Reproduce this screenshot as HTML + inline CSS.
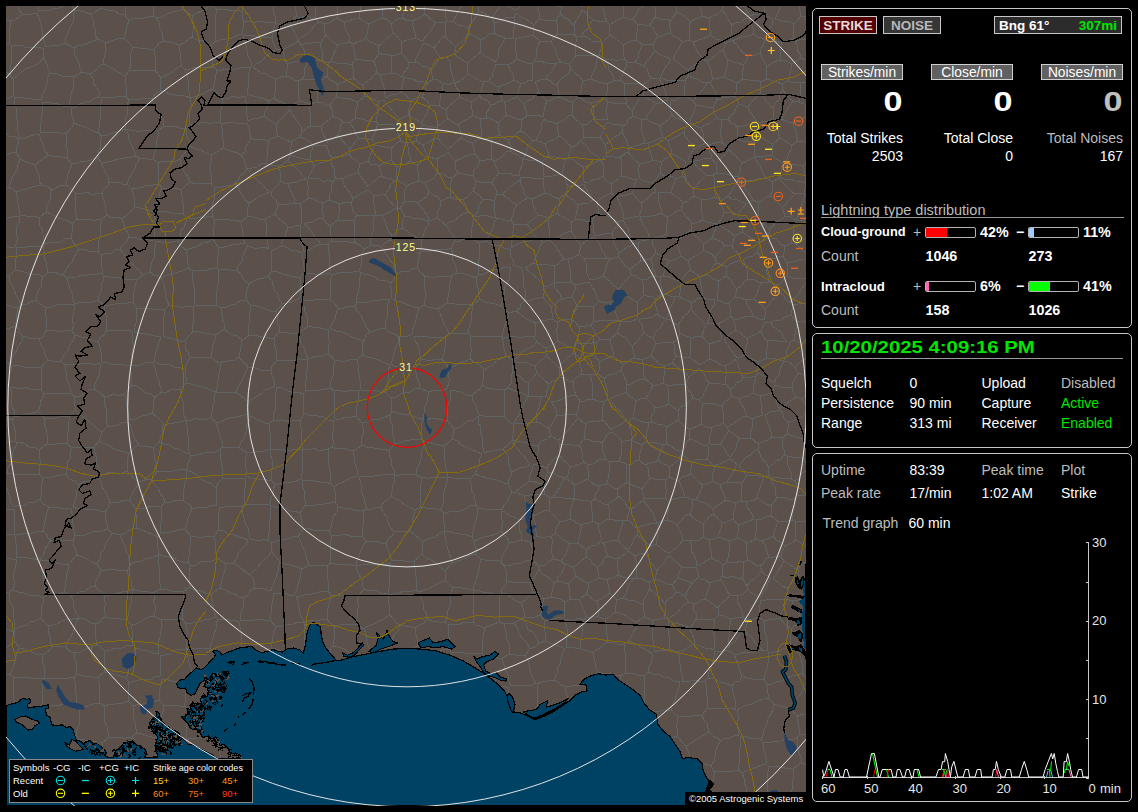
<!DOCTYPE html>
<html><head><meta charset="utf-8"><title>NexStorm</title><style>
*{box-sizing:border-box}
html,body{margin:0;padding:0;background:#000;}
body{width:1138px;height:812px;overflow:hidden;position:relative;font-family:"Liberation Sans",sans-serif;color:#fff;font-size:13.5px}
svg text{font-family:"Liberation Sans",sans-serif}
.box{position:absolute;left:812px;width:320px;border:1px solid #c8c8c8;border-radius:5px}
.t{position:absolute;white-space:nowrap;line-height:1;}
.b{font-weight:bold}
.g{color:#bdbdbd}
.gr{color:#00e600}
.btn{position:absolute;height:18px;border:1px solid #c8c8c8;text-align:center;font-weight:bold;font-size:13.5px;line-height:17px;white-space:nowrap}
.lbl{position:absolute;height:16px;width:82px;border:1px solid #d0d0d0;background:#616161;text-align:center;font-size:13.8px;line-height:15px;white-space:nowrap}
.big{position:absolute;font-weight:bold;font-size:28px;line-height:1;text-align:right;white-space:nowrap;transform-origin:right center;transform:scaleX(1.22)}
.bar{position:absolute;width:51px;height:11px;border:1px solid #b4b4b4;border-radius:2px;background:#000;overflow:hidden}
.bar i{display:block;height:100%}
.hr{position:absolute;height:1px;background:#9a9a9a}
</style></head><body>
<svg width="800" height="800" viewBox="6 6 800 800" style="position:absolute;left:6px;top:6px" shape-rendering="crispEdges">
<rect x="6" y="6" width="800" height="800" fill="#5c504a"/>
<path d="M38 12 L38 7 L37 2 L37 -3 L35 -9 L35 -14 M7 -14 L9 -9 L11 -5 L15 -0 L18 5 L19 10 L22 14 M22 14 L27 14 L32 14 L37 13 M-17 10 L-11 11 L-6 15 L-1 16 L5 20 L10 21 M22 14 L19 17 L15 20 L10 21 M-13 47 L-7 45 L-2 45 L3 43 L9 43 M10 21 L10 27 L9 32 L9 38 L9 43 M10 75 L6 72 L-0 70 L-5 68 L-10 65 L-15 64 M10 75 L10 68 L11 63 L11 57 L11 51 L11 45 M11 45 L9 43 M154 16 L153 11 L153 5 L152 -1 L154 -7 L152 -12 M154 16 L149 17 L144 18 L139 18 L133 19 L129 21 M129 21 L125 15 M125 15 L125 9 L126 5 L127 1 L129 -5 L130 -11 M179 -16 L180 -12 L182 -5 L182 -1 L183 4 L183 9 M156 18 L162 17 L167 14 L172 12 L177 11 L183 9 M156 18 L154 16 M105 -16 L105 -9 L104 -4 L101 2 L101 8 M101 8 L107 10 L111 10 L115 11 L119 14 L125 15 M597 601 L598 605 L598 610 L599 617 M597 601 L601 599 L606 596 L610 593 M599 617 L605 619 M616 612 L612 615 L610 617 L605 619 M616 612 L615 607 L616 605 L617 600 M610 593 L614 597 L617 600 M586 594 L579 600 M586 594 L589 596 L594 600 L597 601 M599 617 L594 616 L591 617 L586 617 M579 600 L581 603 L583 609 L585 613 L586 617 M475 707 L475 711 L473 716 L474 720 L473 727 L472 731 M475 707 L481 707 L485 708 L492 711 L497 711 L502 712 M502 712 L501 718 L502 722 L500 730 L502 734 L500 741 M472 731 L475 734 L479 736 L483 740 L486 743 M500 741 L496 741 L492 743 L486 743 M447 739 L452 738 L457 736 L461 733 L467 732 L472 731 M445 741 L447 745 L449 750 L451 754 L451 759 M451 759 L457 760 L463 761 L466 762 L473 763 L478 765 M478 765 L479 759 L482 754 L484 748 L486 743 M423 419 L422 423 L421 430 L421 433 L421 439 M423 419 L417 418 L411 415 L407 414 L402 414 L397 413 L392 411 M392 411 L390 415 M421 439 L416 439 L410 440 L405 441 L399 443 L395 443 M390 415 L390 420 L393 426 L392 432 L394 438 L395 443 M280 562 L285 564 L290 565 L297 567 L302 569 M280 562 L278 568 L278 572 L276 577 L274 583 L272 587 L271 591 M302 569 L300 575 L300 579 L298 584 L297 589 L294 595 M294 595 L289 595 L285 593 L278 594 L273 593 M70 4 L75 10 M70 4 L70 -2 L71 -7 L71 -13 M75 10 L81 11 L85 12 L90 14 M90 14 L94 13 L98 10 L101 8 M38 12 L44 10 L50 10 L54 8 L59 8 L64 6 L70 4 M183 9 L186 11 L192 16 M211 -7 L211 -3 L212 2 L212 6 M212 6 L208 7 L202 11 L197 13 L192 16 M869 693 L863 693 L858 691 L853 689 L846 688 L840 686 L835 686 L830 685 L825 684 L820 683 L814 682 L808 681 M869 693 L863 694 L859 697 L851 699 L848 699 L841 703 L835 704 L830 706 L825 708 L819 709 L813 711 L808 714 L804 714 L797 716 M808 681 L804 685 L802 691 L800 695 L797 698 L794 705 L791 709 M791 709 L797 716 M808 681 L802 673 M768 698 L774 704 M768 698 L768 694 L767 690 L767 685 M802 673 L797 675 L792 676 L787 678 L781 681 L776 682 L772 684 L767 685 M791 709 L785 707 L780 706 L774 704 M1481 767 L1474 768 L1468 768 L1463 766 L1458 766 L1452 766 L1446 766 L1439 764 L1433 765 L1427 765 L1421 764 L1415 765 L1410 764 L1403 763 L1398 763 L1392 764 L1386 763 L1379 763 L1374 762 L1367 762 L1361 761 L1355 762 L1350 760 L1342 761 L1337 760 L1331 759 L1326 760 L1320 760 L1313 759 L1308 759 L1301 760 L1296 757 L1290 759 L1285 758 L1277 758 L1273 758 L1266 757 L1260 756 L1254 756 L1247 757 L1242 755 L1235 756 L1229 756 L1225 754 L1218 755 L1212 755 L1206 754 L1199 754 L1195 753 L1188 753 L1182 752 L1176 752 L1170 752 L1165 751 L1158 751 L1151 751 L1147 752 L1140 750 L1135 750 L1128 750 L1121 750 L1116 749 L1111 749 L1104 749 L1099 749 L1092 749 L1085 748 L1081 747 L1075 748 L1068 746 L1062 746 L1056 746 L1051 747 L1045 746 L1039 745 L1033 744 L1027 746 L1021 744 L1014 744 L1010 745 L1003 745 L997 743 L991 744 L985 743 L979 742 L974 742 L968 741 L962 741 L956 740 L949 741 L944 741 L937 741 L932 739 L925 740 L920 739 L914 739 L908 739 L901 739 L894 739 L890 739 L884 738 L877 737 L870 738 L865 736 L859 736 L854 736 L848 735 L841 735 L836 734 L830 736 L824 734 L817 734 L811 734 L807 735 L800 734 M801 763 L807 765 L812 767 L817 767 L823 769 L829 772 L833 773 L840 776 L845 776 L850 779 L856 781 L861 782 M801 763 L801 758 L799 753 L798 748 L797 742 L797 738 M800 734 L797 738 M818 536 L814 540 L809 544 L806 547 M822 560 L818 560 L814 558 L809 557 M809 557 L806 552 L806 547 M817 581 L808 581 M798 569 L799 575 M798 569 L801 565 L806 561 L809 557 M808 581 L804 578 L799 575 M781 557 L784 561 M781 557 L782 552 L785 546 M784 561 L789 564 L794 568 L798 569 M785 546 L789 544 L793 542 L796 540 M796 540 L801 543 L806 547 M781 557 L778 556 L774 557 L769 557 M773 536 L776 540 L782 543 L785 546 M773 536 L767 539 L762 541 M769 557 L767 552 L765 545 L762 541 M586 594 L588 589 L589 583 M610 593 L609 589 L608 584 L607 580 M607 580 L599 578 M589 583 L595 580 L599 578 M584 620 L579 618 L575 620 L570 620 L565 619 M584 620 L583 625 L582 630 L582 636 L580 642 L580 648 M580 648 L575 648 L571 647 L567 648 M565 619 L566 624 L567 629 L567 635 L566 641 L567 648 M447 739 L447 733 L447 729 L447 724 L448 717 L447 712 L446 707 M446 707 L452 708 L458 706 L463 707 L470 707 L475 706 M485 658 L483 663 L483 667 L480 673 L481 677 L478 682 M485 658 L482 653 M478 682 L476 685 M451 677 L456 679 L460 681 L466 681 L471 683 L476 685 M451 677 L452 673 L451 667 L451 662 L451 657 L451 652 M482 653 L476 653 L472 653 L465 653 L462 652 L455 653 L451 652 M426 734 L432 740 M426 734 L420 734 L415 736 L408 736 L404 738 L397 738 L392 739 M432 740 L430 744 L427 749 L424 753 L420 758 L418 761 L415 767 M415 767 L410 767 L404 765 L398 766 M398 766 L397 760 L396 754 L394 749 L392 744 L392 739 M420 707 L421 713 L422 719 L424 724 L424 728 L426 734 M420 707 L415 707 L409 710 L403 710 L397 711 M397 711 L395 716 L394 721 L394 726 L394 733 L391 738 M503 711 L508 712 L515 713 L519 715 L525 715 L530 716 M503 711 L505 705 L506 699 L508 693 L509 688 M530 716 L533 712 L535 708 L537 706 M537 706 L537 701 L538 695 L537 689 L537 684 M536 683 L532 685 L526 685 L522 685 L515 685 L511 686 M478 682 L484 683 L489 684 L492 686 L498 686 L503 686 L509 688 M475 706 L476 702 L474 694 L475 691 L476 685 M502 658 L504 665 L505 669 L508 675 L509 681 L511 686 M502 658 L497 658 L490 657 L485 658 M449 789 L448 784 L445 779 L444 775 M449 789 L444 793 L438 794 L433 798 L428 800 L422 802 M444 775 L440 775 L435 773 L429 773 L425 772 L419 771 M419 771 L419 777 L421 782 L420 787 L420 791 L422 797 L421 801 M445 741 L442 741 L437 740 L432 740 M451 759 L448 766 L447 770 L444 775 M415 767 L419 771 M280 562 L277 558 L274 555 L272 551 M302 569 L309 565 M309 565 L307 560 L306 555 L305 550 L302 546 L300 540 L298 536 M298 536 L293 537 L287 539 L282 540 L277 541 L271 543 M272 551 L271 543 M330 388 L330 383 L333 376 L333 372 L334 365 L335 360 M330 388 L334 391 M334 391 L339 390 L345 392 L350 390 L354 390 L360 391 M361 390 L360 384 L360 381 L359 374 L358 370 L358 364 L357 360 M335 360 L341 361 L346 361 L352 359 L357 360 M423 419 L427 420 L432 418 L438 419 L442 420 L447 420 M423 419 L424 414 L425 407 L427 402 L428 397 L429 392 M429 392 L434 390 L438 390 L444 390 L447 388 M450 390 L450 396 L450 401 L447 407 L448 413 L447 420 M425 442 L421 439 M425 442 L429 442 L434 444 L439 445 L444 446 M444 446 L448 443 L452 439 M452 439 L453 435 L454 429 M447 420 L450 424 L454 429 M334 391 L334 397 L335 402 L334 407 L334 412 L335 419 M360 391 L358 395 L358 402 L357 406 L356 412 L356 416 M335 419 L341 419 L346 417 L351 417 L356 416 M390 415 L385 417 L380 419 L373 419 L368 422 L362 423 M389 451 L395 443 M389 451 L384 449 L379 449 L374 448 L366 447 L362 445 M362 445 L361 439 L363 434 L363 428 L362 423 M392 411 L391 406 L392 402 L391 398 M429 392 L420 388 M420 388 L415 389 L410 392 L405 392 L401 394 L396 397 L391 398 M361 390 L366 390 L370 391 L376 390 L380 392 L385 392 M356 416 L362 423 M391 398 L385 392 M362 355 L357 360 M362 355 L368 357 L373 358 L379 360 L385 363 L390 365 M385 392 L387 387 L388 381 L388 375 L388 370 L390 365 M276 627 L270 620 M276 627 L282 626 L286 625 L293 624 L298 622 L304 622 M270 620 L271 614 L271 610 L272 604 L273 599 L273 593 M296 596 L298 601 L299 607 L299 611 L301 616 L304 622 M12 590 L9 592 M12 590 L14 586 L14 581 L13 575 L15 569 L16 564 L16 559 M16 559 L11 559 L7 558 L1 559 L-4 559 L-9 560 L-15 559 M-4 594 L1 593 L5 593 L9 592 M820 381 L817 384 L813 388 L808 392 L806 395 L802 399 M834 397 L829 398 L823 400 L817 401 L811 404 L805 405 M805 405 L802 399 M814 420 L809 417 L806 414 M806 414 L805 405 M822 164 L817 162 L811 160 M811 160 L810 155 L809 149 L809 143 M809 143 L812 140 L815 138 L819 135 M824 178 L819 178 L815 179 L810 182 L805 182 M811 160 L803 166 M803 166 L804 171 L805 176 L805 182 M809 143 L805 142 L798 141 M805 117 L809 119 L813 123 L815 126 L818 129 M805 117 L801 120 L798 120 L793 122 M798 141 L796 136 L796 131 L794 127 L793 122 M10 75 L13 79 M-5 102 L-1 102 L4 98 L9 98 L13 96 M13 79 L13 84 L13 91 L13 96 M37 13 L39 18 L41 24 L42 30 L42 35 L44 41 L46 47 M75 10 L73 17 L73 22 L70 28 L69 31 L66 37 L65 43 M65 43 L60 45 L56 45 L50 46 L46 47 M90 14 L93 19 L93 24 L95 29 L95 35 L98 39 M98 39 L93 41 L88 43 L83 45 L79 45 L74 48 M65 43 L74 48 M11 45 L16 45 L23 46 L27 48 L34 47 L39 47 L44 49 M13 79 L18 75 L21 72 L26 69 L31 67 L35 65 L40 62 L43 58 M43 58 L44 49 M20 159 L26 162 L30 163 L35 165 M20 159 L18 164 L17 170 L13 176 L11 181 L9 187 M9 187 L16 192 M16 192 L22 190 L26 189 L32 187 L37 186 L42 185 M42 185 L39 181 L39 175 L37 171 L35 165 M390 283 L386 280 L380 281 L375 277 L369 275 L364 274 L360 272 M390 283 L391 289 L391 293 L391 298 M390 299 L384 299 L379 300 L373 301 L368 302 L362 302 L357 303 M357 303 L356 298 L358 293 L359 288 L359 282 L360 277 L360 272 M398 274 L395 269 L393 264 L390 260 L387 255 L384 251 L381 247 M398 274 L402 271 L407 272 L412 269 L417 268 M417 268 L418 263 L419 258 L419 254 M419 254 L414 251 L409 249 L405 247 L399 244 L395 243 L390 240 M381 247 L384 244 L390 240 M405 216 L400 208 M405 216 L410 217 L414 219 L418 218 L425 220 L429 220 M418 203 L420 206 L424 211 L427 215 L429 220 M418 203 L414 201 L410 202 L405 201 M405 201 L400 208 M446 225 L442 222 L437 218 M446 225 L449 230 L450 232 L454 236 L455 241 M421 241 L421 247 L421 251 M421 241 L423 236 L425 230 L428 226 L429 221 M421 251 L426 252 L434 250 L440 249 L444 250 L451 248 M455 241 L451 248 M429 221 L437 218 M474 216 L473 222 L472 227 L471 233 L471 238 M474 216 L468 212 M468 212 L463 214 L460 216 L454 221 L450 221 L446 225 M471 238 L466 238 L460 241 L455 241 M402 228 L397 231 L395 233 L392 236 M402 228 L407 231 L410 234 L416 237 L421 241 M419 254 L421 251 M390 240 L392 236 M405 216 L403 220 L402 224 L402 228 M429 191 L427 196 L422 200 L418 203 M429 191 L433 195 L438 197 L441 201 M441 201 L440 207 L437 213 L437 218 M538 215 L535 210 L533 205 L532 199 M538 215 L534 219 L529 222 L527 224 M517 205 L519 203 L524 200 L527 198 M517 205 L514 210 L513 215 L511 220 M527 198 L532 199 M527 224 L522 225 L519 224 L514 224 M511 220 L514 224 M502 194 L506 191 L511 186 L516 183 L520 180 M502 194 L506 197 L509 199 L512 202 L517 205 M520 180 L521 185 L523 188 L524 193 L527 198 M520 177 L527 177 L532 178 L537 178 L543 178 M520 177 L520 180 M532 199 L537 197 L541 195 L544 193 M544 193 L544 189 L543 184 L543 178 M499 173 L497 169 L495 164 L494 161 M499 173 L503 174 L510 173 L513 175 L519 176 M494 161 L499 159 L503 156 L506 152 L510 151 M510 151 L515 154 L518 155 L522 159 M519 176 L520 170 L522 165 L522 159 M502 194 L497 194 M497 194 L496 190 L494 186 L492 183 M492 183 L493 180 L496 177 L499 173 M544 177 L543 172 L543 167 L542 162 M542 162 L537 161 L532 160 L528 160 L523 159 M508 140 L512 138 L516 134 L520 131 M508 140 L510 145 L510 151 M520 131 L525 133 L529 137 L533 141 M523 159 L526 154 L527 149 L529 145 L533 141 M516 13 L519 16 L526 19 L529 21 L534 25 M516 13 L514 17 M534 25 L533 31 L533 35 M515 39 L519 38 L525 37 L529 36 L533 35 M514 17 L514 22 L514 29 L513 32 L513 38 M348 -4 L353 -2 L357 0 L360 3 M360 3 L365 1 L370 -1 M805 117 L805 110 L806 105 M812 102 L806 105 M806 60 L810 58 L814 56 L818 55 M806 60 L807 64 L809 71 L810 75 L811 80 M816 84 L811 80 M821 15 L814 14 L809 16 L804 17 M804 17 L806 21 L809 25 L812 30 L813 34 L816 38 M348 -4 L344 -1 L339 2 M330 -4 L334 -1 L339 2 M239 622 L240 627 L241 631 L241 637 L241 642 L242 648 M239 622 L234 620 L229 620 L224 619 L218 619 M218 619 L216 624 L216 629 L214 634 L213 638 L211 644 L210 649 M210 649 L214 651 L217 653 L220 656 M220 656 L225 655 L228 652 L234 651 L237 650 L242 648 M303 797 L297 796 L292 798 L285 798 L280 799 L274 798 M303 797 L303 792 L304 787 L303 782 L305 777 L304 772 M274 798 L271 794 L269 788 M304 772 L297 771 L292 772 L286 771 L280 771 L275 769 M269 788 L270 783 L272 778 L273 774 L275 769 M796 397 L802 399 M796 397 L793 399 L787 403 L785 405 L780 409 M788 422 L793 421 L797 419 L801 417 L806 414 M788 422 L784 418 L783 414 L780 410 M795 367 L793 365 L789 362 L784 361 M795 367 L798 373 M784 361 L782 365 L780 370 L779 375 L776 378 L774 383 M798 373 L796 377 L793 382 L792 387 M792 387 L786 387 L781 387 L775 385 M812 353 L808 358 L803 360 L799 363 L795 367 M820 381 L815 379 L809 376 L804 375 L798 373 M796 397 L793 391 L792 387 M772 393 L775 397 L777 404 L780 409 M772 393 L775 385 M753 316 L751 310 L747 305 L746 300 M753 316 L759 319 L764 320 M754 299 L758 303 L762 305 L765 309 M754 299 L746 300 M765 309 L765 315 L764 320 M682 176 L683 170 L685 166 L685 161 M682 176 L686 179 L689 184 L693 188 M693 188 L697 186 L700 181 L703 178 L706 175 M690 161 L695 164 L698 168 L702 171 L706 175 M617 600 L623 598 M607 580 L610 578 L613 578 L618 575 M618 575 L623 577 L629 578 L634 579 M634 579 L630 583 L628 587 L626 594 L623 598 M616 612 L622 614 L627 616 L630 619 L636 622 M636 622 L645 617 M645 617 L644 612 L643 608 L643 605 M623 598 L628 600 L633 600 L637 602 L643 605 M801 763 L794 768 M804 805 L800 801 L794 798 L790 795 M804 805 L808 803 L814 801 L820 799 L824 796 L830 794 L836 793 L840 791 L846 789 L851 786 L855 783 L861 782 M790 795 L792 790 L792 785 L793 779 L793 774 L794 768 M797 738 L791 740 L786 739 L781 741 L775 741 L769 743 L763 742 M794 768 L790 768 L785 768 L779 767 L774 766 L768 766 M766 764 L766 758 L765 753 L763 748 L763 742 M774 704 L773 709 L771 714 L768 719 L767 724 L764 730 L763 735 L761 740 M797 716 L798 722 L799 729 L800 734 M763 742 L761 740 M747 793 L752 793 L757 793 L763 796 L767 796 M747 793 L743 797 L738 801 M738 801 L737 806 L737 811 L738 818 L739 825 L738 831 L740 836 L739 843 L739 847 L738 854 L740 859 L739 866 L740 872 L740 878 L740 883 L740 889 L740 895 L739 901 L740 907 L742 913 L741 919 L741 925 L740 931 L741 936 L742 943 L741 948 L742 954 L742 959 L742 966 L742 971 L741 978 L743 984 L743 989 M743 989 L743 984 L745 978 L746 972 L746 967 L748 960 L747 954 L748 948 L750 943 L751 937 L750 931 L751 925 L753 920 L754 914 L753 908 L754 904 L757 897 L758 891 L758 885 L759 879 L759 874 L760 868 L762 863 L761 855 L763 852 L764 846 L765 839 L765 834 L767 828 L766 821 L767 815 L768 811 L770 805 L770 799 M770 799 L767 796 M768 766 L768 772 L767 778 L767 784 L768 790 L767 796 M766 764 L762 765 L757 767 L752 769 L748 770 L742 773 M742 773 L744 778 L744 782 L746 787 L747 793 M790 795 L785 796 L781 797 L775 797 L770 799 M605 619 L606 625 L606 631 L607 635 L608 642 M586 617 L584 620 M580 648 L584 650 L589 651 L593 653 M593 653 L596 650 L600 648 L604 644 L608 642 M591 684 L587 683 L581 685 L576 685 L571 686 L565 686 M591 684 L592 690 L594 693 L596 699 L597 704 L599 708 M565 686 L566 692 L567 695 L567 700 L567 706 L568 712 L569 716 M569 716 L574 716 L580 715 L586 717 L591 715 M591 715 L595 712 L599 708 M554 680 L558 682 L561 685 L565 686 M554 680 L557 673 L557 669 L560 664 L561 658 L562 655 L565 649 M593 653 L594 658 L595 662 L596 668 L598 672 M598 672 L595 676 L593 681 L591 684 M554 680 L548 681 L542 682 L537 684 M567 718 L561 716 L557 713 L551 711 L547 711 L542 707 L537 706 M592 741 L592 735 L590 731 L590 725 L592 721 L591 715 M592 741 L586 740 L581 740 L576 739 L570 740 L564 739 L560 739 M560 739 L561 734 L564 729 L564 723 L567 718 M686 746 L683 743 L680 739 L677 736 M686 746 L691 743 L694 741 L699 738 L704 735 L709 732 M677 736 L678 731 L676 725 L678 721 L677 716 M677 716 L681 716 L686 716 L691 716 L698 715 L702 715 M709 732 L708 728 L707 723 L704 720 L702 715 M705 681 L706 686 L706 692 L707 697 L707 703 L708 708 M705 681 L698 681 L694 680 L688 682 L682 681 M671 710 L677 716 M671 710 L672 705 L675 700 L677 693 L679 687 L680 682 M708 708 L702 715 M657 571 L654 566 L650 562 L648 557 L645 553 M657 571 L660 567 L664 563 L666 559 L670 556 M645 553 L648 549 L652 546 M652 546 L656 544 M656 544 L661 548 L664 551 L670 553 M705 681 L708 678 M708 708 L714 708 L720 708 L725 709 L731 708 L736 710 M736 710 L735 705 L735 700 L734 696 L732 689 L732 686 M708 678 L714 678 L719 682 L722 682 L727 684 L732 686 M768 698 L763 699 L758 701 L752 704 L748 705 L742 707 L737 710 M767 685 L764 680 M764 680 L760 679 L753 679 L747 678 L742 676 M742 676 L740 681 L735 682 L732 686 M715 651 L722 651 L727 650 M715 651 L714 657 L713 661 L711 668 L709 672 L708 678 M742 676 L740 671 L738 664 L736 659 L734 654 M734 654 L727 650 M718 608 L714 605 L709 601 L705 599 M718 608 L721 604 L727 599 L730 595 M709 583 L709 588 L707 593 L705 599 M709 583 L715 581 L720 580 M730 595 L727 591 L726 588 L723 583 L720 580 M784 561 L782 565 L778 571 L776 575 L773 579 M799 575 L795 579 L791 584 L787 588 M787 588 L782 586 L778 582 L773 579 M802 673 L802 669 L802 663 L801 659 L799 653 M799 653 L805 652 L810 649 L814 647 M764 680 L765 674 L767 668 L768 663 L768 659 L769 652 M799 653 L794 650 L790 648 M790 648 L785 648 L780 651 L774 652 L769 652 M763 650 L756 651 L752 653 L746 652 L739 654 L734 654 M763 650 L768 651 M645 741 L640 743 L635 745 L630 746 M645 741 L645 736 L648 731 L648 725 L649 721 L648 716 L650 710 M650 710 L645 707 M645 707 L641 708 L636 709 L631 710 L625 709 L621 710 M618 712 L618 718 L617 722 L618 729 L619 734 L619 738 M618 712 L621 710 M619 738 L623 741 L627 744 L630 746 M671 710 L665 710 L660 711 L654 711 L650 710 M656 747 L652 746 L648 744 L645 741 M656 747 L662 746 L666 741 L672 738 L677 736 M592 741 L597 747 M597 747 L603 744 L609 744 L614 741 L619 738 M599 708 L603 708 L609 709 L612 710 L618 712 M598 672 L603 674 L608 673 L614 675 L620 676 M620 676 L620 681 L619 688 L621 693 L622 698 L621 705 L621 710 M635 556 L636 561 L637 566 L636 572 L637 578 M635 556 L639 554 L645 553 M637 578 L642 578 L646 581 L649 582 M657 571 L655 579 M655 579 L649 582 M634 579 L637 578 M643 605 L644 599 L647 595 L649 589 M649 582 L649 589 M398 674 L402 675 L407 676 L412 679 L416 678 L422 680 M398 674 L396 670 L394 665 L393 661 M422 680 L424 674 L423 669 L425 664 L425 660 L426 655 M426 655 L423 651 L421 649 L417 646 M417 646 L411 649 L408 651 L403 654 L397 659 L393 661 M422 705 L428 705 L433 705 L439 705 L446 707 M422 705 L423 700 L421 694 L423 691 L421 686 L422 680 M446 707 L447 701 L446 694 L448 689 L449 684 L450 678 M422 680 L427 679 L434 679 L440 679 L444 679 L450 678 M420 707 L422 705 M398 674 L394 679 L392 683 L389 687 L386 690 M397 711 L392 708 L389 704 M386 690 L387 695 L388 698 L389 704 M426 655 L433 652 L436 653 L444 649 L449 649 M449 649 L451 652 M392 773 L386 772 L381 771 L378 770 L372 768 L367 769 L362 767 M392 773 L392 779 L392 784 L391 789 M390 790 L384 791 L380 794 L375 795 L370 797 L365 798 L359 801 M358 800 L357 795 L355 789 L355 784 L354 778 L353 773 M353 773 L358 770 L362 767 M398 766 L392 773 M365 736 L370 737 L375 736 L380 738 L387 738 L391 738 M365 736 L364 741 L365 746 L363 751 L363 756 L362 761 L362 767 M421 801 L416 798 L410 796 L406 795 L401 792 L395 791 L391 789 M408 1036 L408 1032 L406 1025 L406 1019 L407 1014 L405 1008 L405 1001 L406 996 L405 989 L404 984 L405 977 L404 973 L403 967 L404 960 L402 954 L402 949 L401 943 L400 938 L400 930 L399 925 L400 919 L400 913 L400 907 L398 902 L397 896 L397 891 L397 885 L397 879 L396 872 L396 867 L395 860 L396 854 L394 850 L393 843 L393 836 L393 831 L392 827 L392 820 L392 814 L391 808 L392 802 L390 796 L390 790 M409 1045 L409 1039 L411 1033 L411 1027 L410 1022 L410 1015 L411 1009 L411 1003 L413 998 L411 992 L413 986 L412 980 L412 973 L413 967 L414 962 L414 955 L413 950 L416 944 L415 939 L416 933 L415 926 L415 921 L417 915 L417 909 L418 903 L417 896 L418 890 L418 885 L418 879 L418 874 L418 866 L418 861 L420 855 L420 850 L420 844 L420 837 L420 831 L421 826 L422 820 L422 814 L423 807 L422 802 M408 1036 L407 1031 L406 1024 L405 1020 L404 1014 L403 1008 L402 1002 L400 996 L399 990 L398 984 L395 979 L395 974 L395 967 L393 961 L392 956 L391 950 L388 945 L388 939 L388 933 L385 927 L384 922 L382 916 L383 910 L381 904 L379 898 L379 893 L376 887 L376 881 L375 875 L373 870 L372 864 L372 857 L369 852 L369 846 L367 841 L366 836 L366 829 L364 825 L363 819 L363 811 L360 806 L359 801 M328 804 L329 811 L330 815 L331 823 L332 828 L333 835 L334 839 L334 845 L335 853 L336 858 L339 863 L338 869 L339 876 L341 881 L343 888 L343 894 L345 899 L345 905 L345 912 L347 916 L346 922 L348 928 L348 936 L350 941 L352 945 L351 953 L353 958 L354 964 L354 969 L356 975 L356 982 L358 987 L358 993 L358 999 L361 1005 L361 1012 L363 1016 L364 1024 L363 1028 L366 1036 L365 1042 L366 1048 L369 1052 L370 1059 L370 1065 L371 1071 L371 1077 L371 1083 L374 1089 L375 1094 L376 1099 L377 1107 L378 1111 L379 1119 L378 1123 L379 1130 L381 1135 L382 1142 L384 1147 L383 1153 L385 1160 L385 1166 L387 1171 L387 1177 L389 1182 L390 1188 L389 1194 L391 1201 L391 1208 L392 1212 L394 1219 L396 1226 L395 1231 L396 1237 L397 1243 L400 1248 L401 1255 L401 1259 L402 1266 L402 1273 L404 1278 L404 1283 L406 1291 L406 1295 L408 1303 L408 1306 L410 1314 L410 1320 L410 1326 L412 1331 M329 804 L335 803 L340 802 L346 802 L353 801 L358 800 M331 768 L338 768 L343 770 L348 771 L353 773 M331 768 L331 774 L331 779 L330 783 L331 788 L331 794 L329 800 L329 804 M520 864 L519 859 L518 853 L516 848 L516 841 L514 836 L513 831 L511 825 L511 818 L510 812 L507 806 L507 800 L506 795 M520 864 L521 859 L522 853 L525 847 L526 841 L527 837 L528 832 L530 826 L532 820 L532 816 L535 809 L535 805 L537 799 M534 795 L537 799 M534 795 L529 794 L523 795 L518 794 L512 794 L507 795 M473 791 L469 791 L463 792 L457 792 L452 791 M473 791 L476 794 L480 798 L482 800 M482 800 L481 806 L480 811 L479 818 L477 822 L476 829 L474 835 L474 841 L471 846 L470 850 L469 857 L468 862 L466 868 L465 873 L465 880 L462 886 L462 890 L461 897 L459 902 L457 909 L455 913 L455 918 L453 925 L451 930 L450 937 L449 942 L449 948 L448 954 L446 959 L444 964 L443 971 L441 977 L440 983 L439 988 M452 791 L452 798 L450 804 L451 809 L451 815 L451 822 L449 827 L450 834 L450 838 L449 845 L449 851 L448 856 L446 863 L446 869 L447 874 L447 880 L445 887 L444 893 L445 899 L444 904 L443 910 L444 917 L443 922 L443 929 L442 934 L443 939 L442 946 L441 952 L440 958 L441 965 L439 970 L441 976 L438 982 L439 988 M478 765 L477 770 L476 776 L475 780 L474 786 L473 791 M449 789 L452 791 M506 775 L502 772 L497 772 L493 769 L488 768 L482 767 L478 765 M506 775 L507 780 L507 785 L506 790 L507 795 M506 795 L501 796 L496 798 L491 798 L486 800 L482 800 M594 766 L595 762 L596 755 L595 751 L597 747 M594 766 L589 766 L583 765 L578 763 L573 761 L569 761 L563 760 M560 739 L557 742 M557 742 L558 746 L561 752 L562 754 L563 760 M568 792 L564 796 L559 799 L555 803 M568 792 L566 787 L565 783 L562 779 L559 775 L558 770 M555 803 L552 802 L547 802 L543 799 L537 799 M534 795 L535 791 L536 787 L538 780 L539 776 M558 770 L554 772 L549 774 L543 775 L539 776 M328 804 L323 804 L318 802 L311 802 L306 802 M306 802 L303 797 M304 772 L310 767 M330 767 L325 767 L321 767 L315 768 L310 767 M68 565 L62 564 L57 563 L51 562 L46 560 L40 560 M68 565 L68 571 L66 576 L66 581 L65 587 L64 592 M39 560 L41 566 L42 571 L43 577 L44 583 L45 590 L47 595 M64 592 L59 594 L52 594 L47 595 M12 590 L18 592 L22 592 L28 595 L32 595 L39 596 L43 598 M17 558 L22 557 L28 558 L34 559 L39 560 M43 598 L47 595 M39 801 L45 802 L51 800 L55 800 L61 799 L67 800 M39 801 L40 808 L41 812 L43 819 L42 825 L43 831 L45 836 L44 843 L45 848 L46 855 L47 861 L50 867 L48 872 L51 878 L51 884 L52 889 L52 896 L54 901 L55 907 L54 912 L56 918 L57 925 L58 930 L59 937 L59 942 L60 949 L60 955 L62 960 L64 965 L65 971 L66 977 L66 984 L67 990 L67 995 L68 1001 L69 1006 L69 1012 L71 1018 L71 1025 L73 1030 M67 800 L66 806 L69 813 L69 818 L69 824 L70 830 L70 834 L70 841 L70 847 L71 852 L72 858 L71 865 L71 871 L73 878 L72 882 L74 888 L73 895 L75 901 L76 907 L76 913 L75 917 L76 925 L77 930 L77 936 M72 794 L78 796 L83 797 L88 799 L93 802 L98 804 M72 794 L67 800 M98 804 L97 809 L97 816 L97 821 L94 827 L94 832 L94 839 L93 845 L92 849 L91 855 L90 861 L87 867 L87 873 L87 878 L86 884 L85 889 L83 895 L83 902 L82 908 L82 912 L79 920 L78 925 L79 930 L77 936 M126 805 L126 810 L126 816 L126 822 L125 829 L126 834 L126 840 L127 848 L126 854 L125 858 L126 865 L128 870 L126 877 L127 882 L126 889 L127 894 L127 900 L127 907 L127 914 L127 919 L128 926 L127 931 L128 937 L127 942 L127 948 L127 955 L128 961 L128 967 L129 973 L127 978 L128 985 L127 991 L129 996 L129 1003 L128 1009 L128 1015 L128 1021 L128 1026 L128 1032 L128 1039 L128 1045 L128 1051 L129 1057 L129 1062 L128 1068 L128 1074 L129 1080 L128 1086 L129 1093 L130 1099 L128 1103 L128 1111 L129 1116 L128 1122 L128 1128 L130 1134 L130 1141 L130 1146 L130 1152 L130 1159 L130 1165 L129 1171 L131 1176 L129 1183 L131 1189 L129 1194 L130 1201 L130 1207 L130 1211 L130 1219 L131 1224 L130 1229 L129 1236 L130 1242 L130 1248 L131 1255 L131 1260 L130 1267 L130 1271 L131 1278 L130 1285 L131 1290 L131 1296 L130 1303 L131 1307 L132 1314 L132 1320 L131 1327 L132 1333 L130 1338 L132 1344 L130 1350 L131 1356 L131 1363 L133 1367 L132 1374 L131 1380 L132 1387 L131 1393 L132 1399 L133 1404 L132 1411 L132 1417 L133 1422 L132 1427 L133 1434 L132 1441 L133 1446 L132 1452 L133 1458 L132 1465 L132 1470 L132 1476 L134 1482 L133 1488 L132 1495 L132 1499 L133 1506 L133 1512 L133 1519 L134 1525 L133 1530 L133 1536 L133 1543 L134 1548 L134 1553 L133 1561 L135 1566 L133 1573 L134 1579 L133 1584 L135 1589 L135 1595 L134 1603 L135 1609 L135 1615 L133 1621 L135 1626 L134 1632 L135 1638 L133 1645 L134 1650 L135 1656 L134 1662 L136 1668 L134 1675 L135 1681 L134 1687 L136 1692 L134 1698 L136 1704 L136 1709 L136 1717 L136 1722 L134 1729 L135 1735 L136 1740 L135 1745 L136 1752 L137 1759 L135 1765 L136 1771 L136 1776 L136 1783 L135 1787 L136 1795 L135 1801 L135 1805 L136 1811 L136 1818 L136 1823 L136 1830 L136 1836 L136 1841 L137 1848 L136 1853 L136 1860 L138 1865 L136 1872 L136 1878 L136 1885 L137 1889 L138 1895 L137 1902 L137 1908 L138 1914 L137 1919 L137 1925 L136 1932 L138 1937 L137 1944 L137 1950 L137 1957 L137 1962 L139 1968 L137 1974 L138 1979 L137 1987 L137 1991 L137 1998 L139 2003 L138 2010 L138 2015 L138 2022 L138 2027 L138 2033 L139 2040 L139 2046 L139 2052 L138 2059 L139 2065 L140 2070 L138 2075 L140 2081 L138 2088 L140 2093 L138 2099 L140 2107 L140 2112 L140 2118 L139 2124 L139 2129 L140 2136 L139 2141 L141 2148 L140 2153 L139 2161 L139 2167 L141 2171 L140 2178 L141 2183 L140 2191 L140 2195 L140 2201 L141 2208 L141 2214 L141 2219 L140 2226 L140 2233 L141 2238 L141 2244 L141 2250 L141 2256 L141 2263 L140 2268 L142 2274 L141 2280 L141 2285 L140 2291 L142 2298 L142 2304 L140 2310 L140 2316 L141 2321 L140 2328 L141 2333 L142 2340 L141 2345 L141 2352 L141 2358 L141 2365 L141 2370 L141 2376 L142 2382 L142 2386 L143 2394 L142 2400 L143 2405 L142 2411 L143 2418 L142 2423 L142 2429 L142 2436 L142 2441 L142 2448 L142 2453 L142 2460 L142 2465 L142 2471 L143 2478 L143 2484 L143 2490 L143 2494 L143 2502 L143 2508 L143 2514 L142 2520 L143 2526 L143 2532 L143 2537 L144 2544 L143 2549 L144 2556 L143 2562 L144 2568 L144 2574 L143 2578 L144 2585 L143 2591 L145 2598 L145 2603 L145 2609 L145 2615 L144 2622 L143 2628 L145 2634 L145 2639 L144 2646 L146 2652 L145 2657 L144 2663 L144 2669 L145 2675 L144 2682 L145 2688 L145 2692 L146 2700 L145 2704 L146 2712 L146 2718 L146 2723 L146 2729 L145 2736 L145 2742 L146 2747 L145 2752 L147 2759 L146 2765 L146 2771 L145 2777 L147 2783 L147 2789 L147 2794 L147 2801 L146 2807 L147 2814 L145 2820 L146 2824 L146 2832 L147 2836 L148 2844 L146 2849 L146 2855 L148 2861 L146 2868 L148 2874 L146 2880 L146 2886 L148 2891 L148 2897 L148 2902 L148 2908 L148 2915 L147 2922 L147 2926 L149 2933 L148 2938 L149 2946 L147 2952 L148 2957 L148 2962 L148 2968 L149 2975 L149 2981 L149 2987 L148 2992 L147 3000 L147 3005 L148 3012 L149 3018 L149 3024 L149 3028 L148 3036 L148 3040 L148 3047 L150 3054 L148 3060 L148 3065 L148 3071 L149 3077 L150 3083 L148 3090 L150 3095 L149 3101 L149 3107 L148 3114 L150 3118 L149 3126 L151 3132 L149 3136 L149 3142 L149 3149 L149 3154 L150 3160 L150 3167 L151 3173 L149 3178 L149 3185 L151 3191 L150 3197 L150 3203 L149 3208 L151 3216 L150 3220 L151 3227 L150 3232 L150 3239 L150 3244 L151 3251 L150 3256 L150 3264 L152 3268 L150 3274 L151 3281 L152 3288 L150 3293 L152 3298 L152 3305 L152 3311 L151 3316 L151 3322 L151 3328 L151 3335 L152 3341 L153 3348 L153 3352 L151 3358 L152 3366 L152 3371 L152 3376 L151 3382 L152 3388 L153 3394 L153 3402 L152 3406 L153 3412 L152 3418 L152 3424 L153 3432 L152 3436 L153 3442 L152 3449 L153 3454 L154 3461 L154 3468 L152 3473 L153 3478 L153 3484 L153 3490 L153 3498 L153 3504 L154 3508 L154 3514 L155 3521 L154 3526 L153 3532 L154 3538 L153 3544 L155 3552 L155 3557 L155 3562 L154 3569 L155 3574 L155 3581 L153 3586 L154 3592 L154 3598 L154 3604 L153 3611 L155 3617 L155 3623 L155 3629 L154 3634 L155 3640 L155 3646 L155 3652 L156 3659 L156 3665 L155 3672 L155 3677 L156 3682 L155 3689 L155 3694 L156 3700 L155 3706 L155 3712 L155 3719 L155 3725 L155 3730 L156 3737 L155 3743 L156 3747 L157 3755 L156 3760 L155 3767 L156 3772 L157 3778 L157 3785 L156 3791 L157 3797 L157 3802 L156 3809 L157 3813 L156 3820 L156 3826 L157 3833 L158 3839 L158 3845 L156 3850 L156 3856 L158 3863 L157 3869 L157 3874 L158 3881 L158 3887 L157 3893 L157 3899 L158 3904 L158 3911 L157 3916 L158 3922 L158 3928 L157 3934 L159 3940 L157 3947 L158 3952 L159 3959 L158 3964 L157 3970 L159 3975 L158 3982 L158 3988 L159 3995 L158 3999 L159 4007 L159 4011 L159 4019 L160 4025 L160 4031 L158 4036 L160 4042 L158 4048 L159 4055 L158 4059 L159 4067 L159 4072 L159 4078 L160 4084 L160 4091 L160 4095 L159 4102 L159 4109 L161 4115 L159 4120 L160 4125 L159 4133 L159 4138 L160 4143 L160 4150 L160 4156 L160 4163 L160 4167 L159 4174 L161 4180 L161 4186 L160 4193 L161 4199 L161 4203 L161 4209 L161 4216 L160 4222 L160 4228 L161 4235 L162 4241 L161 4245 L161 4253 L160 4259 L161 4265 L161 4270 L160 4276 L161 4283 L160 4288 L161 4294 L161 4300 L162 4305 L161 4311 L161 4318 L161 4324 L161 4330 L161 4336 L163 4342 L162 4347 L162 4353 L163 4359 L163 4367 L161 4373 L162 4377 L162 4385 L163 4391 L162 4396 L162 4402 L162 4407 L164 4415 L164 4420 L162 4427 L163 4433 L163 4437 L163 4443 L163 4450 L163 4457 L162 4463 L164 4468 L163 4474 L163 4480 L163 4486 L163 4492 L164 4499 L163 4503 L163 4510 L163 4516 L163 4521 L164 4528 L165 4534 L164 4540 L163 4547 L164 4553 L163 4558 L164 4564 L165 4570 L164 4576 L164 4583 L164 4587 L163 4593 L164 4600 L165 4606 L164 4612 L165 4619 L164 4625 L164 4629 L164 4635 L165 4642 L165 4648 L164 4654 L166 4661 L165 4665 L166 4673 L165 4678 L165 4683 L165 4689 L165 4696 L166 4701 L165 4708 L166 4713 L165 4720 L165 4727 L165 4733 L167 4739 L166 4743 L165 4749 L167 4756 L166 4762 L165 4767 L167 4775 L166 4780 L166 4785 L166 4791 L166 4798 L167 4804 L167 4811 L168 4816 L168 4821 L166 4827 L167 4833 L168 4840 L166 4846 L166 4851 L166 4859 L167 4864 L167 4869 L166 4876 L167 4882 L167 4888 L167 4895 L167 4900 L167 4905 L167 4911 L168 4917 L169 4923 L168 4929 L168 4936 L168 4942 L167 4947 L167 4954 L168 4960 L169 4966 L168 4972 L168 4978 L168 4985 L169 4990 L169 4996 L168 5001 L170 5008 L168 5013 L169 5019 L170 5024 L169 5031 L169 5038 L169 5044 L169 5050 L170 5057 L169 5061 L169 5068 L169 5073 L170 5080 L169 5086 L170 5091 L170 5097 L169 5104 L171 5109 L170 5115 L169 5122 L169 5127 L170 5133 L170 5140 L169 5145 L170 5152 L170 5158 L169 5163 L170 5170 L170 5174 L170 5181 L170 5188 L170 5194 L171 5199 L171 5205 L171 5211 L171 5217 L172 5224 L170 5228 L171 5234 L171 5241 L172 5248 L172 5254 L171 5259 L171 5266 L172 5272 L172 5278 L171 5283 L171 5289 L171 5295 L171 5301 L172 5307 L171 5314 L173 5318 L171 5325 L171 5332 L172 5338 L172 5344 L171 5350 L171 5356 L171 5361 L172 5366 L172 5373 L171 5380 L173 5385 L173 5391 L172 5398 L173 5403 L173 5410 L173 5415 L172 5421 L172 5426 L174 5433 L172 5439 L174 5445 L173 5451 L174 5458 L174 5463 L173 5470 L174 5475 L173 5481 L174 5487 L173 5494 L175 5500 L173 5505 L174 5511 L173 5518 L174 5524 L174 5530 L175 5534 L173 5540 L175 5547 L174 5553 L173 5560 L175 5565 L175 5570 L174 5577 L175 5582 L176 5590 L174 5595 L174 5601 L175 5607 L175 5613 L175 5620 L176 5626 L175 5631 L175 5637 L174 5643 L174 5650 L174 5654 L174 5662 L175 5668 L175 5674 L176 5679 L175 5685 L176 5691 L175 5696 L175 5703 L176 5709 L176 5715 L175 5721 L176 5726 L176 5732 L176 5740 L176 5744 L177 5751 L176 5756 L177 5762 L175 5769 L177 5775 L176 5782 L176 5787 L176 5792 L176 5799 L177 5805 L176 5811 L176 5817 L176 5824 L177 5829 L177 5836 L178 5841 L177 5847 L178 5853 L177 5859 L177 5866 L178 5870 L177 5878 L177 5884 L177 5888 L178 5894 L177 5900 L178 5907 L178 5913 L179 5920 L178 5925 L178 5932 L177 5937 L178 5943 L178 5949 L178 5955 L177 5960 L178 5966 L179 5972 L178 5980 L180 5984 L178 5990 L180 5997 L179 6002 L178 6008 L180 6016 L179 6020 L180 6026 L179 6033 L179 6038 L179 6044 L180 6050 L179 6056 L180 6062 L178 6069 L179 6075 L180 6080 L179 6086 L181 6092 L179 6098 L180 6104 L180 6111 L180 6117 L180 6123 M126 805 L119 803 L115 802 L108 801 L103 801 M103 801 L98 804 M309 565 L316 565 L320 565 L327 566 M296 596 L301 596 L307 594 L312 594 L316 593 L322 591 L328 591 M327 566 L327 570 L327 576 L328 581 L328 586 L328 591 M335 626 L340 625 L345 624 L350 624 L356 624 M335 626 L330 623 L327 619 M356 624 L357 618 L357 612 L359 605 L357 601 L359 595 M327 619 L327 614 L328 608 L330 601 L331 595 M359 595 L353 595 L346 596 L343 595 L336 596 L331 595 M304 622 L309 621 L316 620 L320 620 L327 619 M331 595 L328 591 M191 456 L190 454 M191 456 L190 460 L187 465 L187 469 M190 454 L184 452 L179 449 L174 448 L169 445 L165 444 L159 442 M159 442 L153 448 M153 448 L154 452 L154 457 L156 462 L156 467 L157 472 M157 472 L164 471 L169 471 L174 471 L182 469 L187 469 M15 270 L15 264 L16 258 L16 254 L16 248 M15 270 L21 271 L27 273 L33 275 L39 274 L43 277 M16 248 L23 247 L26 247 L33 246 L36 246 L43 247 M43 247 L44 251 L44 257 L46 262 L47 268 L48 272 M43 277 L48 272 M308 359 L312 358 L317 356 L322 356 L328 354 M308 359 L306 354 L304 348 L301 343 L300 338 L298 333 M328 354 L328 348 L329 344 L329 339 L328 334 L329 329 M329 329 L324 329 L317 327 L312 327 L308 326 M298 333 L303 330 L308 326 M330 388 L326 389 L320 390 L316 390 L310 390 L306 391 M308 359 L307 364 L307 370 L306 376 L306 381 L305 385 L306 391 M335 360 L328 354 M279 332 L284 332 L289 333 L293 333 L298 333 M279 332 L274 338 M274 338 L274 343 L276 350 L276 356 L276 361 M308 359 L303 359 L298 360 L291 361 L286 360 L282 360 L276 361 M306 391 L303 394 M334 420 L328 420 L323 417 L318 416 L314 415 L308 415 L304 413 M304 413 L303 409 L304 404 L303 399 L303 394 M250 539 L249 534 L248 528 L245 523 L244 518 L242 512 L242 506 M218 530 L223 530 L228 534 L234 535 L239 537 L243 538 L248 540 M218 530 L219 524 L218 517 L219 512 L219 507 M242 506 L237 507 L229 506 L225 507 L219 507 M192 508 L197 508 L202 507 L208 507 L211 505 L217 505 M192 508 L190 505 L185 502 L183 500 M183 500 L183 496 L184 489 L184 484 L186 480 L186 474 L187 470 M187 470 L192 472 L198 476 L201 479 L207 482 L212 484 L216 488 M217 505 L216 500 L217 493 L216 488 M185 529 L191 536 M185 529 L187 523 L188 519 L190 513 L192 508 M191 536 L198 537 L203 537 L207 536 L214 537 M214 537 L218 530 M220 449 L215 452 L208 452 L204 453 L197 455 L191 456 M220 449 L220 454 L221 461 L222 466 L222 472 L222 479 M216 488 L218 483 L222 479 M753 316 L749 316 L744 317 L738 319 L733 319 M765 322 L761 331 M736 330 L735 325 L733 319 M736 330 L741 333 L743 336 L747 338 M761 331 L757 334 L751 336 L747 338 M482 454 L477 452 L472 450 L466 447 L461 445 L458 441 L452 439 M454 429 L460 427 L463 424 L468 421 L474 420 L478 416 M484 453 L483 448 L482 442 L482 436 L480 432 L481 427 L478 423 L478 416 M303 449 L301 442 L302 438 L301 432 L301 427 L300 421 M303 449 L308 450 L314 448 L317 450 L323 450 L328 449 M334 420 L333 425 L333 431 L332 437 L334 441 L332 447 M304 413 L300 421 M328 449 L332 447 M362 445 L357 449 L353 451 M332 447 L337 449 L342 448 L349 450 L353 451 M511 472 L516 470 L521 467 L526 467 L530 465 M511 472 L510 467 L508 462 L508 457 L506 453 L503 449 M530 465 L527 460 L524 456 L521 453 L518 449 L514 445 L512 440 M503 449 L508 445 L512 440 M475 474 L477 469 L479 465 L479 460 L482 454 M475 474 L480 476 L487 478 L491 479 L497 480 L504 483 L508 484 M508 484 L509 479 L511 476 L511 472 M484 453 L489 451 L493 451 L498 450 L503 449 M388 593 L381 593 L376 590 L370 591 L364 589 M388 593 L389 588 L389 580 L389 576 L390 569 L391 563 M364 589 L362 585 L362 579 L359 575 L357 570 L356 566 M391 563 L386 564 L380 564 L374 564 L368 564 L361 565 L356 566 M400 625 L405 626 L409 626 L415 628 M400 625 L396 623 L393 618 L389 615 M389 615 L390 611 L389 604 L388 599 L389 594 M389 594 L394 594 L399 593 L404 591 L410 592 L416 590 M419 592 L420 596 L423 602 L423 608 L426 613 L427 619 M419 592 L416 590 M427 619 L424 623 L420 625 L415 628 M417 646 L417 641 L417 638 L415 632 L415 628 M386 655 L387 649 L391 646 L392 640 L394 635 L398 631 L400 625 M386 655 L393 661 M369 652 L369 647 L366 640 L366 634 L364 629 M369 652 L374 654 L379 654 L386 655 M364 629 L368 626 L374 624 L379 621 L384 619 L389 615 M356 624 L364 629 M359 595 L364 589 M414 561 L408 562 L404 561 L398 560 L392 561 M414 561 L415 568 L415 573 L416 577 L416 585 L416 590 M445 622 L447 616 L448 610 L450 606 L450 599 L451 593 L453 588 M445 622 L439 622 L432 621 L427 619 M446 581 L453 588 M446 581 L441 582 L435 585 L430 588 L424 590 L419 592 M422 554 L418 558 L414 561 M422 554 L426 558 L431 560 L437 564 L440 567 L445 571 M445 571 L445 575 L446 581 M445 622 L448 625 M448 625 L448 632 L449 637 L449 643 L449 649 M369 652 L363 657 M335 626 L334 631 L335 635 L334 640 L333 646 M363 657 L358 655 L353 653 L348 652 L344 649 L338 647 L333 646 M304 652 L310 651 L314 650 L320 650 L325 649 L330 649 M304 652 L305 646 L304 639 L304 633 L304 627 L304 622 M330 649 L333 646 M-8 708 L-3 710 L3 709 L8 711 L14 711 M-14 747 L-10 744 L-4 741 L0 739 L6 737 L11 734 L15 731 M15 731 L15 726 L16 722 L14 717 L15 712 M39 801 L40 796 L41 789 L43 783 L44 778 L46 773 L47 766 M39 801 L34 800 L27 799 L22 799 L17 798 M17 798 L13 793 M13 793 L12 788 L12 782 L13 776 L12 770 M46 765 L40 765 L36 767 L31 766 L27 767 L21 767 L16 768 M16 768 L12 770 M-4 878 L-2 871 L-0 866 L2 860 L3 854 L3 849 L4 844 L6 839 L7 832 L10 828 L10 821 L12 815 L15 810 L16 804 L17 798 M-20 799 L-15 798 L-9 798 L-3 797 L1 795 L7 795 L13 793 M-13 760 L-9 763 L-3 763 L2 765 L8 769 L12 770 M44 741 L38 740 L32 740 L25 740 L20 738 M44 741 L44 748 L46 753 L46 759 L46 765 M20 738 L19 744 L19 749 L18 756 L15 761 L16 768 M20 738 L15 731 M17 558 L16 553 L17 546 L15 540 L16 535 M16 535 L22 534 L26 533 L33 533 L39 531 L43 531 M40 560 L43 556 L45 549 L48 545 L51 540 M43 531 L47 535 L48 538 L51 540 M77 555 L76 551 L74 546 L73 541 M77 555 L83 557 L87 559 L92 562 L97 564 M97 564 L100 559 L101 553 L104 549 L106 543 L109 539 L112 533 M73 541 L75 536 M75 536 L80 535 L85 535 L92 532 L96 531 L102 531 L107 529 M112 533 L107 529 M68 565 L70 563 L74 558 L77 555 M51 540 L55 541 L62 540 L67 540 L73 541 M822 443 L816 443 L812 443 L805 443 M814 420 L811 424 L809 429 L805 434 L802 439 M805 443 L802 439 M788 422 L788 428 L787 434 M802 439 L797 437 L793 436 L787 434 M742 163 L740 167 L740 172 L738 176 M742 163 L739 160 L736 156 L732 153 L729 149 M738 176 L733 176 L726 174 L721 173 L716 173 M716 173 L716 164 M729 149 L726 154 L723 156 L720 160 L716 164 M690 161 L695 161 L700 160 L706 158 L711 158 M706 175 L713 175 M713 175 L716 173 M711 158 L716 164 M688 160 L690 154 L694 149 M708 144 L708 148 L711 154 L711 158 M708 144 L705 143 M694 149 L696 148 L702 145 L705 143 M708 144 L712 144 L717 142 L721 142 M729 147 L721 142 M415 368 L409 367 L406 367 L401 366 L394 366 L391 364 M415 368 L419 363 L421 359 M421 359 L420 355 L419 349 L418 345 L415 341 L414 336 M391 364 L393 358 L394 353 L396 347 L398 343 L399 337 M399 337 L404 336 L408 336 L412 334 M420 388 L419 383 L417 378 L416 373 L415 368 M419 308 L417 314 L416 319 L415 324 L412 330 L412 334 M419 308 L414 307 L411 306 L406 304 L401 302 L396 301 L391 298 M385 328 L385 322 L388 316 L387 311 L388 305 L390 299 M385 328 L389 332 L395 334 L399 337 M449 368 L445 363 L442 359 M449 368 L453 367 L459 363 L466 361 L470 359 M442 359 L444 353 L445 347 L445 343 L446 337 M470 359 L471 352 L471 348 L470 341 L471 336 M468 333 L471 336 M468 333 L462 333 L459 333 L453 333 L449 333 M449 333 L446 337 M447 388 L449 383 L449 378 L448 373 L449 368 M421 359 L426 360 L433 360 L437 359 L442 359 M414 336 L419 336 L424 336 L429 337 L436 337 L440 337 L446 337 M20 215 L26 216 L29 216 L35 216 L39 218 M43 247 L44 244 M39 218 L39 224 L42 229 L43 234 L44 239 L44 244 M15 247 L17 241 L17 236 L16 231 L17 226 L20 221 L19 216 M-11 128 L-6 129 L-0 132 L4 132 L9 136 L15 136 L19 139 M20 138 L18 132 L17 126 L17 119 L16 114 L16 108 L14 102 L14 97 M20 215 L19 209 L18 204 L17 197 L16 192 M42 185 L48 187 L52 190 M39 218 L46 212 M52 190 L50 195 L50 200 L47 206 L46 212 M44 244 L49 243 L55 242 L61 242 L64 239 L71 238 M46 212 L51 214 L57 217 L62 219 L68 221 L72 224 M71 238 L72 233 L73 229 L72 224 M63 275 L59 274 L54 272 L48 272 M63 275 L66 270 L69 265 L72 262 L74 257 L76 254 L79 249 M71 238 L73 242 L76 246 L79 249 M274 338 L269 338 L263 337 L258 336 L253 335 L249 336 M239 357 L242 361 L245 363 L248 367 M239 357 L240 352 L241 346 L242 340 M248 367 L253 367 L260 370 L266 370 L271 371 M276 361 L272 366 L271 371 M242 340 L249 336 M15 534 L11 534 L6 534 L1 534 L-6 535 L-12 535 L-16 535 M15 534 L14 529 L14 524 L14 518 L15 515 L14 509 M14 509 L9 510 L3 509 L-1 510 L-7 511 L-11 511 L-16 512 M823 202 L818 201 L813 197 L810 196 L805 194 M805 182 L805 188 L804 193 M543 117 L538 115 L533 115 L527 116 M543 117 L544 111 L545 106 L547 101 M547 101 L544 98 L541 95 L539 92 M539 92 L536 94 L532 99 L527 101 L524 104 M527 116 L526 111 L524 104 M677 240 L674 237 L669 237 L666 234 M677 240 L678 246 L679 250 L681 256 M666 234 L662 236 L658 237 L653 239 M681 256 L676 259 L670 261 M670 261 L665 259 L660 255 L655 253 M653 239 L652 244 L655 249 L655 253 M374 62 L379 53 M374 62 L376 67 L377 73 M391 73 L386 74 L380 75 M391 73 L392 67 L391 62 L391 56 M391 56 L388 54 L384 55 L379 53 M377 73 L380 75 M363 85 L366 82 L371 79 L373 76 L377 73 M363 85 L359 83 L356 80 L353 78 M353 78 L353 73 L353 69 L352 64 M352 64 L355 60 M355 60 L360 59 L365 61 L370 60 L374 62 M409 63 L406 58 L403 55 L401 53 M409 63 L408 67 L404 73 L402 77 M402 77 L397 74 L391 73 M401 53 L396 55 L391 56 M350 42 L353 44 M350 42 L349 36 L347 33 L345 27 L344 22 M353 44 L358 42 L361 41 L366 38 M366 38 L367 34 L368 29 L368 24 M344 22 L349 21 L354 19 L359 18 M368 24 L363 21 L359 18 M338 45 L335 51 L333 56 L331 61 M338 45 L341 44 L346 43 L350 42 M352 64 L348 64 L342 63 L337 63 L331 61 M355 60 L355 55 L354 49 L353 44 M338 45 L333 42 L330 39 L326 35 M337 18 L332 21 L329 23 L325 24 M337 18 L344 22 M326 35 L324 31 L325 24 M378 46 L379 53 M378 46 L373 42 L370 42 L366 38 M360 3 L361 9 L359 13 L359 18 M337 18 L338 12 L337 7 L339 2 M370 -1 L375 3 L381 4 M381 4 L382 8 L382 13 L383 18 M383 18 L377 20 L373 22 L368 24 M496 217 L491 217 L485 215 L480 216 L475 216 M496 217 L494 211 L494 205 L494 201 M475 216 L478 211 L479 205 L483 200 M494 201 L488 199 L483 200 M486 241 L488 237 L491 232 L493 228 L494 223 L497 218 M486 241 L479 243 M479 243 L471 238 M497 218 L502 219 L505 220 L511 220 M497 194 L494 201 M521 120 L522 125 L520 131 M521 120 L527 116 M533 141 L536 140 M544 119 L542 123 L541 130 L539 134 L536 140 M572 115 L568 116 L564 120 L560 122 L557 124 M572 115 L573 111 L572 105 L573 102 M547 101 L551 100 L555 98 L559 97 M559 97 L565 99 L568 101 L573 102 M544 119 L547 121 L552 122 L557 124 M492 183 L486 182 L481 182 L476 181 M480 160 L486 160 L491 159 M480 160 L478 166 L474 170 L473 176 M491 159 L494 161 M473 176 L476 181 M483 200 L480 196 L476 193 L473 191 M476 181 L475 186 L473 191 M468 212 L466 207 L465 204 L463 200 M473 191 L469 195 L467 197 L463 200 M441 201 L445 199 L450 197 M450 197 L455 199 L459 199 L463 200 M479 243 L479 248 L480 253 L479 259 L478 264 L478 269 L478 275 M478 275 L476 278 M451 248 L453 253 L452 259 L455 264 L456 267 L457 273 M476 278 L471 276 L465 274 L460 273 L457 273 M478 275 L484 274 L490 271 L495 270 L500 269 L505 267 L511 267 M501 306 L503 300 L504 295 L504 289 L506 284 L509 279 L510 272 L511 267 M501 306 L495 304 L490 303 L485 302 L480 299 M476 278 L476 283 L478 288 L478 293 L480 299 M546 -0 L538 1 M546 -0 L551 3 L556 6 L562 7 M538 1 L538 7 L539 13 L539 19 M539 19 L544 20 L549 20 L556 20 M556 20 L560 13 M562 7 L560 13 M531 -4 L538 1 M570 -13 L571 -8 L572 -4 L572 1 M572 1 L567 3 L562 7 M515 10 L519 8 L522 3 L526 -1 L531 -4 M534 25 L539 19 M551 42 L544 41 L540 41 M551 42 L554 37 L558 34 M558 34 L557 30 L557 24 L556 20 M540 41 L533 35 M496 64 L500 65 L504 64 L508 65 M496 64 L495 68 L493 72 L492 77 L489 81 M498 87 L494 85 L489 81 M498 87 L503 85 L509 83 L514 80 M508 65 L510 70 L513 75 L514 80 M517 97 L518 93 L519 89 L521 84 M517 97 L512 99 L508 101 L504 102 M498 87 L499 92 L501 97 L503 101 M514 80 L521 84 M521 120 L517 119 L512 117 L507 115 M517 97 L521 101 L524 104 M504 102 L506 107 L505 112 L507 115 M479 96 L481 92 L482 87 L484 82 M479 96 L483 99 L488 101 L491 105 M489 81 L484 82 M503 101 L499 101 L495 104 L491 105 M429 191 L425 183 M405 201 L404 196 L405 190 L407 186 M425 183 L419 181 M419 181 L416 182 L410 184 L407 186 M425 183 L429 181 L434 178 L437 173 M450 197 L451 192 L450 188 L451 182 L452 178 M437 173 L442 174 L448 177 L452 178 M473 176 L469 175 L463 174 L458 173 M452 178 L458 173 M480 160 L475 154 M475 154 L469 155 L464 157 L460 159 L455 161 M458 173 L456 170 L455 165 L455 161 M505 38 L502 37 L497 35 L494 33 M505 38 L503 43 L500 47 L498 52 L498 58 L495 62 M494 33 L489 34 L485 38 L480 40 M480 40 L480 44 L480 48 L481 52 M495 62 L491 59 L485 56 L481 52 M494 23 L494 27 L494 33 M494 23 L499 22 L503 19 L509 17 L514 17 M513 38 L505 38 M515 39 L516 44 L515 50 L516 53 L517 59 M508 65 L512 63 L517 59 M468 74 L473 77 L475 78 L481 81 L484 82 M468 74 L467 68 L468 63 M468 63 L472 59 L477 55 L481 52 M450 -8 L455 -6 L460 -2 L464 1 M464 1 L462 7 L458 10 L456 16 L453 21 M444 -3 L444 1 L446 6 L445 11 L446 18 L447 22 M453 21 L447 22 M492 18 L487 15 L484 13 L479 11 M492 18 L494 23 M479 11 L477 15 L473 21 L470 24 L468 29 M480 40 L476 37 L470 34 M468 29 L470 34 M381 4 L388 -3 M811 -5 L807 -3 L802 -1 L797 1 M797 1 L795 -1 M825 1 L821 -2 L815 -3 L811 -5 M804 17 L801 16 M801 16 L800 11 L799 6 L797 1 M775 19 L778 13 L780 8 L781 6 L783 -0 M775 19 L779 20 L783 21 L790 22 L794 24 M794 24 L798 20 L801 16 M754 -10 L752 -6 L750 -1 L748 2 L745 7 M736 -13 L733 -8 L732 -3 L729 2 M745 7 L740 6 L734 3 L729 2 M572 1 L578 5 L582 7 M590 -15 L589 -10 L590 -5 L589 -1 L587 3 M587 3 L582 7 M601 0 L595 2 L591 3 L587 3 M601 0 L604 -3 M604 -3 L608 -2 L612 -2 L618 -0 L622 1 M622 1 L624 -3 L627 -9 M129 21 L127 26 L126 32 L124 38 M98 39 L106 43 M106 43 L111 41 L114 40 L120 38 L124 38 M212 6 L217 9 M192 16 L193 20 L193 28 L193 31 L192 37 M217 9 L216 14 L215 19 L215 26 L216 31 L215 37 L215 42 M192 37 L197 40 L201 40 L206 42 L211 45 M215 42 L211 45 M330 -4 L324 -1 L319 0 L315 2 M325 24 L319 22 M319 22 L315 18 M315 18 L316 14 L315 7 L315 2 M315 2 L311 -1 M155 799 L156 805 L157 810 L158 816 L160 822 L160 828 L161 834 L163 839 L164 845 L164 851 L166 857 L167 863 L168 868 L169 874 L170 879 L171 886 L173 891 L173 898 L174 902 L176 908 L176 914 L179 919 L178 925 L179 932 L182 938 L182 942 L183 948 L183 954 L184 960 L186 967 L187 972 L189 978 L189 983 L190 990 L192 995 L193 1000 L195 1006 L195 1012 L196 1017 L197 1024 M155 799 L150 798 L147 797 L142 795 L137 795 M137 795 L132 799 L129 802 L126 805 M306 802 L304 808 L301 814 L301 819 L297 825 L296 829 L294 835 L292 840 L289 845 L289 852 L287 856 L284 862 L282 867 L280 871 L278 877 L275 883 L275 888 L272 895 L270 899 M274 798 L274 804 L273 809 L273 816 L271 821 L271 828 L270 834 L270 839 L268 845 L267 851 L268 856 L266 862 M823 462 L818 463 L812 465 L808 466 M805 443 L804 449 L803 452 L803 458 M808 466 L803 458 M773 536 L775 530 L776 527 L778 521 M762 541 L756 539 M756 539 L755 535 L756 531 L757 524 L756 520 M756 520 L762 519 L766 517 L771 516 M778 521 L771 516 M681 256 L688 261 M680 281 L684 277 L687 273 L691 270 M680 281 L676 280 L671 278 L668 276 L663 276 M663 276 L665 270 L667 265 L670 261 M688 261 L691 270 M679 296 L683 299 L689 301 L692 303 M679 296 L680 292 L680 286 L680 281 M692 303 L697 299 L702 297 M691 270 L696 274 L700 277 M702 297 L702 291 L701 286 L700 282 L700 277 M692 303 L691 309 M707 324 L709 319 L710 314 L711 310 L714 305 L715 300 M702 297 L707 299 L710 299 L715 300 M706 325 L703 322 L698 317 L695 314 L691 309 M763 415 L761 410 L762 405 L761 402 L760 396 M763 415 L757 417 L752 419 M747 416 L752 419 M747 416 L744 410 L744 408 L741 404 L739 399 M739 399 L743 397 L748 396 L753 393 M753 393 L760 396 M765 415 L770 412 L776 411 L780 410 M772 393 L768 394 L764 395 L760 396 M756 376 L758 373 M756 376 L755 382 L753 387 L753 393 M758 373 L762 375 L767 378 L769 379 L774 383 M754 299 L757 294 L759 287 L762 283 M765 309 L769 305 L771 301 L776 297 L779 292 M762 283 L769 282 M769 282 L777 285 M777 285 L779 292 M693 188 L694 196 M694 196 L701 199 M713 175 L715 181 L714 187 L715 191 L715 197 M701 199 L706 199 L710 199 L715 197 M652 546 L648 544 L644 541 L641 538 L637 535 M656 544 L657 540 L657 533 L658 528 L658 523 M637 535 L637 528 M657 523 L653 523 L646 525 L641 526 L637 528 M658 523 L667 520 M670 553 L672 551 L677 547 L680 544 L683 540 M683 540 L682 535 L679 529 L677 525 M677 525 L672 522 L667 520 M741 736 L740 742 L740 747 L739 753 L740 759 L739 765 L738 770 M739 735 L734 736 L730 738 L724 738 L721 741 M721 741 L718 745 L716 750 L715 756 L714 761 L711 766 M738 770 L734 771 L729 771 L723 771 L720 771 L714 772 M711 766 L714 772 M761 740 L757 738 L752 739 L747 737 L741 736 M742 773 L738 770 M737 710 L738 714 L738 720 L737 725 L738 729 L739 735 M709 732 L713 736 L717 738 L721 741 M686 746 L688 751 L689 754 L689 759 M689 759 L694 760 L700 763 L705 764 L711 766 M738 801 L733 798 L727 797 L722 794 L715 793 L710 791 M710 791 L710 786 L713 781 L714 776 L714 772 M626 673 L625 667 L625 661 L626 655 L624 649 L624 644 M626 673 L632 673 L638 675 L644 676 M648 672 L648 668 L651 663 L652 659 L652 654 M648 672 L644 676 M652 654 L648 651 L644 649 L638 645 L634 643 L629 641 M629 641 L624 644 M608 642 L612 642 L618 644 L624 644 M620 676 L626 673 M645 707 L644 703 L644 697 L644 692 L644 687 L645 680 L644 676 M680 682 L674 681 L669 678 L663 677 L660 675 L653 674 L648 672 M636 622 L636 628 L634 631 L631 637 L629 641 M763 650 L759 647 L755 643 L753 638 L748 635 L745 631 M745 631 L741 634 L737 638 L735 642 L731 644 L728 648 M742 578 L747 586 M742 578 L744 573 L743 567 L744 562 M747 586 L750 582 L754 579 L759 574 L762 571 M744 562 L747 560 M747 560 L752 562 L756 565 L760 566 M760 566 L762 571 M769 557 L765 560 L763 564 L760 566 M756 539 L747 543 M747 543 L746 548 L747 555 L747 560 M771 579 L768 576 L764 574 L762 571 M730 595 L737 596 M720 580 L722 576 M722 576 L727 578 L732 576 L737 578 L742 578 M747 586 L747 590 M737 596 L743 594 L747 590 M718 608 L719 615 M719 615 L724 616 L730 619 M730 619 L735 618 L737 617 L742 617 M737 596 L737 602 L740 606 L742 612 L742 617 M771 579 L768 583 L766 589 L763 592 L760 597 M747 590 L752 593 L756 595 L760 597 M745 631 L747 624 L747 620 M728 648 L728 642 L729 637 L729 630 L730 625 L730 619 M747 620 L742 617 M682 681 L682 674 L680 669 L680 664 L679 657 L678 652 M678 652 L669 649 M655 652 L660 650 L665 651 L669 649 M645 617 L652 620 M655 652 L654 646 L653 640 L652 635 L652 630 L653 625 L652 620 M714 620 L710 619 L706 619 L700 619 L696 619 M714 620 L714 626 L713 632 L715 637 L714 645 L714 650 M714 650 L709 648 L705 648 L700 646 L694 644 M694 644 L694 639 L692 634 L690 629 M696 619 L693 624 L690 629 M719 615 L714 620 M705 599 L701 600 L698 603 L693 604 M693 604 L693 610 L696 613 L696 619 M678 652 L684 650 L689 647 L694 644 M669 649 L669 644 L670 637 L668 632 L668 627 L668 621 M668 621 L674 623 L679 624 L686 626 L690 629 M682 567 L686 567 L690 568 L696 567 M682 567 L679 573 L678 578 M696 567 L698 573 L699 577 M699 577 L693 582 M693 582 L689 582 L684 580 L678 578 M682 567 L678 564 L674 560 L670 556 M655 579 L659 580 L663 582 L667 584 L672 585 M678 578 L672 585 M365 736 L361 732 M330 767 L331 761 L332 757 L334 751 L335 744 L336 739 M361 732 L355 734 L351 734 L345 737 L341 739 L336 739 M532 739 L527 741 L521 741 L517 741 L511 742 L506 743 M533 740 L533 744 L532 750 L533 756 L531 762 L531 767 M506 743 L507 749 L508 754 L507 761 L508 766 L509 771 M509 771 L515 769 L520 769 L527 767 L531 767 M530 716 L530 722 L531 727 L532 734 L532 739 M557 742 L551 742 L544 741 L538 740 L533 740 M500 741 L506 743 M558 770 L560 764 L563 760 M539 776 L535 771 L531 767 M506 775 L509 771 M160 769 L164 767 L171 766 L176 766 L179 765 L185 763 M160 769 L160 774 L161 780 L161 785 L161 790 L161 795 M185 763 L185 768 L183 774 L182 781 L180 787 L180 792 M161 795 L165 793 L171 794 L175 792 L180 792 M155 799 L161 795 M137 795 L135 789 L132 785 L131 779 L129 773 M154 764 L160 769 M154 764 L150 764 L143 766 L137 768 L133 768 M129 773 L133 768 M192 799 L193 804 L192 810 L192 818 L194 823 L193 828 L193 834 L194 840 L195 846 L194 852 L195 858 L194 863 L195 869 L194 875 L194 881 L194 886 L194 894 L195 899 L196 904 L195 912 L195 918 L195 923 L196 929 L196 936 L196 940 L198 946 L198 952 L198 958 L197 964 L197 970 L197 976 L198 981 L198 988 M192 799 L187 796 L184 794 L180 792 M120 535 L112 533 M120 535 L122 540 L125 546 L125 550 L128 554 L129 559 L131 565 M131 565 L127 570 M97 564 L101 570 M101 570 L106 570 L111 569 L117 570 L123 571 L127 570 M331 535 L331 540 L330 547 L331 552 L330 557 L331 563 M331 535 L336 535 L342 535 L345 534 L350 536 L357 536 L362 536 M331 563 L335 564 L341 564 L346 564 L351 565 L356 566 M356 566 L357 561 L359 555 L361 551 L363 546 L366 541 M362 536 L366 541 M327 566 L331 563 M386 543 L381 543 L376 541 L370 541 L366 541 M386 543 L387 547 L389 551 L390 556 L392 561 M120 535 L126 533 L130 530 L136 528 M158 554 L158 549 L157 542 L158 537 M131 565 L135 562 L141 561 L147 558 L151 558 L158 555 M136 528 L142 530 L147 532 L152 534 L158 537 M185 529 L180 529 L175 531 L170 532 L167 532 L161 533 M158 554 L163 556 L169 557 L174 558 L177 560 L183 562 L188 563 M191 536 L190 540 L190 546 L189 552 L189 557 L188 563 M161 533 L158 537 M152 479 L154 484 L158 488 L160 493 L163 497 L165 502 M152 479 L147 479 L142 481 L138 481 M138 481 L137 486 L134 491 L131 496 L130 500 M165 502 L162 506 M162 506 L157 507 L151 506 L146 508 L142 509 L135 508 M130 500 L132 504 L135 508 M157 472 L152 479 M183 500 L177 500 L172 502 L165 502 M161 533 L160 528 L161 522 L161 517 L161 511 L162 506 M136 528 L136 522 L136 519 L136 514 L135 508 M107 529 L107 524 L105 517 L105 512 M130 500 L125 500 L120 502 L115 503 L110 502 M105 512 L108 508 L110 502 M153 448 L148 446 L143 447 L139 445 M139 445 L135 447 L131 451 L129 454 M138 481 L133 478 L131 475 L127 471 M129 454 L127 460 L128 466 L127 471 M98 477 L101 482 L102 487 L105 491 L108 497 L110 502 M127 471 L122 473 L115 473 L110 472 L105 474 L99 474 M250 539 L255 540 L260 541 L264 539 L269 541 M272 551 L269 555 L265 559 L262 562 L257 568 L255 570 L250 575 M269 541 L271 543 M248 540 L246 545 L242 549 L238 553 L237 558 L233 563 M233 563 L238 566 L242 569 L246 572 L250 575 M271 591 L267 590 L261 588 L255 588 M250 575 L253 578 L254 583 L255 588 M240 620 L247 620 L251 621 L258 619 L264 620 L270 620 M240 620 L240 615 L243 608 L243 603 L244 598 M255 588 L250 591 L248 595 L244 598 M338 308 L336 314 L335 319 L333 322 L330 328 M338 308 L344 308 L349 306 L355 306 M330 328 L336 331 L342 332 L347 334 L352 337 L358 339 L364 341 M355 306 L357 311 L361 315 L362 318 L365 324 L367 328 L370 332 M370 332 L366 335 L364 341 M362 355 L363 350 L362 344 L364 341 M385 328 L380 329 L374 331 L370 332 M357 303 L355 306 M220 449 L222 447 M190 454 L188 447 L188 443 L188 437 L187 431 L187 426 L186 421 M186 421 L192 420 L196 418 L201 420 L207 419 L211 417 M211 417 L216 423 M222 447 L222 441 L220 437 L219 433 L218 428 L216 423 M269 423 L265 423 L259 420 L256 419 L251 416 M269 423 L273 421 M273 421 L273 415 L275 410 L276 403 L275 399 L276 392 L277 387 M248 402 L253 399 L256 397 L262 393 L265 390 L271 388 L275 386 M248 402 L248 408 L249 414 M249 414 L251 416 M270 449 L270 445 L270 440 L270 433 L269 429 L269 423 M270 449 L264 451 L260 451 L256 452 L251 452 L246 452 M246 452 L239 448 M239 448 L241 442 L244 438 L246 432 L246 426 L248 423 L251 416 M303 449 L297 449 L292 450 L286 450 L282 450 L276 449 L271 450 M300 421 L294 420 L288 422 L285 420 L278 420 L273 421 M303 394 L298 392 L293 392 L288 391 L282 388 L277 387 M236 393 L238 387 L241 382 L244 376 L246 371 L248 367 M236 393 L240 395 L245 399 L248 402 M271 371 L272 375 L274 381 L275 386 M222 447 L227 447 L233 447 L239 448 M216 423 L220 422 L227 419 L232 417 L237 417 L244 415 L249 414 M303 449 L302 455 L303 460 L302 466 L302 473 L301 479 M328 449 L328 454 L328 460 L329 466 L330 472 L330 478 L331 484 M302 480 L308 480 L314 481 L320 482 L326 482 L331 484 M353 451 L354 456 L354 461 L356 465 L357 470 L357 476 M357 476 L351 478 L348 479 L342 483 L338 484 L334 487 M334 487 L331 484 M244 505 L245 499 L244 493 L245 488 L245 482 L245 478 M244 505 L249 504 L255 505 L261 504 L265 505 L270 504 M270 504 L271 498 L273 494 L273 490 L275 485 M246 476 L251 478 L258 479 L262 479 L267 480 L272 481 M272 481 L275 485 M242 506 L244 505 M222 479 L228 478 L232 478 L239 479 L245 478 M269 541 L268 536 L270 531 L269 525 L270 520 L270 514 L270 510 L271 505 M246 452 L246 457 L245 465 L247 471 L246 476 M271 450 L270 454 L272 459 L272 466 L272 470 L271 475 L272 481 M301 479 L296 481 L292 482 L284 483 L281 483 L275 485 M516 311 L509 313 M516 311 L520 314 L525 318 L531 321 L536 323 M509 313 L508 317 L506 323 L504 328 L503 332 L502 337 M534 337 L536 333 L535 327 L536 323 M534 337 L528 336 L524 337 L518 337 L514 336 L508 337 L502 337 M501 306 L504 309 L509 313 M468 333 L469 328 L471 322 L471 317 L472 311 L473 305 M471 336 L476 337 L481 336 L486 336 L491 337 L497 336 L502 337 M473 305 L480 299 M484 370 L489 367 L493 365 L497 360 L501 359 L506 356 M484 370 L480 365 L474 362 L470 359 M506 356 L505 352 L503 346 L503 342 L502 337 M736 330 L731 333 L728 336 L724 340 M745 355 L745 350 L747 344 L747 338 M745 355 L737 358 M737 358 L734 354 L730 349 L728 345 L724 340 M719 323 L724 321 L726 319 L731 316 M719 323 L720 329 L721 335 L721 340 M733 319 L731 316 M767 341 L768 346 L766 352 L767 358 M767 341 L771 340 L777 341 L783 342 L787 341 M767 358 L772 358 L779 360 L784 360 M784 360 L786 357 L786 351 L789 347 L790 342 M745 355 L750 358 L754 360 L759 362 M759 362 L763 360 L767 358 M761 331 L763 336 L767 341 M765 322 L771 322 M771 322 L773 327 L777 329 L782 333 L783 337 L787 341 M758 373 L757 368 L759 362 M812 347 L808 344 L804 343 L798 342 L794 340 M794 340 L790 342 M747 416 L743 417 L738 420 L733 424 L727 427 M739 399 L732 396 M722 405 L726 401 L729 399 L732 396 M722 405 L723 411 L723 418 L723 423 M727 427 L723 423 M668 404 L669 399 L668 396 L668 389 L667 385 M668 404 L672 406 L678 411 M686 384 L680 385 L675 384 L672 386 L667 385 M686 384 L688 389 L691 393 L693 398 M693 398 L690 401 L685 405 L681 407 L678 411 M722 405 L717 405 L712 403 L708 404 L702 403 M711 428 L715 426 L720 425 L723 423 M711 428 L706 427 L701 424 M702 403 L702 409 L701 415 L701 419 L701 424 M580 401 L576 395 M580 401 L579 405 L578 410 L576 414 M576 395 L570 396 L566 397 L562 399 L557 401 L551 401 M576 414 L573 415 L566 414 L562 416 L557 415 M551 401 L554 406 L556 409 L557 415 M576 414 L578 418 M578 418 L574 423 L572 426 L568 430 L565 434 L561 438 L558 440 M558 440 L551 436 M551 436 L549 429 M557 415 L554 420 L552 424 L549 429 M538 445 L542 441 L547 439 L551 436 M538 445 L533 445 L528 442 L522 442 L517 441 L512 440 M512 440 L513 435 L513 428 L513 424 M549 429 L545 426 L540 423 L536 422 M514 423 L519 423 L525 423 L529 423 L536 422 M538 445 L539 451 L537 455 L538 459 L537 464 M533 465 L537 464 M472 395 L473 401 L476 406 L477 410 L479 415 M472 395 L476 392 L480 389 L482 385 M482 385 L487 388 L494 389 L498 389 L505 390 M505 390 L504 396 L504 402 L504 406 L504 413 L504 417 M504 417 L499 416 L494 417 L490 416 L484 416 L479 415 M450 390 L456 391 L461 392 L466 395 L472 395 M484 370 L483 375 L483 381 L482 385 M513 424 L508 421 L504 417 M537 238 L530 241 L526 241 L520 243 L516 245 L511 248 M537 238 L543 242 M543 242 L540 246 L538 252 L535 259 L533 263 M533 263 L525 268 M522 268 L513 265 M513 265 L513 260 L510 255 L510 250 M510 250 L511 248 M527 224 L530 228 L533 234 L537 238 M514 224 L513 231 L512 235 L512 241 L511 248 M554 283 L546 287 M546 287 L542 283 L537 278 L533 275 L530 272 L525 268 M554 283 L554 276 L555 272 L554 266 M554 266 L550 265 L544 264 L539 265 L533 263 M543 297 L544 293 L546 287 M543 297 L539 298 L534 299 L529 301 L525 300 M525 300 L525 295 L525 289 L523 285 L523 278 L523 274 L522 268 M525 300 L521 304 L520 308 L516 311 M486 241 L491 244 L496 245 L500 246 L504 248 L510 250 M501 531 L504 535 L507 537 L509 542 M501 531 L496 534 L489 536 L484 537 L479 539 L474 541 M509 542 L508 546 L505 551 L502 557 L501 562 M476 554 L476 549 L475 546 L474 541 M476 554 L481 559 M481 559 L485 560 L492 560 L497 560 L501 562 M445 571 L452 563 M453 588 L458 587 L462 588 L469 589 L473 590 M452 563 L456 562 L461 560 L467 558 L471 555 L476 554 M481 559 L480 563 L479 569 L478 573 L476 580 L474 585 L473 590 M422 554 L422 551 L422 547 L423 542 M394 532 L399 531 L404 531 L410 531 M394 532 L392 536 L388 539 L386 543 M423 542 L420 539 L415 535 L410 531 M452 563 L451 558 L449 553 L447 546 L446 542 L445 536 L444 531 M423 542 L427 539 L435 537 L439 534 L444 531 M472 537 L467 535 L461 534 L454 533 L449 531 L444 531 M472 537 L474 541 M478 508 L476 505 M478 508 L477 515 L476 520 L474 526 L473 531 L472 537 M476 505 L470 506 L465 509 L460 511 L454 511 L449 512 L444 514 M444 531 L445 525 L443 520 L444 514 M367 509 L373 509 L377 507 L381 507 M367 509 L365 503 L364 498 L362 493 L361 488 L361 483 L359 477 M381 507 L384 502 L387 500 L391 496 M391 496 L392 491 L393 485 L395 480 L394 475 M359 477 L365 476 L371 477 L377 475 L382 475 L389 474 L394 475 M364 511 L367 509 M364 511 L363 516 L364 520 L363 526 L362 530 L362 536 M394 532 L390 527 L388 522 L387 517 L383 512 L381 507 M410 531 L412 525 L412 521 L414 515 L415 510 M415 510 L409 507 L405 505 L400 501 L396 499 L391 496 M389 451 L390 457 L392 460 L391 464 L394 470 L394 475 M425 442 L423 448 L421 452 L421 458 L419 465 L417 468 L416 475 M416 475 L412 474 L405 474 L399 475 L394 475 M553 497 L550 498 M553 497 L558 497 L563 498 L570 498 L574 499 M574 499 L572 505 L571 508 L570 514 L570 519 M549 510 L549 504 L550 498 M549 510 L553 514 L556 518 L560 522 M570 519 L564 521 L560 522 M784 455 L784 450 L782 444 L782 438 M784 455 L781 459 L776 461 L773 464 L768 467 M768 467 L766 462 L762 459 L760 454 L758 449 M772 437 L768 440 L762 442 L758 444 M772 437 L782 438 M758 449 L758 444 M787 434 L782 438 M803 458 L797 457 L792 457 L787 456 M787 456 L784 455 M751 438 L750 433 L752 428 L752 425 L752 419 M751 438 L758 444 M765 415 L767 421 L769 426 L771 432 L772 437 M742 163 L747 161 L750 159 L754 157 M754 143 L754 146 L754 152 L755 156 M754 143 L749 141 L742 141 L737 139 M737 139 L732 142 L729 147 M805 182 L801 182 L795 181 L790 179 L784 179 L779 177 M795 194 L804 193 M795 194 L791 191 L786 186 L782 182 L778 178 M770 196 L772 191 L772 186 L773 182 M770 196 L775 199 L778 203 L782 207 M782 207 L786 204 L788 201 L792 197 L795 194 M778 178 L773 182 M773 144 L772 150 L772 155 M773 144 L780 138 M792 145 L788 143 L784 140 L780 138 M792 145 L791 150 L789 153 L787 159 L785 163 M772 155 L776 159 L780 161 L783 164 M754 143 L758 136 M758 136 L764 139 L767 141 L773 144 M755 156 L760 156 L765 156 L772 155 M775 119 L776 123 L778 128 L778 133 L780 138 M758 136 L758 131 L760 127 L760 123 M773 119 L769 121 L764 121 L760 123 M798 141 L792 145 M793 122 L788 122 L786 121 L781 119 M781 119 L775 119 M803 166 L798 165 L794 164 L789 165 L785 163 M754 157 L758 163 L761 168 L763 174 L766 178 M779 177 L781 172 L781 168 L783 164 M766 178 L773 182 M713 79 L719 78 L724 77 M713 79 L711 74 L711 70 L709 65 L707 61 M707 61 L711 59 L715 56 L719 52 L723 50 M723 50 L727 59 M727 59 L727 66 L726 71 L724 77 M728 119 L731 123 L734 124 L738 127 M728 119 L730 116 L734 113 L736 108 L739 104 M738 127 L743 126 L747 125 L753 124 L757 122 M757 122 L753 116 L750 112 L748 107 M739 104 L748 107 M721 120 L722 126 L720 132 L721 137 L721 142 M721 120 L728 119 M737 139 L737 133 L738 127 M760 123 L757 122 M16 152 L11 153 L6 155 L-2 156 L-6 156 L-13 157 M16 152 L20 159 M9 187 L3 188 L-1 187 L-8 187 M16 152 L16 148 L18 144 L19 139 M43 58 L47 64 L48 69 L50 73 M14 97 L20 97 L25 98 L32 99 L36 99 L41 100 M41 100 L42 95 L45 90 L47 83 L48 77 L50 73 M74 48 L74 53 L76 57 L79 63 L80 68 L82 72 M82 72 L74 77 M50 73 L57 74 L62 76 L68 76 L74 77 M66 277 L68 282 L70 289 L72 293 L73 299 L75 304 M66 277 L71 278 L77 277 L82 275 L87 275 L91 274 L97 274 L102 273 M75 304 L81 302 L86 303 L92 302 L98 300 M98 300 L99 295 L101 291 L101 285 L103 281 L103 276 M102 273 L103 276 M137 280 L131 279 L125 279 L120 278 L115 277 L110 277 L103 276 M137 280 L135 286 L134 291 L133 297 L133 302 M104 305 L110 305 L115 304 L121 303 L127 303 L133 302 M104 305 L98 300 M129 71 L131 64 L130 59 L131 53 L133 47 M129 71 L125 76 M106 43 L105 49 L105 54 L104 58 L103 64 M124 38 L127 41 L131 45 L133 47 M125 76 L120 73 L116 71 L113 69 L108 66 L103 64 M82 72 L90 74 M90 74 L95 71 L98 67 L103 64 M15 507 L11 503 L10 498 L8 492 L6 487 L2 483 L1 478 M1 478 L-5 476 L-10 476 M762 283 L758 282 L754 279 L748 279 M769 282 L768 276 L766 271 L767 264 L765 260 M757 253 L761 256 L765 260 M757 253 L753 256 L748 257 L743 260 M743 260 L745 264 L747 270 L747 273 L748 279 M770 196 L766 197 L762 201 L758 202 M758 202 L759 207 L758 214 L758 219 M782 207 L785 216 M785 216 L782 219 L776 222 L773 226 L769 229 M758 219 L761 222 L766 226 L769 229 M820 210 L817 212 L813 216 L807 218 L804 221 M820 239 L816 237 L812 234 M812 234 L808 229 L807 226 L804 221 M805 194 L804 198 L802 204 L800 209 L799 215 L796 220 M804 221 L796 220 M785 216 L790 217 L795 220 M746 204 L753 200 M746 204 L742 202 L736 199 L732 199 L728 196 M753 200 L751 196 L747 191 L744 186 L741 181 M728 196 L732 191 L734 187 L738 183 L740 180 M758 202 L753 200 M766 178 L761 178 L755 180 L750 180 L745 181 L741 181 M738 176 L740 180 M715 197 L721 201 M721 201 L728 196 M515 10 L511 8 L507 6 L503 3 M503 3 L504 -2 L507 -8 L508 -15 L509 -20 M492 18 L495 14 L499 7 L503 3 M409 63 L415 62 M433 79 L428 83 M433 79 L431 70 M431 70 L427 67 L422 66 L419 63 L415 62 M403 77 L407 78 L412 79 L417 81 L424 82 L428 83 M326 35 L321 42 M319 22 L315 25 L311 30 L307 34 L302 37 L298 41 M298 41 L301 45 M301 45 L307 43 L311 43 L315 42 L321 42 M328 63 L331 61 M328 63 L322 60 M322 60 L322 55 L322 50 L320 46 L321 42 M423 41 L415 38 M401 53 L401 47 L402 42 M415 62 L416 58 L420 51 L421 48 L424 43 M415 38 L411 39 L407 40 L402 42 M378 46 L381 44 L385 40 L390 36 L393 33 M402 42 L398 38 L396 35 L393 33 M383 18 L388 20 L391 24 M391 24 L393 33 M572 115 L575 119 L579 122 L582 125 M582 125 L588 124 L592 120 L595 119 M595 119 L593 113 L593 107 L591 103 M573 102 L578 97 M591 103 L586 102 L582 99 L578 97 M548 156 L548 152 L546 148 L545 144 M548 156 L555 157 L560 158 L566 160 M545 144 L550 141 L555 139 L559 136 M559 136 L564 139 L568 144 L572 147 M572 147 L570 151 L569 154 L568 158 M566 160 L568 158 M542 162 L548 156 M536 140 L545 144 M562 174 L557 175 L553 176 L548 176 L544 177 M562 174 L563 170 L564 164 L566 160 M557 124 L558 131 L559 136 M373 195 L379 195 L385 194 M373 195 L373 199 L374 204 L375 210 L375 215 M385 194 L387 197 L390 202 L394 205 L397 208 M397 208 L393 210 L388 213 L382 215 M375 215 L382 215 M395 181 L391 184 L389 189 L385 194 M395 181 L391 179 L386 178 L381 176 M368 190 L373 195 M381 176 L377 179 L372 183 L368 187 M400 208 L397 208 M396 180 L402 183 L407 186 M392 236 L389 232 L386 225 L385 221 L382 215 M375 215 L373 220 L374 225 L373 231 L372 235 L370 242 L370 246 M381 247 L376 245 L370 246 M425 276 L430 277 L435 277 L441 276 L446 277 L451 276 M425 276 L424 282 L424 287 L426 293 L425 299 L424 305 M451 276 L451 280 L449 287 L449 292 L448 297 L447 303 M424 305 L428 307 L433 308 L438 309 M438 309 L447 303 M417 268 L421 273 L425 276 M457 273 L451 276 M398 274 L395 276 L393 281 L390 283 M419 308 L424 305 M473 305 L467 304 L463 304 L457 305 L453 303 L447 303 M449 333 L447 329 L444 324 L442 318 L440 313 L438 309 M491 139 L481 138 M491 139 L499 135 M481 138 L481 133 L481 127 L480 124 L480 119 M499 135 L499 131 L498 127 L498 123 M498 123 L495 121 L491 119 L486 118 M480 119 L486 118 M491 159 L491 155 L491 150 L491 144 L491 139 M475 154 L474 149 L472 143 M472 143 L481 138 M508 140 L499 135 M472 143 L469 142 L465 140 L461 138 M458 125 L460 129 L461 134 L461 138 M458 125 L463 121 L468 119 L473 115 M473 115 L480 119 M507 115 L503 118 L498 123 M491 105 L489 109 L487 112 L486 118 M471 102 L476 99 L479 96 M471 102 L471 107 L472 110 L473 115 M446 110 L439 106 M446 110 L449 106 L453 103 L455 101 L459 97 M439 106 L440 101 L440 94 L443 89 L442 83 M459 97 L459 91 L456 87 L455 83 M442 83 L446 84 L450 84 L455 83 M437 127 L441 124 L443 122 L448 119 M437 127 L433 127 L427 126 L423 124 M422 123 L423 119 L427 114 L428 109 L430 105 M448 119 L446 110 M430 105 L439 106 M471 102 L467 100 L464 99 L459 97 M458 125 L454 123 L448 119 M433 79 L438 80 L442 83 M430 105 L426 100 L422 97 M428 83 L426 86 L424 92 L422 97 M468 74 L464 78 L460 81 L455 83 M534 62 L532 64 M534 62 L541 61 L546 63 L550 64 L557 63 M532 64 L533 69 L532 76 L533 80 M557 63 L554 67 L552 71 L548 75 L546 79 M546 79 L540 80 L535 82 M540 41 L538 46 L536 51 L536 58 L534 62 M517 59 L522 61 L527 63 L532 64 M551 42 L554 47 L556 51 L558 58 L561 62 M561 62 L557 63 M521 84 L525 83 L529 80 L533 80 M539 92 L537 86 L535 82 M557 84 L558 89 L559 94 L559 97 M557 84 L553 84 L551 81 L546 79 M419 181 L418 176 L418 171 L417 165 M396 180 L397 175 L396 171 L397 167 M417 165 L410 161 M397 167 L403 165 L406 164 L410 161 M448 149 L445 146 L440 141 L438 138 M448 152 L445 155 L440 157 L437 159 M438 138 L432 140 L429 142 L423 145 M437 159 L428 157 M423 145 L424 148 L426 153 L428 157 M461 138 L457 141 L452 146 L448 149 M437 127 L438 133 L438 138 M455 161 L451 157 L448 152 M437 173 L437 169 L437 164 L437 159 M416 141 L417 137 L419 132 L420 129 L423 124 M416 141 L423 145 M417 165 L420 163 L424 159 L428 157 M416 141 L407 143 M410 161 L410 156 L408 153 L408 147 L407 143 M375 145 L380 146 L385 147 L391 148 M375 145 L372 151 L370 156 L368 161 M379 166 L375 164 L370 164 L368 161 M379 166 L382 164 L387 162 L391 160 M391 160 L391 155 L391 148 M372 139 L375 133 L376 129 L378 124 M372 139 L375 145 M396 125 L397 130 L399 136 L401 141 M396 125 L393 125 L387 124 L382 124 L378 124 M401 141 L397 143 L394 146 L391 148 M381 176 L381 172 L379 166 M397 167 L391 160 M407 143 L401 141 M454 54 L456 47 M454 54 L447 57 M456 47 L453 44 L448 40 L445 36 M447 57 L440 58 M445 36 L441 39 L437 44 L434 48 M440 58 L437 53 L434 48 M468 63 L464 61 L458 57 L454 54 M470 34 L466 37 L462 41 L459 44 L456 47 M455 83 L453 78 L452 73 L450 68 L450 62 L447 57 M453 21 L458 25 L463 26 L468 29 M445 22 L445 26 L445 30 L445 36 M431 70 L434 67 L437 62 L440 58 M423 41 L426 36 L430 32 L433 27 L435 22 M435 22 L439 23 L445 22 M424 43 L429 45 L434 48 M413 -3 L408 1 L404 3 M423 -2 L425 2 L424 8 L425 14 M425 14 L421 17 L417 19 L412 21 M404 3 L403 7 L403 14 L402 18 M412 21 L407 20 L402 18 M388 -3 L394 -1 L399 0 L404 3 M435 22 L431 20 L428 16 L425 14 M415 38 L415 33 L413 26 L412 21 M391 24 L394 22 L398 19 L402 18 M765 40 L766 36 L768 30 L772 25 L773 19 M765 40 L762 38 L757 37 L754 34 M754 34 L753 28 L751 24 L749 18 M764 12 L767 16 L773 19 M764 12 L759 14 L755 14 L750 16 M730 41 L731 35 L731 31 L732 25 M732 41 L737 39 L742 37 L748 36 L754 34 M732 25 L737 22 L741 22 L745 19 L749 18 M765 -4 L764 2 L765 7 L764 12 M745 7 L750 16 M732 25 L728 19 L726 15 L722 10 M729 2 L724 5 M724 5 L722 10 M806 105 L799 102 M811 80 L806 82 L800 82 M800 82 L801 87 L800 93 L800 96 L799 102 M781 119 L784 115 L786 111 L790 106 L793 101 M793 101 L799 102 M781 60 L786 61 L792 64 M781 60 L780 55 L781 49 L781 43 M781 43 L786 41 L790 40 L793 39 M801 58 L800 54 L797 50 L797 44 L794 40 M801 58 L796 61 L792 64 M794 24 L793 29 L793 35 L793 39 M765 40 L770 41 L776 41 L781 43 M806 60 L801 58 M816 38 L810 40 L805 39 L799 40 L794 40 M800 82 L796 82 L791 82 L788 81 M788 81 L790 74 L791 70 L792 64 M693 42 L689 40 M693 42 L698 40 L702 39 L707 37 L711 35 M689 40 L689 35 L690 31 L689 25 L691 22 M711 35 L710 30 L709 24 L709 18 M691 22 L695 19 L698 18 L702 16 M702 16 L709 18 M702 59 L700 55 L697 51 L695 47 L693 42 M702 59 L707 61 M726 43 L720 40 L716 39 L711 35 M726 43 L723 50 M730 41 L726 43 M722 10 L718 14 L713 16 L709 18 M688 70 L682 66 L678 62 L673 59 M688 70 L693 66 L698 63 L702 59 M689 40 L682 42 M682 42 L680 46 L678 50 L675 54 L673 59 M560 13 L563 17 L568 19 L571 23 L574 25 M582 10 L580 15 L576 20 L574 25 M558 34 L563 34 L570 34 L574 35 M574 35 L574 25 M644 6 L639 1 L636 -2 L632 -6 L627 -9 M644 6 L639 9 L636 15 L633 19 M622 1 L623 6 L623 11 L623 17 M623 17 L629 19 L633 19 M156 18 L159 22 L159 27 L162 32 L162 36 L164 41 M192 37 L188 40 L184 43 L179 45 M179 45 L174 43 L169 42 L164 41 M133 47 L139 48 L144 48 L149 49 L154 49 M164 41 L159 43 L157 46 L154 49 M129 71 L133 70 L140 70 L144 71 L150 70 L155 70 M154 49 L155 55 L155 59 L155 64 L155 70 M315 18 L310 17 L305 16 L300 18 L296 16 M311 -1 L308 1 L303 3 L300 5 L295 6 M295 6 L296 11 L296 16 M298 41 L297 37 L295 33 L293 30 L290 24 M290 24 L293 21 L296 16 M306 179 L301 180 L297 182 L292 182 L288 184 M306 179 L302 175 L300 172 L295 167 L292 165 L288 160 M288 160 L283 164 L279 167 M279 167 L280 171 L280 177 L280 181 M280 181 L288 184 M276 627 L273 633 L273 637 L272 643 L271 648 M242 648 L247 651 L251 654 M251 654 L256 653 L262 651 L268 651 M271 648 L268 651 M304 652 L301 655 M271 648 L276 649 L281 651 L287 651 L291 654 L297 655 L301 655 M247 738 L245 740 M247 738 L252 736 L257 738 L265 737 L269 738 L275 737 M272 765 L267 765 L263 763 L256 762 L251 762 L247 761 M272 765 L273 760 L275 755 L275 749 L276 743 L277 739 M247 761 L247 757 L246 751 L246 746 L245 740 M275 769 L272 765 M310 767 L308 763 L307 756 L304 753 L304 746 L302 740 L300 736 M277 739 L283 738 L288 737 L295 736 L300 736 M336 739 L332 736 M332 736 L327 735 L323 733 L317 732 L311 729 L305 729 M305 729 L300 736 M220 656 L219 662 L220 666 L218 671 L218 676 M218 676 L224 677 L230 680 L235 680 L240 681 M251 654 L252 659 L250 664 L250 668 L250 672 M240 681 L243 678 L246 675 L250 672 M218 676 L212 682 M220 711 L226 710 L232 710 L237 708 L243 709 M220 711 L215 707 M212 682 L212 688 L213 691 L215 698 L215 701 L215 707 M240 681 L241 687 L242 693 L241 698 L243 703 L243 709 M247 738 L247 732 L245 727 L245 721 L244 715 L243 709 M275 737 L273 732 L273 728 L273 722 L272 716 L269 711 L269 705 M243 709 L249 708 L254 708 L259 706 L264 705 L269 705 M796 540 L795 535 L795 531 L796 526 L795 522 M778 521 L782 521 L788 521 L793 520 M795 522 L793 520 M820 525 L812 520 M795 522 L800 521 L805 521 L812 520 M757 498 L758 493 L760 488 L762 483 L764 477 M757 498 L762 501 L766 504 L771 506 M771 506 L773 503 L777 498 M777 498 L775 493 L775 487 L772 482 L771 477 M764 477 L768 475 M768 475 L771 477 M771 516 L771 511 L771 506 M754 519 L752 514 L750 511 L747 507 L746 502 M746 502 L750 501 L754 500 L757 498 M793 520 L792 516 L793 510 L795 504 L794 499 M794 499 L788 499 L783 497 L777 498 M787 456 L787 462 L789 468 L791 473 L791 479 M791 479 L787 478 L780 478 L775 477 L771 477 M768 467 L768 475 M729 303 L735 297 M729 303 L724 303 L720 300 L717 300 M717 300 L717 295 L718 290 L718 286 L719 281 M735 297 L737 289 M737 289 L734 286 L731 280 L726 276 M719 281 L726 276 M746 300 L741 298 L735 297 M731 316 L730 312 L730 308 L729 303 M707 324 L712 323 L719 323 M700 277 L705 275 M705 275 L710 276 L713 279 L719 281 M748 279 L744 282 L742 285 L737 289 M727 267 L730 264 L735 262 L741 260 M727 267 L726 276 M705 275 L710 272 L713 266 L717 263 M717 263 L722 265 L727 267 M686 384 L689 377 M710 383 L707 387 L704 393 L703 396 L699 400 M710 383 L706 380 L705 376 L702 371 L699 368 M693 398 L699 400 M689 377 L692 374 L696 372 L699 368 M668 404 L665 406 L660 407 L655 408 M667 385 L663 383 M646 398 L649 401 L653 405 L655 408 M646 398 L649 394 L651 390 L653 385 M653 385 L657 385 L663 383 M679 296 L675 297 M675 297 L673 303 L670 308 L669 313 L666 319 M691 309 L688 313 L684 316 L681 321 L678 325 M678 325 L673 323 L670 320 L667 319 M771 322 L777 320 L781 320 L785 317 L791 315 M794 340 L795 334 L796 328 L797 322 M797 322 L791 315 M797 322 L802 321 L809 323 L813 322 M724 212 L722 218 L718 223 M724 212 L729 212 L734 213 L738 215 M718 223 L722 227 L727 230 L730 232 L735 236 M738 215 L741 220 L744 223 M744 223 L742 232 M735 236 L742 232 M721 201 L722 206 L724 212 M746 204 L743 208 L740 211 L738 215 M758 219 L753 220 L749 222 L744 223 M759 243 L762 241 L766 236 L769 234 M759 243 L754 240 L751 238 L747 235 L742 232 M769 229 L769 234 M757 253 L759 247 L759 243 M732 245 L734 250 L739 254 L741 260 M732 245 L735 236 M701 199 L702 205 L701 209 L702 214 L703 220 M716 223 L712 223 L707 222 L703 220 M694 196 L690 199 L688 201 L683 203 M683 203 L681 210 M681 210 L684 213 L686 217 L690 220 L692 224 M703 220 L698 222 L692 224 M677 240 L682 237 L687 233 L691 230 M666 234 L666 228 L667 223 L667 217 M667 217 L673 214 L677 211 L681 210 M691 230 L692 224 M643 500 L646 504 L649 508 L653 513 L655 519 L657 523 M643 500 L638 504 L635 507 L630 509 M637 528 L634 526 L631 522 L627 520 M627 520 L628 515 L630 509 M689 759 L685 762 L683 765 L679 768 M710 791 L704 797 M704 797 L699 796 L692 796 L688 795 M688 795 L686 790 L683 784 L683 778 L681 774 L679 768 M656 747 L656 754 L657 759 L659 764 L660 769 M660 769 L665 769 L670 768 L673 769 L679 768 M683 540 L690 541 M690 541 L691 545 L691 551 L694 555 L696 560 L697 566 M747 543 L744 541 L738 538 M754 519 L749 521 L744 523 L738 525 M738 538 L737 535 L739 529 L738 525 M787 600 L785 605 L784 608 L781 613 L780 618 M787 600 L782 599 L777 600 L771 599 L766 600 L761 600 M780 618 L775 619 L768 620 L764 621 M761 600 L760 605 L759 612 L759 617 M764 621 L759 617 M787 588 L787 593 L787 599 M790 648 L790 643 L790 639 L791 633 L791 629 M768 651 L767 646 L767 641 L766 635 L764 631 L764 625 L764 621 M791 629 L786 625 L783 622 L780 618 M747 620 L754 619 L759 617 M807 599 L803 599 L798 600 L792 601 M807 599 L811 600 L815 604 L818 605 M792 601 L794 607 L796 610 L799 614 L802 620 M813 620 L808 620 L802 620 M808 581 L809 585 L808 591 L807 595 L807 599 M787 599 L792 601 M791 629 L794 626 L799 624 L802 620 M533 517 L528 517 L523 519 L518 519 M534 516 L531 511 L529 506 L526 502 L524 496 M518 519 L514 517 L510 516 L505 512 L502 511 M502 510 L504 505 L508 501 L509 497 L512 492 M524 496 L515 492 M512 492 L515 492 M521 540 L530 542 M521 540 L521 533 L519 530 L520 525 L518 519 M537 536 L530 542 M537 536 L536 531 L535 528 L535 523 L533 517 M549 510 L544 511 L538 514 L534 516 M537 536 L541 537 L546 537 L551 536 M551 536 L555 534 M555 534 L556 529 L557 527 L560 522 M545 494 L550 498 M545 494 L539 494 L534 494 L530 495 L524 496 M521 540 L515 542 L509 542 M501 531 L502 526 L502 520 L501 515 L502 511 M478 508 L484 509 L491 509 L495 509 L502 510 M475 474 L470 479 M470 479 L471 485 L471 490 L474 494 L475 501 L476 505 M508 484 L512 492 M545 494 L544 488 L544 483 M544 483 L538 483 L533 481 L529 481 M529 481 L526 484 L523 486 L519 489 L515 492 M529 481 L530 475 L532 470 L533 465 M676 592 L680 593 L685 597 M676 592 L672 597 L668 599 L665 604 M665 604 L665 609 L665 613 L664 618 M689 602 L685 597 M689 602 L684 605 L681 608 L677 613 L672 616 L668 620 M668 620 L664 618 M693 582 L689 588 L687 592 L685 597 M672 585 L676 592 M649 589 L653 592 L658 597 L661 599 L665 604 M652 620 L655 620 L660 619 L664 618 M709 583 L705 580 L701 579 L699 577 M693 604 L689 602 M579 600 L571 599 M564 617 L564 612 L564 608 L565 602 M571 599 L565 602 M360 717 L360 711 L358 705 L359 700 L359 695 L358 689 L357 683 M360 718 L355 716 L349 715 L343 711 L338 710 L333 708 M327 702 L333 708 M327 702 L328 696 L331 693 L333 688 L334 682 M335 682 L340 681 L344 681 L349 681 L354 680 M357 683 L354 680 M386 690 L382 689 L374 686 L369 685 L363 686 L357 683 M389 704 L384 706 L380 709 L374 711 L371 712 L365 716 L360 717 M361 732 L361 727 L360 723 L360 718 M332 736 L332 731 L333 725 L334 719 L332 713 L333 708 M330 649 L330 654 L332 659 L333 665 L333 671 L335 676 L335 682 M301 655 L301 661 L302 667 L302 671 M302 671 L308 672 L314 675 L318 677 L323 677 L328 680 L334 682 M363 657 L362 663 L359 667 L357 672 L356 675 L354 680 M44 741 L47 738 L49 733 L52 731 M15 712 L20 712 L25 708 L31 708 L37 707 L43 705 M52 731 L49 725 L48 721 L46 715 L44 710 L43 705 M-17 661 L-11 658 L-7 654 L-4 653 L3 650 L7 647 L10 645 L15 642 M-15 626 L-9 626 L-3 628 L1 629 L9 630 L14 632 M15 642 L14 632 M9 592 L9 597 L10 602 L13 607 L13 613 L14 619 L14 624 L15 629 M43 598 L43 603 L41 608 L41 613 L41 618 M41 618 L35 621 L30 622 L27 625 L19 627 L15 629 M15 629 L14 632 M64 592 L71 596 M101 570 L99 575 L96 581 L95 586 M71 596 L76 594 L81 591 L85 591 L90 587 L95 586 M158 555 L158 561 L159 566 L159 572 L159 577 L160 584 L160 589 M127 570 L128 575 L131 580 L131 585 L133 589 M160 589 L154 592 M154 592 L149 592 L143 591 L139 591 L133 589 M95 586 L98 590 L102 592 L104 596 M104 596 L110 595 L115 594 L122 592 L127 591 L133 589 M184 706 L186 700 L185 694 L186 688 L188 683 M184 706 L179 706 L174 705 L170 705 L164 705 M164 705 L159 700 M159 700 L159 694 L160 689 L161 685 L161 679 M161 679 L166 679 L171 681 L177 681 L183 682 L188 683 M212 682 L207 681 L202 681 L199 680 L194 678 M215 707 L210 708 L205 708 L199 708 L195 708 L188 709 M188 709 L184 706 M194 678 L188 683 M104 596 L105 602 L105 605 L104 611 L106 617 M133 589 L132 594 L131 600 L131 604 L129 610 L128 616 L127 620 M106 617 L110 618 L116 618 L121 619 L127 620 M159 442 L161 436 L162 434 L162 428 L164 424 M164 424 L168 424 L174 423 L180 422 L186 420 M71 509 L66 508 L59 508 L53 507 L49 507 M73 507 L75 501 L76 497 L77 491 L79 485 M42 477 L42 483 L41 489 L41 495 L40 499 M42 477 L47 477 L51 477 L56 476 L62 475 L66 474 M66 474 L69 479 L75 481 L79 485 M49 507 L43 504 L40 499 M43 531 L44 526 L45 521 L46 517 L47 512 L49 507 M75 536 L74 531 L73 525 L72 519 L72 514 L71 509 M105 512 L100 511 L95 509 L88 510 L82 508 L78 509 L73 507 M98 477 L94 478 L89 481 L83 482 L79 485 M15 507 L19 505 L26 505 L29 502 L35 502 L40 499 M40 475 L42 477 M40 475 L35 474 L29 475 L24 474 L19 474 L13 474 L7 473 M7 473 L1 478 M40 475 L39 471 L40 464 L40 459 L39 454 L39 450 M7 473 L8 468 L11 463 L12 457 L13 451 L16 446 L16 442 M39 450 L34 447 L29 447 L25 444 L20 442 L16 442 M-14 449 L-10 447 L-5 447 L1 444 L5 443 L10 442 L15 441 M66 474 L67 468 L67 463 L70 459 L70 452 L72 448 M39 450 L47 444 M47 444 L51 445 L56 444 L62 443 L67 444 M72 448 L67 444 M99 474 L99 469 L96 463 L97 459 L95 452 L94 447 M72 448 L76 447 L82 448 L88 447 L94 447 M129 454 L123 451 L120 451 L114 449 L108 445 L105 444 L99 441 M94 447 L99 441 M217 558 L220 560 L226 564 M217 558 L212 561 L206 561 L200 562 L196 565 L191 566 M226 564 L225 569 L224 573 L222 579 L221 584 L220 588 M189 587 L195 590 L201 591 L206 593 L211 595 M189 587 L190 582 L189 576 L189 571 L191 566 M211 595 L215 591 L220 588 M214 537 L215 541 L215 548 L216 554 L217 558 M233 563 L226 564 M188 563 L191 566 M244 598 L239 597 L234 593 L230 593 L226 590 L220 588 M183 592 L178 591 L172 591 L166 589 L160 589 M183 592 L189 587 M216 617 L218 619 M216 617 L214 612 L213 605 L212 600 L211 595 M338 507 L335 502 M338 507 L337 512 L334 516 L332 522 L331 527 L329 531 M335 502 L330 503 L324 504 L319 504 L316 505 L309 505 L305 505 M329 531 L323 530 L319 530 L313 530 L308 528 L304 528 M304 528 L302 524 L301 518 L300 513 M300 513 L305 505 M364 511 L360 510 L354 510 L348 508 L343 508 L338 507 M334 487 L335 492 L335 497 L335 502 M331 535 L329 531 M302 480 L302 486 L304 490 L304 495 L305 500 L305 505 M298 536 L304 528 M271 505 L275 507 L280 508 L285 508 L290 511 L295 511 L300 513 M735 359 L731 363 L725 366 M735 359 L738 364 L739 368 L740 372 L743 377 M725 366 L726 370 L726 376 L725 380 L726 384 M743 377 L741 381 L736 383 L734 387 L730 389 M730 389 L726 384 M756 376 L751 377 L748 377 L743 377 M732 396 L730 389 M710 383 L716 383 L721 384 L726 384 M699 400 L702 403 M709 359 L709 353 L709 348 L709 344 M709 359 L705 362 L700 365 M690 357 L693 360 L696 362 L700 365 M690 357 L690 351 L690 348 L691 343 L690 337 M709 344 L705 340 L702 336 M702 336 L698 336 L695 337 L690 337 M721 340 L716 342 L709 344 M725 366 L721 365 L715 361 L709 359 M706 325 L704 329 L702 336 M678 325 L680 333 M680 333 L686 336 L690 337 M666 444 L671 446 L675 449 L681 452 M666 444 L667 437 L666 433 L667 427 M681 452 L685 448 L686 444 L689 439 M689 439 L690 429 M690 429 L685 427 L681 423 L678 420 M667 427 L670 425 L675 422 L678 420 M678 411 L678 420 M701 424 L698 426 L693 428 L690 429 M651 422 L651 417 L654 413 L655 408 M651 422 L657 424 L663 425 L667 427 M691 462 L695 460 L702 459 L707 459 M691 462 L687 458 L684 456 L681 454 M689 439 L693 440 L699 443 L703 445 L708 446 M707 459 L708 456 L709 451 L708 446 M711 428 L711 432 L709 438 L710 444 M742 483 L747 475 M742 483 L737 482 L731 482 L727 482 M727 482 L730 477 L733 473 L735 468 L737 464 M747 475 L744 471 L741 468 L739 465 M741 501 L746 502 M741 501 L741 496 L741 491 L741 487 L742 483 M764 477 L759 476 L753 475 L747 475 M720 485 L713 481 M720 485 L727 482 M713 481 L712 475 L714 471 L714 466 M714 466 L719 464 L724 462 L730 459 M730 459 L737 464 M758 449 L754 451 L751 455 L746 457 L743 461 L739 465 M593 521 L589 523 L584 524 L581 525 M593 521 L592 516 L592 511 L591 506 L591 502 M570 519 L574 521 L577 523 L581 525 M574 499 L580 500 L585 500 L591 502 M644 499 L649 498 L655 498 L659 498 L665 498 M644 499 L642 489 M642 489 L644 486 L648 481 L650 478 M650 478 L655 479 L661 479 L666 480 M666 480 L665 483 L666 489 L666 494 L665 498 M667 520 L667 515 L668 511 L668 505 L669 502 M669 502 L665 498 M670 467 L665 464 L663 464 L658 460 M670 467 L669 472 L669 477 M650 478 L648 473 L648 468 L645 465 M669 477 L666 480 M645 465 L650 463 L655 462 L658 460 M681 454 L679 459 L675 463 L670 467 M666 444 L663 445 M663 445 L661 451 L659 456 L658 460 M585 424 L578 418 M585 424 L585 430 L584 434 L584 439 M558 440 L560 444 M560 444 L564 444 L569 444 L573 445 L579 445 M584 439 L579 445 M585 424 L588 422 L594 421 L597 422 L602 420 M602 420 L605 422 L608 426 L611 430 M584 439 L588 439 L594 442 L598 441 L602 443 M611 432 L607 435 L604 440 L602 443 M551 536 L553 542 L551 548 L552 554 L554 559 M555 534 L559 536 L563 540 L567 542 L570 544 M554 559 L561 561 M561 561 L564 557 L566 554 L568 548 L570 544 M581 525 L581 529 L580 534 L579 538 L578 543 M570 544 L578 543 M537 342 L534 337 M537 342 L533 346 L527 349 L522 352 L519 356 L514 360 M506 356 L513 360 M619 253 L617 249 L614 243 L613 238 L612 234 M619 253 L622 251 L627 247 L631 246 L634 243 M612 234 L613 230 L617 227 L619 222 M619 222 L623 220 M623 220 L625 224 L628 229 L629 233 L631 238 L634 243 M554 283 L558 282 L563 283 L567 282 L572 283 M572 283 L570 278 L570 273 L570 269 L569 264 L568 259 M554 266 L558 264 L561 261 L564 259 M568 259 L564 259 M655 253 L651 259 M650 238 L647 240 L643 240 L638 243 M638 243 L639 247 L638 251 L640 255 L641 261 M641 261 L646 260 L651 259 M619 253 L618 257 M638 243 L634 243 M618 257 L621 260 L625 266 L630 269 M641 261 L637 264 L634 266 L630 269 M504 566 L506 570 L506 577 L507 581 M504 566 L511 565 L516 563 L521 563 L528 560 L532 560 M507 581 L512 582 L518 583 L524 582 L530 583 M530 583 L534 578 L537 573 L539 569 M532 560 L539 566 M539 566 L539 569 M530 542 L532 547 L532 551 L531 554 L532 560 M501 562 L504 566 M554 559 L549 561 L545 565 L539 566 M448 625 L454 624 L459 625 L464 622 L467 623 L473 622 M474 590 L473 595 L473 601 L474 605 L473 611 L474 616 L473 622 M482 653 L483 647 L482 643 L483 638 L484 632 L484 628 M484 628 L480 626 L476 625 L473 622 M441 510 L435 509 L430 508 L426 508 L421 507 M441 510 L443 504 L443 498 L444 493 L445 488 L447 482 L448 477 M421 507 L420 500 L421 494 L420 489 L421 483 L421 477 M421 477 L427 478 L430 478 L436 477 L441 477 L447 477 M444 514 L441 510 M415 510 L421 507 M470 479 L463 478 L459 478 L453 478 L448 477 M416 475 L421 477 M444 446 L444 451 L444 455 L445 462 L446 468 L447 473 L447 477 M705 143 L703 138 L703 133 L701 128 M721 120 L717 118 M701 128 L705 125 L710 123 L713 120 L717 118 M773 119 L773 109 M748 107 L750 104 L754 99 L757 97 L760 93 M760 93 L764 97 L766 101 L770 105 L773 109 M793 101 L789 98 L786 94 L783 90 M773 109 L775 103 L779 100 L780 94 L783 90 M788 81 L782 84 M783 90 L782 84 M743 79 L749 80 L756 80 L761 82 M743 79 L742 75 L743 69 L743 65 M743 65 L746 62 L748 56 M767 67 L766 72 L767 79 M767 67 L764 61 L762 57 L760 53 M748 56 L752 55 L756 55 L760 53 M767 79 L761 82 M735 96 L736 92 L736 86 L737 83 M735 96 L739 104 M737 83 L743 79 M760 93 L760 87 L761 82 M727 59 L733 62 L738 63 L743 65 M724 77 L728 79 L733 81 L737 83 M732 41 L736 44 L740 49 L743 53 L748 56 M781 60 L777 61 L772 63 L767 67 M782 84 L777 82 L773 81 L767 79 M765 40 L764 43 L761 49 L760 53 M15 270 L9 276 M9 276 L4 277 L-0 278 L-6 276 L-10 277 L-15 277 M15 247 L9 247 L4 244 L-1 245 L-8 245 L-13 243 M19 216 L13 217 L8 218 L3 218 L-5 218 L-10 220 M79 249 L84 249 L88 251 L93 251 L98 252 M77 219 L72 224 M77 219 L81 219 L88 219 L91 220 L96 220 L102 219 M98 252 L99 246 L98 242 L101 235 L100 231 L100 225 L102 219 M63 275 L66 277 M102 273 L102 268 L101 261 L101 255 M98 252 L101 255 M378 102 L373 99 L369 97 L365 96 M378 102 L378 107 L377 112 L377 116 L376 121 M376 121 L371 121 L365 120 L360 118 L355 118 M365 96 L358 102 M358 102 L357 107 L355 112 L355 118 M375 215 L371 215 L366 215 L362 215 L357 215 M368 190 L362 193 L358 195 L353 199 M357 215 L353 211 L352 207 L351 203 M353 199 L351 203 M77 219 L76 214 L75 209 L76 204 L75 198 L75 193 M102 219 L107 215 M107 215 L105 209 L105 204 L103 198 L102 193 M102 193 L96 194 L91 194 L86 192 L80 194 L75 193 M52 190 L56 188 L61 185 L66 185 M75 193 L72 190 L69 187 L66 185 M35 165 L39 162 L43 159 L48 155 M20 138 L25 138 L30 136 L34 135 L39 134 M39 134 L41 140 L43 144 L45 151 L48 155 M72 164 L70 169 L68 174 L67 179 L66 185 M72 164 L67 158 M48 155 L53 156 L58 156 L62 157 L67 158 M74 77 L73 84 L73 89 L71 94 L70 101 L69 107 M69 107 L63 106 L58 104 L52 103 L47 102 L43 102 M67 158 L68 153 L67 149 L66 143 L67 138 L66 133 M66 133 L60 133 L55 132 L51 132 L45 133 L40 132 M43 102 L42 107 L43 112 L41 116 L41 122 L40 127 L40 132 M682 176 L676 179 M685 161 L680 158 L676 156 L672 154 M672 154 L668 157 L665 159 L661 162 M661 162 L661 166 L660 170 L660 174 M660 174 L665 176 L671 176 L676 179 M683 203 L680 199 L675 196 L671 193 M676 179 L674 183 L672 189 L671 193 M641 203 L644 201 L649 197 L651 194 L656 192 M641 203 L641 207 L641 211 L639 216 M640 216 L645 217 L651 216 L656 215 L661 213 M661 213 L661 208 L659 202 L658 197 L658 193 M632 193 L635 196 L637 199 L641 203 M632 193 L627 195 L622 195 L617 197 M617 197 L619 202 L621 207 L623 213 L624 219 M624 219 L629 218 L634 217 L639 216 M650 238 L648 233 L645 227 L642 223 L640 216 M667 217 L661 213 M671 193 L666 192 L663 192 L658 193 M660 174 L656 179 L653 183 M653 183 L656 192 M562 174 L565 178 L566 182 L568 187 M585 183 L583 179 L584 171 L583 167 M583 167 L577 163 L574 160 L568 158 M584 184 L578 186 L574 185 L568 187 M559 199 L554 197 L549 194 L544 193 M559 199 L565 194 M565 194 L568 187 M628 152 L631 156 L635 160 L640 164 M628 152 L623 155 L620 157 M620 157 L621 161 L621 166 L622 171 L621 176 M640 164 L638 169 L639 174 L639 178 M621 176 L626 177 L632 179 L637 179 M661 162 L653 160 M653 160 L649 162 L645 163 L640 164 M653 183 L648 182 L644 181 L639 178 M632 193 L634 189 L635 183 L637 179 M617 197 L611 193 M611 193 L611 184 M611 184 L614 182 L619 178 L621 176 M606 156 L601 160 M606 156 L606 149 L605 145 M605 145 L600 137 M601 160 L597 156 L592 153 L588 149 L585 144 L580 141 M600 137 L594 137 L589 137 L583 138 M583 138 L580 141 M611 184 L606 181 L603 176 M603 176 L603 171 L603 165 L601 160 M620 157 L614 157 L610 156 L606 156 M583 167 L587 166 L592 164 L597 161 L601 160 M572 147 L577 145 L580 141 M585 183 L590 182 L594 179 L598 179 L603 176 M582 125 L583 129 L583 132 L583 138 M607 120 L600 119 L595 119 M608 122 L604 126 L603 131 L600 137 M694 149 L692 144 L689 141 L685 136 L684 132 M672 154 L671 149 L669 145 L668 141 M668 141 L674 138 L678 136 L684 132 M701 128 L699 127 L693 125 L690 123 M684 132 L687 124 M653 160 L651 154 L649 149 L648 143 M668 141 L663 137 M648 143 L654 141 L658 139 L663 137 M672 114 L675 118 L679 119 L684 122 L687 124 M672 114 L669 119 L664 123 L660 126 M660 126 L661 132 L663 137 M489 -3 L484 -1 L480 -0 L476 1 M475 0 L476 -4 L475 -10 L475 -15 L475 -20 M503 3 L497 2 L493 -0 L489 -3 M479 11 L478 6 L476 1 M464 1 L470 2 L475 0 M401 92 L406 95 L410 100 M401 92 L397 94 L391 95 L386 98 M384 100 L387 105 L390 108 L393 112 L397 116 L399 120 M410 100 L410 106 L409 109 L408 115 M399 120 L408 115 M403 77 L403 82 L402 87 L401 92 M422 97 L418 97 L413 100 L410 100 M380 75 L382 81 L384 87 L384 91 L386 98 M363 85 L364 91 L365 96 M378 102 L384 100 M396 125 L399 120 M378 124 L376 121 M422 123 L417 120 L413 118 L408 115 M607 120 L607 116 L606 112 L607 106 L608 102 M591 103 L595 102 L601 100 L606 99 M608 102 L606 99 M557 84 L560 80 L564 77 L568 74 L571 69 M578 97 L581 91 L581 87 L583 81 M583 81 L580 77 L575 73 L571 69 M561 62 L569 64 M569 64 L571 69 M688 70 L688 76 M688 76 L685 81 M685 81 L679 80 L675 80 L671 80 L666 80 L660 78 M671 60 L668 64 L665 68 L662 74 L660 78 M671 101 L676 100 L679 98 L684 96 M668 100 L666 95 L665 90 L662 83 L659 79 M684 96 L684 92 L685 85 L685 81 M671 21 L666 19 L660 19 L655 17 M671 21 L669 24 L671 30 L670 33 M670 33 L666 34 L662 36 L658 36 M658 36 L655 32 L653 28 L650 25 M655 17 L650 25 M677 12 L674 16 L671 21 M677 12 L683 15 L686 18 L691 22 M682 42 L679 38 L673 36 L670 33 M653 3 L655 8 L655 11 L655 17 M653 3 L648 5 L644 6 M633 19 L637 24 M637 24 L642 24 L646 26 L650 25 M653 3 L657 -2 M724 5 L720 3 L718 -1 L714 -6 L711 -8 M677 12 L676 6 M676 6 L673 3 L670 -2 M702 16 L701 10 L699 6 L696 0 M676 6 L682 4 L686 3 L692 1 L696 0 M696 0 L699 -5 M671 101 L670 104 L670 110 L672 114 M668 100 L664 101 L661 103 L656 104 M660 126 L656 124 L651 122 L646 119 M656 104 L653 107 L651 111 L647 115 L646 119 M160 91 L165 91 L169 94 L175 95 L179 95 L185 96 L190 98 M160 91 L160 86 L160 83 L161 78 M161 78 L165 76 L171 73 L175 69 L181 66 M190 97 L189 92 L188 86 L188 81 L187 74 L185 70 M185 70 L181 66 M125 76 L125 81 L126 86 L127 91 L126 97 M155 70 L161 78 M152 99 L147 98 L140 99 L135 99 L129 99 M152 99 L155 94 L160 91 M126 97 L129 99 M179 45 L180 51 L180 57 L181 62 L181 66 M214 67 L212 62 L212 56 L211 51 L211 45 M214 67 L209 67 L202 68 L196 67 L191 69 L185 70 M242 34 L236 36 L232 38 L226 39 L220 40 L215 42 M214 67 L217 70 M243 35 L244 41 L246 46 L247 50 L248 56 L251 62 L252 67 M251 67 L245 67 L240 68 L234 70 L229 69 L222 70 L217 70 M190 97 L194 97 L200 95 L205 93 L208 91 L213 89 M217 70 L216 74 L215 80 L214 85 L213 89 M295 6 L291 2 L287 -3 M252 -10 L250 -5 L247 2 L244 5 L242 12 M276 22 L275 16 L273 13 L274 6 L272 0 L273 -4 M276 22 L270 23 L265 22 L259 21 L255 23 L249 21 L244 22 M242 12 L242 16 L244 22 M217 9 L222 10 L226 9 L231 11 L238 10 L242 12 M276 23 L280 25 L285 24 L290 24 M242 34 L243 29 L243 26 L244 22 M276 23 L274 27 L273 33 L272 38 M243 35 L248 35 L255 36 L259 38 L266 37 L272 38 M194 306 L189 306 L184 307 L179 307 L174 306 L169 305 M195 305 L194 299 L194 293 L194 288 L193 282 L192 276 L192 271 M169 305 L167 300 L165 294 L165 290 L164 284 L161 278 M161 278 L167 275 L172 274 L178 272 L182 271 L188 268 M188 268 L192 271 M269 788 L264 789 L258 790 L251 791 M247 761 L244 764 L240 768 L237 769 M237 769 L241 773 L244 777 L245 783 L248 787 L251 791 M192 799 L196 797 L202 794 L205 792 L210 790 L215 788 M198 988 L199 983 L199 975 L200 971 L201 965 L203 957 L203 951 L203 947 L205 940 L205 935 L205 929 L206 923 L207 918 L208 911 L210 906 L210 900 L212 894 L212 889 L213 881 L214 876 L215 869 L214 864 L215 858 L217 853 L216 846 L219 841 L220 835 L219 829 L221 823 L220 816 L223 810 L222 805 L224 799 M215 788 L219 791 L220 795 L224 799 M266 862 L264 856 L263 851 L261 846 L259 839 L256 834 L255 828 L252 823 L251 818 L249 812 L246 805 L244 801 M224 799 L230 798 L234 799 L239 800 L244 801 M251 791 L248 795 L244 801 M187 761 L186 756 L185 752 L184 746 L184 742 M187 761 L192 764 L197 765 L202 768 L208 769 L213 770 L218 773 M220 771 L219 766 L220 762 L220 755 L219 751 L219 746 L219 740 M215 735 L219 740 M215 735 L209 737 L203 737 L197 738 L191 738 L186 740 M160 737 L165 739 L169 738 L174 740 L180 740 L184 742 M159 737 L158 742 L157 749 L157 753 L155 758 L154 764 M215 788 L217 783 L218 779 L218 773 M237 769 L232 769 L226 770 L220 771 M245 740 L240 741 L235 741 L228 740 L225 741 L219 740 M220 711 L219 717 L218 721 L217 727 L217 731 L215 735 M188 709 L187 715 L188 720 L186 724 L187 730 L186 735 L186 740 M160 737 L161 731 L162 726 L161 721 L162 715 L163 711 L164 705 M301 673 L296 675 L291 678 L285 680 L280 682 M301 673 L303 678 L303 683 L304 688 L303 694 L304 700 L305 705 L306 711 M280 682 L278 686 L274 691 M306 711 L300 709 L294 708 L289 707 L283 703 L278 702 L273 701 M274 691 L275 695 L273 701 M268 651 L269 657 L272 661 L275 667 L276 672 L279 677 L280 682 M327 702 L322 705 L317 707 L312 709 L306 711 M250 672 L254 675 L257 678 L262 682 L265 684 L269 688 L274 691 M305 729 L305 725 L306 721 L305 716 L306 711 M269 705 L273 701 M798 495 L803 495 L810 496 L814 498 M798 495 L797 490 L797 485 L795 481 M806 471 L802 473 L799 478 L795 481 M806 471 L809 474 L814 478 L817 483 L822 487 M812 520 L813 515 L813 509 L814 505 L814 498 M794 499 L798 495 M791 479 L795 481 M808 466 L806 471 M725 246 L722 249 L718 253 L715 258 M725 246 L722 242 L717 240 L712 238 M715 258 L712 254 L707 252 L703 250 M712 238 L704 244 M703 250 L704 244 M717 263 L715 258 M732 245 L725 246 M716 223 L716 228 L714 233 L712 238 M688 261 L692 258 L697 255 L699 254 L703 250 M691 230 L694 235 L697 237 L701 241 L704 244 M689 377 L686 373 L681 370 L676 366 L672 363 M690 357 L686 358 L680 356 L676 356 M672 363 L676 356 M663 383 L664 376 L664 371 L665 366 M672 363 L665 366 M680 333 L678 339 L673 342 M676 356 L674 351 L675 346 L673 342 M765 260 L771 258 L775 259 L779 256 L783 256 M769 234 L772 238 L777 239 L780 244 L785 246 M783 256 L784 252 L785 246 M777 285 L781 283 L784 279 L787 276 M787 276 L787 272 L787 267 L787 263 M783 256 L787 263 M795 220 L794 226 L793 231 L793 237 L791 243 M785 246 L791 243 M812 234 L808 237 L803 240 L798 242 L795 244 M791 243 L795 244 M795 244 L800 247 L803 251 L808 254 L810 257 M818 250 L810 257 M787 263 L793 262 L799 260 L805 259 L810 258 M792 303 L795 298 L799 294 L801 289 L805 284 L808 279 M792 305 L798 304 L802 303 L808 304 L814 302 M808 279 L813 278 M779 292 L784 296 L787 301 L792 303 M787 276 L793 278 L799 278 L804 278 L808 279 M791 315 L792 310 L792 305 M810 258 L811 264 L811 268 L814 273 L813 278 M744 562 L740 561 L735 563 L731 562 L726 563 M738 538 L730 541 M730 541 L729 546 L729 552 L728 558 L726 563 M722 576 L722 570 L723 565 M697 566 L703 563 L708 560 L712 558 M712 558 L715 560 L720 562 L723 565 M723 565 L726 563 M741 501 L735 503 M738 525 L733 519 M733 519 L733 515 L735 508 L735 503 M720 485 L722 490 L724 495 L726 500 M726 500 L735 503 M551 597 L552 592 L553 587 L554 583 M551 597 L544 599 M554 583 L550 579 L546 576 L542 574 L539 569 M530 583 L533 592 M544 599 L541 597 L538 593 L533 592 M79 739 L85 740 L92 741 L98 742 L102 743 M79 739 L77 745 L75 750 L74 755 L70 759 L70 765 L68 770 M102 743 L103 748 L105 753 L105 758 L105 763 L106 770 M68 770 L72 775 M72 775 L78 774 L83 775 L88 773 L95 772 L99 772 L105 771 M47 766 L53 768 L58 768 L62 769 L68 770 M52 731 L57 732 L61 733 L66 733 L70 734 L76 736 M76 736 L79 739 M72 794 L72 788 L73 785 L73 779 L72 775 M103 801 L102 796 L102 791 L103 785 L104 781 L104 776 L105 771 M129 773 L123 772 L118 772 L111 772 L106 770 M133 768 L133 764 L133 758 L133 751 L133 747 L133 741 L132 737 M102 743 L108 738 M108 738 L112 737 L117 737 L123 738 L126 738 L132 737 M159 737 L152 737 L148 736 L142 734 L136 733 M136 733 L132 737 M159 700 L154 702 L149 702 L143 704 L139 704 L133 706 M136 733 L136 729 L135 722 L133 716 L133 711 L133 706 M20 648 L27 650 L30 651 L36 654 L42 655 M20 648 L17 652 L16 657 L14 664 L13 668 L10 674 M13 677 L10 674 M13 677 L18 677 L22 678 L29 677 L32 679 L37 678 L44 679 M44 679 L44 674 L44 666 L42 661 L42 655 M-13 673 L-8 673 L-0 675 L5 675 L10 674 M15 642 L20 648 M14 711 L14 705 L14 700 L13 694 L14 689 L13 683 L13 677 M44 679 L43 683 L42 690 L43 694 L42 700 L43 705 M66 647 L68 641 L71 637 L73 632 L75 627 L76 623 L79 618 M66 647 L60 646 L57 647 L52 646 M52 646 L50 641 L50 636 L48 631 L48 626 M48 626 L53 625 L57 624 L62 621 L68 619 L73 619 L79 618 M75 653 L69 651 L66 647 M75 653 L81 652 L86 649 L91 647 L97 645 M95 624 L96 629 L95 634 L96 639 L97 645 M95 624 L91 623 L85 619 L79 618 M41 618 L45 623 L48 626 M42 655 L46 653 L50 650 L52 646 M71 596 L73 600 L74 607 L76 613 L79 618 M106 617 L102 618 L100 622 L95 624 M127 620 L131 625 M97 645 L101 647 L104 651 M104 651 L110 650 L115 648 L122 648 L126 646 L133 645 M133 645 L132 640 L132 634 L132 630 L131 625 M154 592 L155 597 L153 602 L155 606 L155 611 L154 616 M131 625 L136 624 L140 622 L145 619 L149 617 L154 616 M-12 334 L-6 332 L-2 330 L3 329 L10 328 L15 326 M-13 353 L-7 355 L-3 357 L1 360 L6 362 L11 364 M11 364 L12 359 L14 355 L17 350 L18 346 L22 341 L23 336 M23 336 L20 333 L19 329 L15 326 M-19 299 L-13 301 L-9 302 L-2 304 L2 304 L7 305 L13 307 L18 308 M15 326 L16 322 L16 316 L17 313 L18 308 M43 277 L41 282 L41 287 L38 291 L36 297 L36 300 M75 304 L69 305 L62 304 L57 305 L51 307 L45 307 M36 300 L40 304 L45 307 M9 276 L10 282 L13 287 L14 290 L16 295 L19 300 L21 305 M36 300 L30 302 L27 304 L21 305 M21 305 L18 308 M139 445 L137 442 L134 437 L132 431 L131 426 L129 423 M99 441 L102 432 M102 432 L108 426 M108 426 L113 426 L118 425 L123 422 L129 423 M164 424 L161 421 L156 416 L152 413 M152 413 L147 415 L142 416 L136 419 L131 420 M308 326 L307 320 L307 316 L304 310 L304 306 L302 300 M338 308 L335 304 L330 299 M302 300 L308 300 L314 300 L320 299 L326 299 L330 299 M370 246 L364 249 M359 271 L361 265 L361 261 L362 255 L364 249 M330 299 L331 293 L330 288 L330 283 L331 279 L331 274 M359 271 L353 272 L348 272 L341 272 L336 274 L331 274 M300 298 L300 293 L300 288 L301 282 L300 277 M300 277 L304 273 M304 273 L309 273 L315 274 L320 274 L325 274 L330 273 M357 215 L354 220 M354 220 L355 225 L354 232 L355 237 L354 242 M364 249 L361 246 L357 244 L354 242 M730 457 L727 454 L724 448 L720 444 M730 457 L734 452 L736 448 L737 443 L740 439 M720 444 L724 439 L725 436 L729 431 M740 439 L736 436 L733 433 L729 431 M707 459 L710 462 L714 466 M710 444 L716 445 L720 444 M751 438 L745 438 L740 439 M727 427 L729 431 M537 464 L541 466 L547 468 M560 444 L559 448 L559 455 M559 455 L554 459 L550 463 L547 468 M544 483 L546 477 L548 472 M548 472 L547 468 M553 497 L556 493 L560 487 L562 483 L565 478 M548 472 L553 473 L558 476 L565 478 M588 479 L583 481 L580 483 L575 485 M588 479 L588 473 L588 470 L587 464 M587 464 L584 462 M584 462 L580 464 L575 466 L570 466 M570 466 L569 470 L568 475 L566 478 M575 485 L571 482 L566 478 M574 499 L574 494 L574 491 L575 485 M591 502 L595 499 M595 499 L595 495 L598 491 L598 486 M598 486 L594 484 L591 482 L588 479 M579 445 L581 448 L582 452 L582 458 L584 462 M605 459 L604 454 L602 449 L602 443 M605 459 L600 459 L595 463 L593 464 L587 464 M559 455 L562 459 L567 463 L570 466 M691 474 L696 479 L699 482 L703 485 M691 474 L686 476 L682 477 L679 481 M679 481 L681 486 L683 490 L685 497 M703 485 L701 490 L699 495 L696 499 M685 497 L693 500 M696 499 L693 500 M691 462 L692 466 L690 471 L691 474 M713 481 L707 484 L703 485 M669 477 L679 481 M669 502 L674 499 L679 498 L685 497 M713 509 L717 506 L723 502 L726 500 M713 509 L710 506 L705 503 L701 502 L696 499 M690 514 L685 516 L680 522 L677 525 M690 514 L692 508 L692 505 L693 500 M651 422 L648 423 M663 445 L657 443 L652 442 L646 442 M646 442 L646 437 L646 434 L648 428 L648 423 M646 398 L640 399 L636 401 M636 401 L635 406 L634 413 L633 418 M648 423 L643 422 L637 420 L633 418 M605 459 L610 462 M598 486 L606 484 M610 462 L609 468 L609 473 L608 479 L606 484 M642 489 L637 487 L632 485 L626 483 M630 509 L627 507 L625 502 L622 499 L618 496 M618 496 L617 489 M626 483 L622 486 L617 489 M608 505 L611 502 L616 499 L618 496 M608 505 L604 504 L599 501 L595 499 M617 489 L614 488 L609 485 L606 484 M573 567 L565 564 M573 567 L576 576 M565 564 L563 570 L562 573 L558 577 L557 581 M576 576 L572 580 L568 584 M568 584 L562 582 L557 581 M561 561 L565 564 M578 543 L586 550 M586 557 L586 550 M586 557 L581 561 L578 564 L573 567 M589 583 L585 582 L579 578 L576 576 M599 578 L598 571 L597 567 M597 567 L592 563 L591 560 L586 557 M554 583 L557 581 M571 599 L569 594 L570 589 L568 584 M551 597 L556 598 L560 599 L565 602 M593 521 L598 524 M586 550 L591 546 L596 545 L601 541 M601 541 L601 537 L599 529 L598 524 M608 505 L610 509 L609 515 L610 519 M598 524 L601 523 L606 520 L610 519 M627 520 L622 521 M610 519 L614 520 L618 520 L622 521 M505 390 L508 388 M513 360 L512 366 L513 371 M508 388 L511 383 L511 377 L513 371 M514 423 L517 418 L519 415 L521 409 L523 406 L526 400 L528 396 M508 388 L513 390 L518 392 L522 393 L528 396 M543 242 L549 240 M564 259 L560 253 L557 249 L555 245 L550 240 M538 215 L543 216 L549 218 M549 240 L549 234 L550 229 L548 224 L549 218 M559 199 L559 203 L558 207 L557 213 M557 213 L549 218 M584 184 L586 189 L588 192 L591 196 L593 200 M565 194 L569 197 L574 201 L578 205 M578 205 L585 203 L589 203 L593 200 M611 193 L607 195 L601 198 L597 202 M619 222 L613 219 L608 216 L602 215 L598 213 M598 213 L598 208 L597 202 M597 202 L593 200 M581 245 L577 241 L574 235 L571 231 M581 245 L585 242 L589 239 L594 237 M595 235 L593 230 L593 225 L592 221 M592 221 L585 221 L580 219 L575 220 M571 231 L572 222 M572 222 L575 220 M579 254 L581 245 M579 254 L576 256 L572 258 L568 259 M550 240 L556 238 L560 236 L565 233 L571 231 M584 259 L579 254 M584 259 L590 258 L596 258 L601 259 L607 258 M607 258 L604 253 L602 251 L600 245 L597 240 L594 237 M612 234 L606 233 L600 235 L595 235 M607 258 L610 259 M618 257 L610 259 M598 213 L594 217 L592 221 M578 205 L577 210 L576 215 L575 220 M557 213 L561 216 L567 219 L572 222 M642 280 L647 279 L650 277 L655 276 M642 280 L643 284 L643 289 L644 295 M644 295 L647 296 L652 297 L656 299 M660 277 L655 276 M660 277 L660 282 L662 288 L663 293 M663 293 L656 299 M651 259 L652 263 L652 268 L655 272 L655 276 M630 269 L631 275 M631 275 L635 275 L638 278 L642 280 M663 276 L660 277 M675 297 L670 296 L668 295 L663 293 M666 319 L661 317 L657 314 M657 314 L657 310 L655 304 L656 299 M507 581 L506 585 L502 589 L501 593 M474 590 L480 591 L485 593 L488 592 L494 594 L500 594 M533 592 L529 596 L525 600 L521 603 M501 593 L507 594 L512 598 L516 601 L521 603 M484 628 L489 626 L494 624 L499 622 M500 594 L499 599 L499 605 L500 610 L499 616 L499 622 M696 105 L702 106 L706 107 L713 108 M696 105 L693 101 M693 101 L697 96 L701 92 L704 88 L707 83 M717 100 L716 95 L715 91 L712 86 L710 82 M717 100 L713 108 M710 82 L707 83 M690 123 L690 119 L693 114 L695 108 L696 105 M717 118 L714 113 L713 108 M684 96 L688 98 L693 101 M688 76 L693 78 L697 79 L702 82 L707 83 M713 79 L710 82 M735 96 L730 97 L725 97 L721 99 L717 100 M137 280 L143 275 M101 255 L107 253 L112 253 L115 250 L120 249 M120 249 L123 253 L127 258 L131 262 L135 267 L140 271 L143 275 M133 302 L137 308 M137 308 L144 308 L148 308 L153 309 L160 309 L165 309 M165 309 L169 305 M161 278 L156 275 L154 275 L150 272 M150 272 L143 275 M178 241 L172 242 L167 242 L161 242 L156 241 M178 241 L180 245 L182 247 L186 250 M186 250 L187 255 L187 258 L188 263 L188 268 M150 272 L151 266 L152 262 L154 258 L154 252 L155 247 L156 241 M317 102 L321 102 L326 105 L330 105 M317 102 L317 96 L318 91 L319 85 L318 81 M330 105 L333 101 L336 97 M336 97 L337 91 L337 85 M337 85 L335 82 L330 80 L327 76 M327 76 L323 79 L318 81 M353 78 L348 80 L343 82 L337 85 M358 102 L352 100 L348 98 L342 98 L336 97 M328 63 L328 68 L327 71 L327 76 M372 139 L369 140 L364 138 L359 138 M355 118 L350 122 M359 138 L356 135 L354 129 L352 126 L350 122 M333 116 L339 119 L343 122 M333 116 L332 110 L330 105 M350 122 L343 122 M310 104 L309 109 L311 115 L310 120 L310 126 M310 104 L317 102 M333 116 L329 120 L326 122 L321 126 M310 126 L315 127 L321 126 M354 220 L348 220 L343 221 L338 220 M351 203 L345 202 L340 204 M340 204 L339 209 L339 214 L338 220 M333 182 L331 187 L332 192 L329 195 L329 200 M333 182 L328 180 L324 182 L319 179 L312 178 L308 178 M309 198 L307 194 L309 188 L307 184 L308 179 M309 198 L314 199 L317 201 L323 203 M323 203 L329 200 M107 330 L106 325 L106 320 L106 315 L104 310 L104 305 M107 330 L114 330 L118 330 L123 331 L128 330 L133 332 M137 308 L136 312 L136 317 L136 323 L134 328 L134 332 M165 309 L164 315 L163 321 L164 324 L163 329 L163 336 M134 332 L138 333 L145 334 L151 335 L155 336 L161 337 M164 126 L158 131 M164 126 L170 126 L175 126 L180 128 L186 129 M158 131 L158 136 L156 142 L156 148 L154 154 L153 159 M186 129 L186 135 L189 140 L189 146 M189 146 L187 151 L184 154 L180 159 M180 159 L176 161 L169 161 L164 161 L158 163 M158 163 L153 159 M152 99 L154 103 L157 109 L159 114 L163 119 L164 126 M125 129 L130 130 L136 131 L142 131 L148 130 L152 130 L158 131 M125 129 L125 124 L126 117 L128 112 L127 106 L129 99 M190 124 L189 118 L189 113 L191 108 L191 103 L190 98 M190 124 L186 129 M211 155 L211 162 L210 167 L211 174 L211 179 L211 184 M211 155 L204 152 L201 150 L196 149 L189 146 M190 182 L195 184 L201 183 L206 183 L211 184 M190 182 L188 177 L185 173 L183 169 L181 164 L180 159 M127 184 L129 178 L131 175 L135 168 L136 164 L140 159 M127 184 L124 185 L119 182 L115 183 L109 182 M101 162 L103 167 L105 171 L108 177 L109 182 M101 162 L107 162 L112 161 L119 159 L125 158 L131 157 L136 156 M136 156 L140 159 M102 193 L104 189 L108 186 L109 182 M98 158 L92 159 L88 161 L82 161 L78 163 L72 164 M98 158 L101 162 M98 158 L98 152 L101 147 L100 141 L102 136 M125 129 L128 134 L129 140 L132 146 L134 151 L136 156 M102 136 L107 135 L113 133 L120 131 L125 129 M153 159 L148 159 L144 158 L140 159 M158 163 L158 167 L159 173 L158 178 L159 184 M127 184 L132 189 M132 189 L138 188 L143 187 L147 185 L153 185 L159 184 M181 190 L182 196 L182 201 L184 206 L183 214 M181 190 L177 188 L171 188 L167 188 L162 188 M183 214 L177 213 L173 213 L167 212 L161 211 L155 212 M155 212 L156 207 L157 202 L159 197 L160 192 L162 188 M190 182 L185 186 L181 190 M162 188 L159 184 M98 133 L99 127 L100 120 L101 115 L100 109 L101 103 L101 97 M98 133 L93 131 L89 129 L85 127 L79 125 L74 123 M71 108 L71 113 L73 119 L74 123 M71 108 L75 107 L80 104 L86 102 L91 101 L95 98 L100 97 M102 136 L98 133 M126 97 L121 96 L116 97 L111 97 L106 97 L101 97 M66 133 L69 131 L72 127 L74 123 M90 74 L93 79 L93 83 L96 87 L99 91 L100 97 M629 148 L634 146 L639 145 L644 143 M629 148 L627 143 L626 139 L624 136 L622 131 M644 143 L644 138 L642 132 L641 128 L642 124 L641 119 M622 126 L622 131 M622 126 L627 124 L628 120 L633 116 M633 116 L641 119 M628 152 L629 148 M648 143 L644 143 M605 145 L610 141 L614 137 L619 135 L622 131 M646 119 L641 119 M608 122 L612 124 L617 124 L622 126 M574 35 L577 37 M569 64 L573 60 L576 55 M577 37 L576 42 L575 47 L575 50 L576 55 M606 99 L606 95 L608 89 L607 84 M583 81 L591 79 M607 84 L602 83 L596 81 L591 79 M655 51 L652 55 L649 59 L647 61 L644 66 M655 51 L653 45 M653 45 L649 44 L642 44 M642 44 L641 48 L639 52 L638 58 L635 62 M635 62 L644 66 M671 60 L667 57 L663 56 L659 54 L655 51 M651 78 L659 79 M651 78 L649 75 L647 69 L644 66 M658 36 L655 41 L653 45 M637 24 L638 29 L636 35 L636 40 M636 40 L642 44 M626 104 L626 99 L624 94 L624 89 L624 83 M626 104 L632 111 M632 111 L635 106 L637 102 L640 98 L643 95 M624 83 L629 84 L634 83 L639 84 L643 85 M643 85 L643 95 M608 102 L611 102 L616 104 L622 103 L626 104 M633 116 L632 111 M656 104 L651 100 L646 98 L643 95 M651 78 L647 82 L643 85 M272 38 L273 42 L276 49 M253 67 L256 64 L262 61 L267 55 L271 53 L276 49 M298 41 L292 45 L288 47 L283 50 M283 50 L276 49 M310 104 L304 102 L300 101 M300 101 L294 104 L290 107 M302 132 L310 126 M302 132 L301 127 L298 122 L295 118 L292 114 L290 109 M190 124 L194 124 L201 123 L206 122 L210 124 L216 122 L221 122 M213 89 L216 92 L218 95 L222 99 M222 99 L222 104 L221 110 L220 117 L221 122 M211 184 L215 188 M183 214 L187 218 M187 218 L193 218 L197 218 L202 217 L206 217 L212 216 M215 188 L214 193 L214 200 L212 205 L212 210 L212 216 M178 241 L180 237 L181 231 L184 227 L186 222 L187 218 M213 239 L208 242 L202 243 L196 247 L192 248 L186 250 M213 239 L213 233 L213 228 L215 224 L214 219 M214 219 L212 216 M224 329 L224 323 L222 320 L222 314 L221 308 M224 329 L229 333 L233 335 L237 336 L242 340 M249 336 L248 331 L249 325 L250 319 L249 315 L251 309 L250 305 M221 308 L227 307 L231 305 L236 304 L241 300 L246 300 M250 305 L246 300 M279 332 L279 326 L277 322 L277 316 L276 312 M250 305 L256 306 L260 307 L265 309 L271 311 L276 312 M300 298 L296 300 L292 302 L287 303 L282 304 M276 312 L282 304 M213 239 L218 247 M192 271 L197 270 L203 270 L208 270 L213 268 L218 269 M218 269 L217 263 L217 257 L219 253 L218 247 M195 305 L200 305 L205 306 L210 305 L216 305 M216 305 L216 300 L216 295 L217 290 L218 285 L218 279 L218 274 L219 269 M279 167 L275 165 L270 165 L266 163 M280 181 L278 185 L275 188 L271 192 M247 168 L250 173 L254 177 L258 181 L263 185 L266 189 L270 192 M266 163 L261 164 L257 167 L252 168 L247 168 M247 168 L245 172 L240 176 L238 181 L235 183 M235 183 L239 189 L241 194 L245 199 L248 203 M270 192 L265 194 L258 197 L253 201 L248 203 M675 801 L669 801 L665 800 L660 801 M675 801 L678 807 L679 813 L681 818 L683 824 L685 829 L687 835 L689 841 L690 847 L692 851 L694 857 L697 863 L697 868 L701 874 L702 881 L705 887 L705 892 L708 898 L709 904 L712 909 L714 913 L716 921 L718 926 L720 931 M660 801 L658 806 L656 811 L655 817 L654 823 L652 828 L650 834 L649 838 L647 844 L646 850 L644 854 L642 859 L641 866 L640 871 L636 877 L636 882 M704 797 L704 803 L705 809 L705 814 L707 820 L707 827 L707 831 L709 839 L709 845 L710 850 L710 856 L712 862 L713 867 L713 874 L714 879 L715 884 L716 891 L716 896 L717 903 L717 907 L718 913 L719 921 L719 925 L720 931 M688 795 L684 798 L680 799 L675 801 M804 805 L802 811 L801 816 L800 822 L801 828 L798 833 L798 839 L797 846 L796 851 L795 858 L794 863 L792 869 L791 874 L790 881 L789 886 L787 891 L786 897 L785 904 L785 910 L783 916 L784 922 L782 928 L781 933 L780 939 L780 944 L779 949 L777 957 L776 961 L776 968 L774 973 L772 980 L771 986 L771 991 L770 998 L768 1003 L768 1009 L767 1015 L766 1020 L763 1027 L763 1032 L763 1039 L762 1043 L760 1049 L759 1054 L758 1061 L758 1067 L755 1074 L754 1078 L754 1085 L752 1090 L753 1095 L750 1103 L750 1108 L749 1113 L748 1120 L747 1126 L747 1131 L745 1137 M555 803 L557 810 L558 815 L560 819 L562 826 L563 830 L565 835 L565 840 L569 846 L570 851 L570 858 L572 863 L575 867 L577 872 L578 879 M660 769 L656 773 L652 778 M660 801 L656 796 L654 792 L650 788 M652 778 L650 784 L650 788 M630 746 L630 750 L629 756 L628 760 M652 778 L649 775 L642 772 L638 768 L634 763 L628 760 M718 537 L714 539 L709 540 M718 537 L719 533 L721 528 L722 523 M703 524 L703 529 L703 533 L703 537 M703 524 L706 521 L710 516 L713 514 M703 537 L709 540 M713 514 L716 516 L718 519 L722 523 M730 541 L727 540 L722 538 L718 537 M712 558 L711 551 L710 547 L709 540 M733 519 L729 521 L727 522 L722 523 M690 514 L693 518 L698 521 L703 524 M690 541 L695 540 L699 540 L703 537 M713 509 L713 514 M540 615 L535 617 L531 617 L525 617 M540 615 L545 621 M545 621 L544 626 L545 632 L545 635 L546 641 M522 619 L525 617 M522 619 L526 623 L528 630 L533 632 L536 637 L539 643 M546 641 L539 643 M544 599 L542 605 L543 610 L540 615 M521 603 L523 608 L524 613 L525 617 M564 617 L558 617 L554 619 L549 620 L545 621 M565 649 L559 646 L556 645 L550 643 L546 641 M108 738 L108 732 L107 726 L105 723 L104 716 L104 710 L104 706 M133 706 L128 701 M128 701 L123 703 L115 704 L111 704 L104 706 M128 701 L128 697 L128 692 L128 687 L129 683 M160 676 L154 677 L151 679 L144 679 L139 680 L135 681 L129 683 M104 651 L105 656 L104 663 L104 667 L104 672 M133 645 L136 648 M104 672 L110 673 L114 674 L120 676 L126 678 M136 648 L133 653 L133 657 L131 662 L129 668 L128 673 L126 678 M186 648 L186 641 L187 635 L187 630 L186 624 M186 649 L181 649 L175 650 L171 654 L165 655 L160 655 M161 620 L161 625 L161 630 L160 637 L158 642 L159 647 L158 654 M161 620 L165 619 L172 619 L177 619 L182 618 M186 624 L182 618 M216 617 L210 619 L204 620 L198 622 L193 623 L186 624 M210 649 L204 648 L197 649 L192 648 L186 648 M194 678 L192 673 L191 668 L189 663 L188 658 L187 653 L186 649 M160 676 L161 670 L160 666 L161 661 L160 655 M154 616 L161 620 M136 648 L142 650 L147 650 L153 653 L158 654 M183 592 L183 596 L183 602 L183 608 L182 612 L182 618 M129 683 L126 678 M236 393 L232 392 L227 392 L222 392 L216 392 M239 357 L235 360 L229 361 L225 361 L220 363 M216 392 L217 387 L218 381 L219 374 L220 369 L220 363 M211 417 L212 413 L212 408 L214 403 L214 396 L216 392 M186 420 L184 415 L183 409 L184 405 L182 399 L180 393 L180 389 M180 389 L186 383 M216 392 L210 390 L206 388 L202 387 L195 385 L191 384 L186 383 M12 420 L15 416 M12 420 L7 419 L0 419 L-5 419 L-10 418 M15 416 L14 411 L12 406 L11 398 L12 394 L10 387 M-20 390 L-14 389 L-9 389 L-4 387 L2 386 L8 385 M15 441 L16 435 L15 430 L14 426 L12 420 M12 366 L11 371 L9 376 L10 381 L8 385 M47 444 L47 439 L47 434 L46 428 L44 423 L45 419 M15 416 L20 416 L26 414 L33 413 L38 411 M45 419 L42 415 L38 411 M67 444 L67 438 L68 432 L68 427 L69 421 L69 416 M45 419 L50 418 L54 419 L60 416 L64 417 L69 416 M102 432 L97 429 L92 424 L88 420 L83 417 L78 413 L75 410 M69 416 L75 410 M23 336 L29 338 L34 338 L39 339 M45 307 L45 312 L46 316 L46 320 L46 325 L47 330 M47 330 L45 333 L43 337 L39 339 M75 304 L74 310 L73 315 L72 321 L74 324 L72 331 M47 330 L52 330 L57 331 L62 332 L68 330 L72 331 M107 330 L104 335 L101 337 L98 342 M98 342 L92 340 L87 338 L81 337 L75 335 M72 331 L75 335 M108 426 L106 421 L107 414 L106 408 L104 403 L104 397 M131 420 L128 415 L128 411 L126 404 L126 398 L124 394 M104 397 L109 396 L114 394 L119 396 L124 394 M340 204 L337 203 L332 201 L329 200 M338 220 L330 226 M323 203 L322 207 L323 214 L323 218 M323 218 L326 223 L330 226 M354 242 L349 242 L343 241 L337 241 L331 241 M330 226 L330 230 L331 236 L331 241 M330 273 L330 268 L329 262 L330 256 L328 251 L328 244 M331 241 L328 244 M626 464 L619 461 M626 464 L632 464 L635 461 L639 460 M619 461 L621 456 L621 452 L621 447 L622 442 M639 460 L639 456 L641 450 L642 445 M622 442 L628 440 L633 441 M633 441 L642 445 M610 462 L619 461 M626 483 L627 478 L626 474 L626 470 L626 464 M645 465 L639 460 M611 432 L616 435 L619 438 L622 442 M646 442 L642 445 M611 430 L615 427 L619 425 L623 423 L627 420 M629 420 L629 425 L631 430 L632 436 L633 441 M633 418 L629 420 M608 556 L605 550 L605 546 L602 542 M608 556 L613 558 L618 559 M602 542 L607 542 L613 540 L618 540 M618 540 L620 543 L624 547 L628 550 M618 559 L621 557 L625 554 L628 551 M597 567 L602 564 L604 559 L608 556 M618 575 L618 570 L617 564 L618 559 M622 521 L622 526 L620 531 L619 535 L618 540 M637 535 L634 539 L631 546 L628 550 M635 556 L628 551 M528 396 L529 392 L528 387 L528 383 M528 396 L532 397 L536 396 L541 397 M528 383 L531 380 L534 377 L537 373 M546 396 L541 397 M546 396 L546 392 L548 389 L549 384 M549 384 L545 381 L541 377 L537 373 M513 371 L517 375 L521 377 L524 381 L528 383 M536 422 L536 417 L537 412 L539 408 L540 402 L541 397 M535 366 L537 373 M535 366 L529 364 L525 362 L519 363 L514 360 M551 401 L546 396 M543 297 L545 300 L549 304 L551 307 M554 283 L555 288 L560 294 L562 299 M562 299 L558 301 L556 304 L551 307 M536 323 L542 321 L547 320 L552 319 M551 307 L552 313 L552 319 M537 342 L540 344 L543 347 L547 348 M552 319 L557 322 M557 322 L558 326 L556 331 L558 337 L557 341 M557 341 L555 343 L551 346 L547 348 M535 366 L539 362 L543 359 L546 356 M547 348 L546 356 M580 401 L585 401 L588 399 L593 399 M602 420 L603 415 L602 410 L603 406 L605 401 M593 399 L598 401 L605 401 M667 319 L663 323 L660 328 L656 332 L653 338 M673 342 L668 342 L662 343 L656 344 M653 338 L656 344 M665 366 L659 364 L655 359 L651 356 M656 344 L654 348 L652 353 L651 356 M653 385 L645 379 M651 356 L642 360 M645 379 L643 373 L643 370 L644 365 L642 360 M504 624 L514 623 M504 624 L505 628 L506 633 L507 640 L509 643 L509 648 L510 654 M514 623 L518 629 L519 634 L523 639 L527 643 L530 649 M510 654 L516 655 L520 655 L525 655 M525 655 L530 649 M499 622 L504 624 M522 619 L514 623 M502 658 L510 654 M539 643 L535 647 L530 649 M536 683 L534 680 L531 674 L530 670 L529 665 L528 660 L525 655 M359 138 L356 141 L353 145 L350 149 M343 122 L340 126 L340 131 L338 135 M350 149 L346 145 L341 139 L338 135 M321 126 L321 130 L324 136 L326 139 L326 143 M338 135 L334 138 L331 140 L326 143 M278 136 L276 131 L276 125 M278 136 L282 138 L286 140 L291 142 M302 132 L300 137 M290 109 L286 114 L283 118 L279 120 L276 125 M300 137 L296 139 L291 142 M288 160 L290 155 M278 136 L269 140 M269 140 L268 146 L267 151 L267 158 L266 163 M290 155 L290 151 L291 147 L291 142 M154 240 L149 240 L145 239 L139 239 L135 237 L129 237 M154 240 L154 234 L155 228 L155 223 L154 218 L155 212 M155 212 L151 211 L145 209 L140 208 L135 207 M129 237 L128 233 L125 228 L124 224 L122 219 M122 219 L126 216 L131 211 L135 207 M120 249 L123 245 L126 242 L129 237 M132 189 L133 193 L134 197 L134 202 L135 207 M107 215 L111 218 L117 217 L122 219 M582 10 L587 14 L589 16 L593 20 M577 37 L581 36 M581 36 L585 31 L588 29 L589 25 L593 20 M601 0 L602 7 L604 11 L605 17 L607 22 M593 20 L597 21 L602 21 L607 22 M623 17 L619 19 L614 22 L610 25 M607 22 L610 25 M607 84 L614 81 M624 83 L620 80 M620 80 L614 81 M635 62 L627 62 M620 80 L622 76 L624 70 L626 67 L627 62 M287 64 L287 70 L286 76 M287 64 L293 62 L298 61 L302 60 L307 58 M286 76 L290 77 L294 80 L299 81 M308 59 L307 64 L304 70 L305 75 L302 79 M302 79 L299 81 M253 67 L257 70 L261 73 L266 74 L271 77 L275 79 M275 79 L281 77 L286 76 M283 50 L284 54 L285 59 L287 64 M301 45 L304 50 L305 54 L307 58 M300 101 L299 97 L298 92 L298 86 L299 81 M275 79 L275 85 L275 89 L275 93 L274 98 M290 107 L286 104 L282 102 L278 101 L274 98 M322 60 L318 60 L312 60 L308 59 M318 81 L313 79 L307 80 L302 79 M247 94 L253 96 L257 97 L264 99 L269 101 M245 96 L246 102 L247 107 L246 110 L247 115 L248 121 M269 101 L268 106 L265 112 L264 116 M264 116 L259 118 L253 119 L248 121 M251 67 L249 73 L248 77 L248 84 L248 88 L247 94 M222 99 L229 98 L233 96 L238 98 L245 96 M274 98 L269 101 M276 125 L273 122 L269 120 L264 116 M221 123 L226 123 L232 122 L236 123 L242 123 L247 123 M221 123 L222 128 L222 132 L223 139 L223 144 L223 148 M223 148 L227 150 L231 151 L238 153 L241 155 M241 155 L245 152 L246 146 L249 142 L251 138 M251 138 L250 134 L249 127 L247 123 M211 155 L215 153 L219 151 L223 148 M247 168 L245 164 L244 159 L241 155 M235 183 L231 185 L226 186 L221 187 L215 188 M269 140 L265 140 L260 139 L254 139 L251 138 M300 277 L295 277 L290 276 L283 274 L278 272 L272 271 M282 304 L279 299 L278 294 L274 290 L273 285 L272 281 L268 276 M272 271 L268 276 M304 273 L304 267 L303 262 L303 259 L302 253 M302 253 L297 251 L291 250 L286 247 L281 246 M281 246 L276 249 L271 251 M272 271 L271 267 L272 261 L271 256 L271 251 M246 300 L246 294 L247 290 L249 284 M268 276 L264 278 L258 279 L254 281 L249 284 M221 308 L216 305 M219 269 L225 269 L230 270 L237 271 M249 284 L244 280 L241 274 L237 271 M288 184 L290 189 L292 194 L294 197 L295 203 M271 192 L272 196 L276 200 L278 205 M278 205 L285 204 L289 204 L295 203 M309 198 L305 201 L300 204 M300 204 L295 203 M594 767 L599 768 L603 768 L608 768 L615 768 L618 769 M594 767 L594 772 L592 776 L593 783 L590 788 L590 793 M618 769 L619 774 L621 778 L622 784 L625 789 L626 795 M592 795 L598 797 L603 798 L610 799 L615 799 L621 800 M621 800 L626 795 M628 760 L624 763 L622 766 L618 769 M568 792 L574 793 L578 793 L584 793 L590 793 M650 788 L645 790 L640 791 L635 793 L631 793 L626 795 M578 879 L579 874 L579 867 L580 861 L582 857 L583 851 L582 845 L583 840 L586 835 L586 829 L586 823 L589 818 L588 812 L591 807 L591 801 L592 795 M636 882 L635 875 L633 869 L633 865 L632 858 L630 852 L628 848 L628 841 L627 836 L627 830 L626 823 L624 818 L623 812 L621 806 L621 800 M100 703 L99 698 L99 692 L99 688 L99 682 L98 677 M100 703 L96 703 L90 705 L85 707 L81 707 M81 707 L76 704 M76 704 L76 699 L76 694 L75 687 L75 682 L74 677 M98 677 L92 677 L87 676 L83 676 L77 674 M77 674 L74 677 M104 706 L100 703 M104 672 L98 677 M76 736 L77 729 L79 725 L80 718 L79 713 L81 707 M43 705 L49 705 L54 705 L60 705 L65 704 L71 704 L76 704 M44 679 L50 678 L55 679 L62 678 L69 678 L74 677 M75 653 L74 658 L77 664 L76 669 L77 674 M155 397 L162 392 M155 397 L150 394 L146 393 L142 390 L137 386 L132 385 M162 392 L160 386 L159 381 L157 377 L156 372 L155 368 L153 362 M132 385 L131 380 L132 376 L130 370 L130 366 M153 362 L147 362 L141 365 L135 365 L131 365 M152 413 L154 407 L153 403 L155 397 M180 389 L175 389 L170 390 L167 392 L162 392 M124 394 L128 390 L130 388 L132 385 M154 361 L159 364 L163 364 L170 364 L174 367 L181 368 L185 368 M186 383 L186 377 L185 373 L185 368 M133 332 L132 337 L133 344 L133 348 L132 353 L131 360 L131 365 M161 337 L159 342 L158 346 L156 352 L155 356 L154 361 M98 342 L100 347 L101 352 L101 356 L102 362 M102 362 L107 362 L113 365 L118 364 L124 365 L130 366 M216 335 L210 334 L204 333 L199 332 L193 331 M216 335 L215 340 L213 345 L212 351 L211 357 M211 357 L207 358 L201 357 L196 357 L190 358 M190 358 L188 352 L185 348 L185 342 M193 331 L191 334 L187 338 L185 342 M224 329 L216 335 M194 306 L193 310 L193 315 L194 321 L192 326 L193 331 M220 363 L215 361 L211 357 M185 368 L187 363 L190 358 M163 336 L169 338 L174 339 L180 341 L185 342 M75 410 L75 406 L74 401 L75 397 M104 397 L102 394 L97 391 L94 389 M75 397 L80 396 L86 393 L89 390 L94 389 M94 389 L95 384 L97 380 L99 375 L100 369 L101 363 M303 252 L303 247 L301 241 L300 237 L301 230 L300 225 M303 252 L308 250 L311 249 L316 246 L321 244 M321 244 L318 240 L315 237 L311 231 L308 227 L304 224 M281 246 L282 242 L285 237 L286 233 L288 228 M288 228 L293 227 L297 225 L300 225 M328 244 L321 244 M323 218 L317 219 L312 222 L308 222 L304 224 M300 204 L301 208 L301 214 L301 219 L301 224 M278 205 L275 214 M275 214 L277 217 L282 221 L286 224 L288 228 M572 283 L575 285 M562 299 L567 298 L572 297 M575 285 L575 289 L573 294 L572 297 M579 358 L579 364 L581 368 L582 374 M579 358 L574 353 M574 353 L570 356 L566 359 L562 363 L559 368 M582 374 L577 377 L573 381 M573 381 L569 381 L565 378 L560 377 M560 377 L559 368 M573 348 L567 346 L562 343 L557 341 M573 348 L574 353 M546 356 L551 360 L554 363 L559 368 M576 395 L574 390 L573 386 L573 381 M590 375 L592 382 L592 386 L592 394 L593 399 M590 375 L582 374 M549 384 L553 381 L556 380 L560 377 M657 314 L653 317 L648 318 L643 318 L639 320 M653 338 L648 336 L644 332 M639 320 L642 325 L642 328 L644 332 M642 360 L635 358 M635 358 L634 354 L633 349 L632 346 M644 332 L640 337 L638 341 L632 346 M604 378 L605 383 L607 389 L607 393 L608 399 M604 378 L609 375 L613 374 L617 373 L621 370 M621 370 L624 376 L626 381 L627 385 M610 399 L616 396 L620 395 L626 392 M626 392 L627 385 M590 375 L597 374 M597 374 L604 378 M605 401 L608 399 M645 379 L642 379 L636 381 L631 384 L627 385 M623 364 L626 363 L632 359 L635 358 M623 364 L621 370 M636 401 L633 398 L629 396 L626 392 M627 420 L624 417 L621 412 L617 409 L613 404 L610 399 M353 199 L351 194 L346 188 L344 185 L342 179 M333 182 L336 178 M342 179 L336 178 M368 187 L364 181 L362 178 L358 172 M342 179 L348 176 L354 174 L358 172 M368 161 L360 164 M350 149 L349 154 M349 154 L352 158 L356 160 L360 164 M360 164 L358 172 M326 145 L328 150 L329 154 L332 158 M326 145 L321 146 L316 145 L313 145 M313 145 L312 150 L310 154 L310 159 M331 160 L325 162 L320 163 L314 166 M314 166 L310 159 M349 154 L344 156 L338 156 L332 158 M300 137 L305 139 L309 141 L313 145 M290 155 L296 157 L301 158 L304 159 L310 159 M336 178 L334 175 L334 168 L332 165 L331 160 M308 178 L310 174 L313 170 L314 166 M623 45 L619 41 L614 38 L610 35 M623 45 L624 50 L623 55 L625 59 M625 59 L619 60 L615 60 L609 59 L605 59 M610 35 L605 40 L602 43 M602 43 L601 49 L599 55 M605 59 L599 55 M636 40 L631 41 L627 43 L623 45 M610 25 L609 30 L610 35 M627 62 L625 59 M614 81 L613 76 L609 70 L608 65 L605 59 M581 36 L587 37 L592 41 L596 41 L602 43 M576 55 L582 55 L586 55 L594 55 L599 55 M591 79 L592 75 L595 69 L596 65 L597 60 L599 55 M269 249 L264 247 L259 248 L254 248 L248 246 M269 249 L267 242 L267 237 L266 232 L267 226 L265 219 M265 219 L259 219 L252 216 L248 216 M245 243 L248 246 M245 243 L243 238 L243 234 L242 228 L241 222 M241 222 L248 216 M237 271 L238 266 L242 261 L243 256 L245 250 L248 246 M275 214 L269 217 L265 219 M248 203 L248 207 L247 211 L248 216 M218 247 L224 247 L228 246 L235 244 L239 244 L245 243 M214 219 L220 220 L225 219 L230 220 L236 220 L241 222 M70 393 L70 388 L68 382 L66 377 L66 371 L65 365 M70 393 L64 393 L60 393 L55 394 L51 393 L44 394 M41 389 L44 394 M41 389 L41 383 L41 379 L41 374 L41 368 M41 368 L45 363 L48 360 M48 360 L53 361 L56 361 L61 361 M61 361 L65 365 M75 397 L70 393 M101 363 L97 364 L91 364 L85 363 L80 364 L76 364 L69 364 L65 365 M38 411 L40 406 L40 402 L42 399 L44 394 M10 387 L16 388 L21 389 L25 387 L30 389 L37 390 L41 389 M12 366 L18 365 L24 367 L29 367 L35 367 L41 368 M39 339 L41 345 L44 350 L45 355 L48 360 M75 335 L73 340 L69 346 L68 351 L64 355 L61 361 M571 319 L573 315 L576 310 L577 306 M571 319 L576 323 L579 327 M579 327 L586 326 L591 325 M577 306 L583 306 L588 306 L594 306 M594 306 L593 311 L594 318 L593 322 M593 322 L591 325 M557 322 L562 320 L567 319 L571 319 M572 297 L575 302 L577 306 M573 348 L577 343 M577 343 L577 338 L579 332 L579 327 M575 285 L580 284 L584 283 L589 282 M594 306 L599 301 M599 301 L597 297 L595 291 L592 287 L589 282 M610 259 L607 264 L605 271 L603 276 M631 275 L627 279 L625 282 L621 286 L619 289 M619 289 L614 286 L610 281 L607 279 L603 276 M584 259 L586 263 L586 270 L588 276 L590 280 M603 276 L599 278 L595 279 L590 280 M637 319 L632 321 L627 321 L621 322 M637 319 L637 313 L637 308 L637 302 M637 302 L633 300 L627 296 L623 295 L618 292 M618 320 L621 322 M618 320 L616 314 L615 310 L612 307 L610 302 M618 292 L615 296 L613 299 L610 302 M632 346 L629 343 L626 338 L620 335 L617 333 M617 333 L619 327 L621 322 M644 295 L637 302 M593 322 L598 321 L603 320 L609 320 L613 320 L618 320 M599 301 L604 303 L610 302 M597 342 L600 339 M597 342 L596 348 L595 351 L594 355 M600 339 L605 339 L610 339 M610 339 L611 344 L613 351 L614 356 M614 356 L610 357 L605 359 L600 362 M594 355 L600 362 M577 343 L583 343 L586 344 L592 343 L597 342 M591 325 L594 331 L596 335 L600 339 M579 358 L584 358 L589 355 L594 355 M617 333 L610 339 M623 364 L618 360 L614 356 M597 374 L599 370 L599 367 L600 362" stroke="#616262" stroke-width="1" fill="none"/>
<path d="M6 806 L6 706.4 L6 706.4 L8.6 704.6 L13 703.7 L18.3 702 L22.7 698.5 L27.1 699.3 L29.7 698.5 L30.6 702 L27.1 704.6 L28 708.1 L32.4 707.2 L39.4 706.4 L46.4 705.5 L48.2 704.6 L48.2 708.1 L45.5 709 L46.4 715.1 L49.9 716.9 L51.7 724.8 L57 725.7 L62.2 724.8 L66.6 727.5 L70.1 726.6 L72.8 729.2 L74.5 734.5 L76.3 739.8 L80.7 741.5 L83.3 744.1 L86 741.5 L90.4 740.6 L93.9 744.1 L97.4 743.3 L100.9 746.8 L104.4 749.4 L106.2 752.9 L104.4 755.6 L107.9 757.3 L113.2 757.3 L115.8 750.3 L120.2 747.7 L122.9 744.1 L127.3 740.6 L129.9 742.4 L132.5 740.6 L136.1 745 L140.4 745.9 L144.8 749.4 L146.6 752.9 L144.8 757.3 L158 757 L155 745 L158 737 L152 730 L149.6 723.3 L152.8 718.5 L156.8 715.3 L156 711.3 L158.9 712.9 L160.8 720.1 L165.6 724.9 L172 729.7 L177.6 732.1 L180.8 736.1 L184 740.1 L188 744.1 L192.9 744.9 L199.3 748.1 L204.1 750.5 L210.5 753.7 L216.9 758.5 L239.3 758.5 L240.9 756.1 L237.7 753.7 L232.9 753.7 L229.7 752.1 L227.3 747.3 L223.3 744.1 L220.1 745.7 L218.5 740.9 L215.3 736.9 L210.5 739.3 L207.3 736.1 L202.5 737.7 L200.1 732.9 L196.9 728.9 L192.9 729.7 L189.6 727.3 L188 723.3 L184.8 720.1 L181.6 716.9 L185.6 716.1 L188 713.7 L187.2 709.7 L191.2 709.7 L190.4 705.7 L192.9 701.7 L195.3 705.7 L198.5 704.1 L201.7 703.3 L200.1 699.3 L202.5 696.1 L204.1 697.7 L207.3 696.1 L208.9 692.9 L207.3 688 L204.1 686.4 L205.7 683.2 L207.3 678.4 L204.1 676.8 L204.1 680.8 L200.1 683.2 L197.7 688 L195.3 693.7 L191.2 695.3 L187.2 692.9 L185.6 688 L181.6 688.8 L177.6 687.2 L176.8 683.2 L180 680 L184.8 679.2 L188 675.2 L192.9 671.2 L196.1 668 L200.9 669.6 L204.1 668 L207.3 664.8 L210.5 660.8 L214.5 657.6 L215.3 654.4 L212.9 651.2 L216.9 650.4 L220.1 652 L221.7 655.2 L226.5 652.8 L232.9 650.4 L239.3 648 L245.7 647.2 L252.1 646.4 L255.3 649.6 L261.7 652.8 L268.1 651.2 L272.9 649.6 L277.7 651.2 L282.5 652 L287.3 648.8 L293.7 648 L300 649.9 L303.3 653.3 L305.8 642.9 L307 633.1 L309.4 625.7 L313.1 622 L316.8 624.5 L320.5 626.9 L321.3 635.6 L323 642.9 L326.7 649.1 L330.4 654 L334.1 657.7 L336 660.7 L339 660.7 L353.8 656.5 L366.1 654 L378.4 651.6 L393.2 649.1 L406 648.4 L406 648.4 L420.8 649.1 L435.6 650.8 L450.3 655.3 L462.7 660.7 L472.5 666.3 L482.4 672.5 L491 678.7 L498.4 684.8 L504.5 691 L507 695.9 L508.2 702.1 L510.7 709.4 L511.9 711.9 L519.3 712.4 L526.7 715.6 L534.1 719.3 L543.9 715.6 L553.8 710.7 L563.6 704.5 L571 699.6 L576 694.7 L580.9 692.2 L587 691 L585.8 684.8 L579.6 684.8 L583.3 679.9 L589.5 676.2 L598.1 673.7 L606 675 L606 675 L613.4 674.5 L618.3 679.9 L625.7 684.8 L633.1 689.7 L640.5 695.9 L644.2 703.3 L649.1 709.4 L656.5 714.4 L657.7 724.2 L663.9 731.6 L670 736.5 L675 743.9 L679.9 751.3 L682.4 758.7 L687.3 757.5 L697.1 758.7 L702.1 763.6 L703.3 771 L707 778.4 L711.9 782.1 L710.7 788.3 L707 792 L707 806Z" fill="#004264" stroke="#000" stroke-width="1.2" stroke-linejoin="round"/>
<path d="M342.7 652.8 L347.6 655.3 L353.8 652.3 L357.5 648.4 L362.4 642.9 L363.6 645.4 L359.2 649.8 L355 654.8 L348.9 657.2 L343.9 656.5Z" fill="#004264" stroke="#000" stroke-width="1.1" stroke-linejoin="round"/>
<path d="M368.6 651.6 L376 645.4 L378.4 638 L376 631.9 L379.6 635.6 L383.3 639.3 L387 630.6 L389.5 636.8 L393.2 641.7 L398.1 642.9 L388.3 646.6 L380.9 649.1 L373.5 652.8Z" fill="#004264" stroke="#000" stroke-width="1.1" stroke-linejoin="round"/>
<path d="M418.3 642.9 L423.2 640.5 L429.4 638 L433.1 642.9 L440.5 641.7 L447.9 639.3 L451.6 642.9 L455.3 646.6 L451.6 649.1 L442.9 646.6 L435.6 647.9 L428.2 646.6 L420.8 647.9Z" fill="#004264" stroke="#000" stroke-width="1.1" stroke-linejoin="round"/>
<path d="M473.7 656.5 L477.4 659 L482.4 656.5 L489.7 655.3 L494.7 651.6 L498.4 654 L493.4 659 L487.3 661.4 L483.6 665.1 L486 671.3 L491 673.7 L495.9 672.5 L500.8 677.4 L507 678.7 L505.8 681.1 L499.6 679.9 L494.7 677.4 L489.7 676.2 L483.6 672.5 L479.9 666.3 L476.2 661.4Z" fill="#004264" stroke="#000" stroke-width="1.1" stroke-linejoin="round"/>
<path d="M523 711.9 L529.2 710.7 L536.5 709.4 L540.2 704.5 L547.6 700.8 L546.4 707 L551.3 705.8 L558.7 703.3 L568.6 698.4 L563.6 703.3 L553.8 709.4 L543.9 714.4 L534.1 718.1 L527.9 714.9Z" fill="#004264" stroke="#000" stroke-width="1.1" stroke-linejoin="round"/>
<path d="M507 694.7 L509.4 693.4 L513.1 698.4 L514.9 704.5 L513.6 711.4 L511.9 711.9 L510.7 709.4 L508.2 702.1 L507 695.9Z" fill="#004264" stroke="#000" stroke-width="1.1" stroke-linejoin="round"/>
<path d="M14.8 719.5 L20.1 716.9 L25.3 716 L32.4 719.5 L38.5 721.3 L39.4 723.1 L35 725.7 L32.4 729.2 L28 730.1 L25.3 727.5 L20.9 723.9 L16.5 722.2Z" fill="#5c504a" stroke="#000" stroke-width="1.1"/>
<path d="M64.9 742.4 L69.3 745 L71.9 739.8 L75.4 740.6 L78.1 744.1 L81.6 747.7 L83.3 749.4 L79.8 750.3 L75.4 751.2 L70.1 748.5 L66.6 745.9Z" fill="#5c504a" stroke="#000" stroke-width="1.1"/>
<path d="M215.9 698.7 L216.0 696.6 M217.5 682.8 L215.7 684.8 M220.6 696.6 L220.8 698.5 L222.4 696.9 M212.0 677.4 L212.5 675.6 M221.3 680.0 L223.0 682.0 M209.4 705.2 L209.6 707.4 L212.0 706.9 M193.4 725.6 L194.4 726.9 L194.5 726.8 L194.9 725.1 M189.9 720.7 L190.9 721.8 L192.3 723.7 L194.2 723.8 M192.3 724.2 L192.6 723.4 L190.2 721.5 L188.7 721.6 M215.3 683.2 L216.4 681.3 L217.3 679.6 M225.1 671.5 L223.5 672.9 L225.3 670.7 M211.7 677.3 L212.6 678.4 M203.0 716.7 L201.5 717.1 L200.3 715.4 L198.8 714.9 M194.3 717.8 L193.0 715.5 M212.3 683.9 L213.0 684.6 L214.7 686.1 L214.0 687.0 M202.7 719.0 L204.7 716.9 M221.1 707.0 L223.0 704.5 M205.6 680.8 L206.7 679.3 L208.7 679.8 M216.5 698.9 L216.5 699.7 L214.7 697.8 L215.3 695.6 M219.1 698.4 L220.9 696.4 L218.7 696.1 M211.0 675.4 L212.6 673.6 L214.9 673.9 L213.2 676.1 M198.8 707.8 L200.7 705.8 L202.3 707.5 L200.4 709.5 M195.3 719.7 L193.9 721.7 L192.6 719.8 M198.4 701.7 L196.2 703.7 L197.9 704.1 M208.8 684.8 L206.4 683.5 L208.3 681.6 L207.3 680.7 M225.1 682.0 L223.4 682.5 M212.0 679.4 L213.0 677.3 M194.6 714.7 L196.7 716.7 L195.3 716.8 M204.0 710.1 L201.7 710.3 L204.1 707.9 L204.1 707.5 M194.6 727.8 L192.4 727.4 M215.3 677.0 L215.2 675.6 L216.0 674.4 L218.2 674.2 M203.3 711.4 L203.5 710.7 L201.8 708.9 M206.6 681.0 L204.6 681.5 M197.7 716.4 L196.6 715.7 L195.8 716.7 L193.7 715.7 M210.4 679.7 L212.7 679.2 L210.4 681.5 M204.8 713.8 L203.4 711.8 L203.9 710.1 L203.5 707.8 M219.3 698.7 L220.7 699.9 M213.5 699.8 L212.5 697.4 M221.1 677.5 L219.6 678.1 M217.3 685.4 L218.9 684.9 L217.9 686.6 M200.0 708.4 L199.8 708.7 L202.3 707.0 L202.3 704.8 M205.6 695.5 L203.3 693.4 M213.0 687.2 L214.2 689.1 L214.1 689.7 L214.4 690.5 M227.2 671.1 L228.4 672.2 L229.3 671.7 M200.3 704.8 L202.2 705.6 L201.0 703.3 M191.6 713.9 L192.8 714.3 L192.9 716.4 M195.5 713.2 L194.4 711.5 L193.4 711.3 M205.6 684.9 L204.8 684.4 M203.8 696.6 L202.2 697.2 L202.8 695.9 L205.2 694.8 M223.8 689.5 L224.5 688.4 L226.9 686.1 L226.3 685.5 M201.9 726.5 L201.4 727.7 L202.4 730.1 L203.6 732.5 M185.2 717.9 L185.1 718.9 L185.6 716.8 L183.6 716.8 M202.6 720.8 L202.8 721.2 L200.6 722.5 M223.9 673.6 L223.7 671.6 L222.8 671.9 L223.7 674.0 M224.7 675.1 L226.1 676.2 L227.9 675.2 M216.7 681.3 L217.7 680.9 M216.6 675.2 L216.4 675.7 L218.0 676.8 L217.5 677.0 M195.2 716.3 L193.6 715.9 M223.8 688.7 L225.0 690.5 L223.1 692.4 L225.4 692.8 M196.8 720.5 L195.8 718.9 L197.3 721.0 L198.0 723.1 M197.4 719.0 L196.3 721.1 L198.1 722.3 L198.2 723.0 M203.3 715.2 L203.6 714.5 M223.0 689.5 L223.9 690.1 L221.8 688.8 M221.3 683.5 L219.4 685.8 M202.7 698.1 L203.9 696.9 L203.9 695.7 L203.4 697.7 M222.3 673.8 L220.0 675.5 L217.8 675.0 L219.5 675.6 M199.7 705.4 L201.7 707.1 L200.0 705.2 L201.6 706.2 M202.4 716.2 L203.6 714.9 L204.1 713.7 M204.7 713.1 L204.7 715.5 M213.8 704.3 L214.3 704.6 L215.1 704.6 L215.9 704.1 M196.0 725.9 L195.4 727.4 M209.9 681.9 L210.5 680.3 L210.1 678.4 M223.0 692.6 L224.2 692.5 M226.4 677.7 L226.6 679.7 M217.4 686.8 L218.4 687.6 L219.6 687.7 L221.0 688.5 M202.7 709.7 L201.3 708.5 L200.4 706.8 M209.7 678.6 L209.9 677.1 M211.5 676.5 L209.3 678.8 L210.8 678.9 M201.2 721.4 L201.3 720.1 M200.4 733.9 L200.7 731.9 L199.1 729.5 L199.9 730.2 M197.4 723.5 L196.2 724.1 L196.1 722.9 L195.2 721.0 M223.3 680.2 L221.3 678.2 L221.1 677.8 L223.0 676.8 M207.7 681.7 L206.3 681.6 M207.5 682.5 L205.8 680.6 L204.9 680.3 M200.7 719.5 L202.0 718.2 L202.5 720.2 M212.5 695.4 L212.5 696.3 L211.7 694.1 L211.8 692.5 M214.0 683.2 L211.9 683.2 M195.7 713.9 L196.4 713.7 M212.6 696.7 L212.7 698.4 M198.0 716.8 L199.3 715.1 L198.5 716.1 M211.9 704.1 L213.9 702.5 L213.2 701.5 M217.6 688.8 L216.9 686.8 L217.2 687.3 M225.4 690.0 L225.1 688.5 M223.4 675.0 L225.8 673.9 L227.0 674.1 L229.4 673.0 M225.3 672.2 L227.7 671.7 L228.6 672.4 M204.4 709.4 L205.7 709.0 M214.5 686.1 L212.2 688.2 L212.9 690.3 M198.3 733.3 L197.7 732.0 M215.9 685.6 L215.0 687.7 L216.9 690.1 L216.2 689.8 M191.0 713.4 L192.6 712.2 L194.0 713.1 M224.9 671.7 L226.4 672.9 M205.5 676.6 L205.5 677.2 M208.4 680.4 L206.9 680.1 L207.2 678.5 L205.5 676.4 M223.9 687.8 L223.1 687.0 L221.6 687.5 M189.2 726.0 L190.8 725.6 M203.7 710.1 L204.0 710.3 L205.3 708.1 L204.4 706.5 M191.9 706.5 L192.4 704.2 L193.9 706.2 L195.8 708.5 M220.7 681.6 L219.6 684.0 M224.4 686.0 L223.9 688.2 L221.9 687.2 M196.0 710.6 L198.0 709.1 L198.7 708.2 L200.8 706.0 M209.7 687.3 L208.1 688.5 M199.3 712.7 L199.1 710.9 M203.4 718.3 L204.1 718.7 L201.8 720.4 L200.1 718.3 M198.9 717.4 L201.2 717.1 M205.5 698.9 L205.7 700.7 L207.6 702.1 M198.6 719.6 L199.2 718.4 M211.3 683.8 L213.2 685.5 M207.2 692.9 L209.3 694.3 L209.1 692.3 M201.4 720.6 L201.9 722.3 M196.3 708.5 L196.6 707.4 M225.6 682.8 L224.1 683.6 L225.2 683.7 M191.6 707.3 L190.3 704.9 L190.1 705.4 L191.4 706.5 M197.6 727.5 L195.9 728.8 L196.8 728.5 L196.6 729.3 M187.9 714.7 L189.7 714.2 L189.4 711.9 M220.0 676.1 L220.7 678.2 L222.9 680.3 M222.1 692.0 L220.0 689.7 L218.7 690.2 L216.8 689.8 M199.2 718.7 L201.2 718.2 L202.5 719.3 M207.0 695.4 L209.0 693.0 L211.1 692.5 M208.8 681.7 L209.3 679.7 M191.2 716.1 L189.7 715.7 M197.2 731.0 L199.0 731.6 L198.0 733.0 M223.8 687.6 L221.8 686.6 L221.1 688.5 L222.2 689.4 M216.5 702.3 L217.1 701.8 L217.6 704.0 M186.3 716.4 L185.3 714.3 M195.7 723.6 L197.3 725.6 L199.6 725.8 M224.9 690.0 L226.5 687.8 L226.4 688.6 L226.4 688.9 M210.9 677.1 L211.7 675.0 M206.0 678.2 L207.2 680.6 L205.4 682.8 L204.5 683.5 M200.8 733.0 L199.9 732.9 M221.2 685.6 L223.4 683.9 L221.0 685.1 L221.2 683.9 M202.1 704.0 L203.0 706.2 L204.8 704.2 L206.8 702.4 M194.8 713.5 L195.8 715.6 L193.9 717.2 L191.6 719.0 M210.6 701.3 L211.0 699.8 L208.9 698.3 L210.2 700.1 M199.2 712.8 L198.5 712.6 L199.9 710.7 M221.2 696.0 L222.1 697.4 M196.0 728.1 L197.4 726.1 L195.3 727.5 L193.0 726.6 M199.7 721.5 L197.5 723.4 L199.6 722.5 M187.5 713.7 L188.6 711.4 L190.9 711.2 L190.4 712.1 M189.1 709.6 L187.8 708.2 L186.6 709.2 M207.3 706.0 L209.3 706.7 L207.0 708.7 L209.1 709.5 M224.6 678.2 L222.8 678.0 L220.6 676.5 M214.2 687.1 L215.4 687.1 L216.1 687.0 M192.9 727.0 L194.8 725.2 L193.3 725.0 L191.5 725.7 M212.3 683.5 L211.9 683.5 M209.0 688.0 L210.3 688.8 M217.9 691.1 L218.0 692.6 M213.3 697.4 L212.4 697.6 L211.2 698.2 L209.2 697.4 M209.0 708.7 L209.7 707.6 L210.7 709.8 L211.0 709.4 M208.9 688.3 L210.9 687.0 M203.4 703.1 L205.3 703.4 L203.3 703.7 M194.8 728.5 L195.6 726.9 L194.0 727.7 L195.0 729.8 M192.2 710.1 L192.6 710.5 M212.7 693.8 L213.8 695.3 L214.4 697.4 L215.1 699.6 M221.9 696.9 L220.3 698.5 L220.6 697.0 M197.6 734.7 L197.9 736.8 L197.2 735.0 M226.2 686.8 L224.3 688.6 M193.4 722.9 L192.2 721.1 M217.2 679.4 L215.9 680.4 L216.6 682.6 L215.5 685.0 M215.7 702.7 L215.9 703.3 L214.6 702.0 M225.1 690.2 L226.4 688.6" stroke="#000" stroke-width="1.3" fill="none"/>
<path d="M214.8 678.6 L216.6 679.4 L217.4 680.4 M202.4 699.1 L201.2 700.6 M196.1 717.1 L196.7 716.9 L195.6 718.8 M195.9 718.1 L194.3 716.5 L194.3 718.1 L193.8 719.4 M218.7 678.8 L219.3 679.4 L217.4 681.4 L216.8 680.0 M203.9 709.1 L203.0 710.7 L201.3 711.6 L203.0 711.8 M198.9 725.7 L199.8 725.0 L199.9 722.9 M206.6 690.0 L204.8 691.9 L204.0 691.1 L205.7 689.1 M194.4 728.2 L192.7 726.2 L192.9 728.3 M216.0 683.4 L214.9 681.5 L214.9 681.3 M206.1 704.5 L207.9 702.5 M214.7 696.9 L212.7 695.3 L211.6 695.8 M222.1 685.6 L221.8 685.4 M213.3 685.3 L214.3 684.9 L213.8 686.8 L211.8 684.9 M218.9 694.9 L216.9 696.8 L217.3 696.2 L215.6 695.9 M200.8 732.5 L201.6 732.1 L203.1 730.1 L204.0 731.0 M201.4 723.4 L201.2 724.5 L201.0 724.2 L201.2 722.8 M208.5 679.7 L209.2 681.6 L207.7 679.9 L209.3 681.8 M186.6 716.6 L186.8 718.4 L186.9 717.5 M216.1 691.7 L215.2 691.7 L214.4 691.6 L216.5 691.9 M211.8 693.1 L210.0 693.2 L211.7 694.1 M193.2 718.0 L194.3 717.2 L194.3 718.6 M192.7 714.5 L191.9 714.1 M202.7 718.8 L202.1 719.9 L200.7 722.0 M204.5 676.9 L206.1 675.5 L204.8 675.0 L205.7 676.3 M197.6 719.0 L196.5 720.0 L196.5 718.6 M212.0 699.9 L213.4 702.0 M200.8 728.5 L199.5 727.2 M192.0 723.4 L190.0 724.5 M197.6 712.7 L197.4 710.7 M209.6 684.4 L207.8 684.4 L205.8 683.9 M219.1 675.3 L217.3 675.0 L217.3 673.0 L218.1 674.0 M193.4 720.6 L194.2 720.1 L193.7 719.9 M198.7 728.2 L197.8 727.3 L195.9 727.2 M198.3 727.1 L199.6 728.4 L199.0 727.4 L199.3 726.9 M219.6 691.9 L218.1 692.8 M219.9 700.9 L220.4 699.6 M225.9 679.3 L227.6 679.1 L229.1 677.3 L227.8 676.7 M214.9 675.7 L213.3 674.8 M195.1 710.0 L195.4 710.7 M220.9 673.9 L219.7 673.5 L221.0 674.9 M214.8 687.4 L214.7 688.0" stroke="#5c504a" stroke-width="1.2" fill="none"/>
<path d="M164.9 741.6 L165.4 743.6 M165.5 745.3 L167.8 743.2 L166.3 741.2 M165.0 731.1 L166.5 730.7 L164.3 730.5 L162.9 731.3 M163.2 748.1 L163.4 747.3 M154.1 722.0 L153.0 723.3 M162.7 751.8 L164.7 752.2 L163.0 753.8 M166.4 748.0 L167.3 748.9 M173.1 745.1 L174.5 743.3 L172.9 744.7 M164.2 748.7 L162.1 746.9 M159.5 732.6 L159.8 733.5 M158.4 746.6 L157.3 744.9 M164.8 734.2 L167.2 736.1 L166.3 734.1 L167.1 736.0 M178.3 735.2 L176.0 734.4 L177.5 734.3 L176.0 734.7 M161.3 733.5 L159.1 732.1 L157.0 730.4 L155.2 729.6 M161.5 734.9 L160.1 735.7 L161.7 735.8 L162.3 734.3 M164.6 738.3 L165.4 739.4 L164.2 739.1 M164.4 730.2 L163.2 730.5 M160.6 748.3 L161.4 747.2 L162.4 749.4 M175.4 735.4 L177.5 733.2 L177.0 733.0 L175.9 733.6 M170.8 742.5 L172.2 741.7 L173.3 739.9 L174.4 739.5 M157.9 728.3 L158.6 728.5 M176.1 742.2 L174.2 742.4 M164.2 738.7 L164.7 741.1 L164.2 739.3 L162.1 738.3 M159.0 728.2 L160.6 729.0 L160.0 730.5 L161.9 731.5 M173.2 740.7 L170.9 739.7 L172.8 739.6 L171.4 737.9 M174.9 744.5 L174.0 742.2 M159.5 729.1 L157.7 729.6 L158.5 730.3 M176.2 743.6 L175.5 745.2 L174.1 745.6 M159.0 728.1 L156.8 728.3 L157.8 725.9 L158.8 724.8 M170.3 740.3 L169.7 740.2 M174.4 733.0 L175.6 731.1 L175.8 732.9 L175.6 734.5 M173.4 736.8 L174.5 738.1 L176.6 735.9 M174.3 739.1 L172.7 740.7 M154.2 724.8 L153.2 725.2 L155.1 727.5 L155.3 728.7 M151.8 725.3 L150.3 725.2 L150.8 725.1 L153.1 723.5 M161.1 748.6 L159.9 749.4 L157.5 748.5 L155.8 747.2 M157.3 747.8 L155.5 749.9 L154.7 752.1 M178.2 732.9 L178.5 731.9 M158.6 750.2 L159.4 748.4 M167.0 746.6 L165.7 746.3 M154.8 724.9 L156.0 722.8 L157.1 722.0 L155.0 720.5 M175.9 738.3 L177.5 739.6 L175.9 737.4 L175.2 738.5 M178.3 742.6 L179.3 741.3 L178.6 738.9 M164.8 748.7 L163.5 750.5 L162.6 750.2 L162.3 751.1 M165.6 745.9 L164.8 745.0 L162.7 743.0 M176.9 732.7 L175.8 731.3 M158.6 745.3 L156.7 746.4 L156.0 746.9 L158.1 747.5 M171.8 739.5 L172.2 740.7 L171.8 740.7 M161.6 746.6 L162.8 748.0 M159.4 730.5 L157.7 728.1 L156.4 729.1 M177.2 732.8 L179.4 734.0 L177.2 732.0 L176.3 731.9 M173.8 734.0 L171.4 733.9 M158.5 744.3 L156.4 742.6 L155.4 744.4 M151.8 727.1 L152.3 728.2 L151.2 729.8 L152.3 728.2 M155.5 723.5 L153.8 722.0 L155.5 722.1 M160.2 736.5 L161.5 736.6 M162.9 737.6 L163.7 738.4 L162.0 739.6 M166.9 738.1 L165.1 736.1 L164.8 738.3 L165.8 736.1 M159.5 731.3 L157.4 729.1 L156.0 730.3 M157.4 747.4 L155.5 749.0 L157.3 750.7 M181.0 739.6 L182.7 737.8 M170.1 733.3 L170.8 733.9 L172.1 735.8 M165.9 740.9 L167.2 740.1 M154.1 731.6 L154.5 732.7 L153.2 733.0 M160.1 748.7 L158.2 748.5 L157.1 747.4 M163.3 733.8 L163.8 733.0 M174.8 737.3 L174.8 735.7 L175.5 738.1 L174.7 736.8 M177.7 732.3 L177.3 733.4 M167.3 746.1 L169.7 745.0 L169.8 745.3 L171.4 746.3 M161.3 744.9 L163.6 744.9 L162.2 746.3 L164.4 745.9 M170.8 740.9 L171.4 740.1 L173.6 738.5 L175.8 739.4 M178.6 736.8 L176.3 736.4 M159.7 748.0 L162.1 748.4 L163.2 749.8 L161.4 751.8 M178.4 738.0 L179.6 737.9 L178.4 739.8 M177.9 737.9 L175.7 737.3 L176.3 739.0 M157.6 747.5 L157.3 748.6 L159.6 750.2 M177.1 737.0 L177.4 737.9 L175.7 736.9 L174.1 736.9 M162.3 730.8 L164.8 732.1 L165.8 732.3 L163.8 733.3 M156.5 727.8 L154.3 729.0 M156.5 728.5 L158.7 727.2 L159.2 729.1 M163.9 749.6 L162.1 749.8 M150.4 725.5 L152.8 727.1 L152.7 728.1 L154.5 728.7 M150.4 727.3 L148.8 728.3 L149.0 727.4 L149.2 725.9 M162.9 740.0 L163.6 739.9 L165.4 739.0 L166.8 739.3 M170.5 737.0 L171.0 739.2 L171.1 737.7 L168.9 738.4 M161.5 745.8 L161.2 745.3 L159.8 744.2 L158.8 741.9 M176.2 739.5 L176.6 740.1 L176.7 741.6 L178.6 741.6 M165.2 745.7 L166.0 744.0 M173.7 733.8 L174.6 734.5 M167.0 738.5 L166.8 740.2 L166.6 741.2 M164.2 744.2 L164.5 744.0 M160.0 734.8 L161.5 736.3 L163.1 734.4 M163.1 744.4 L162.3 745.5 M160.6 733.9 L159.3 735.6 M176.0 736.8 L176.0 735.2 M167.4 745.7 L166.2 744.7 L168.5 747.1 L166.6 747.7 M172.4 739.9 L170.0 738.8 L168.8 737.3 M167.6 735.0 L167.1 735.3 L167.9 734.1 L168.6 734.9 M177.0 735.6 L176.8 737.7 L176.3 738.8 M157.0 730.7 L157.2 729.4 L158.8 727.9 M160.0 747.7 L159.3 749.1 M170.3 738.2 L171.9 737.4 L169.5 736.4 L168.6 737.3 M153.5 730.9 L153.0 731.2 L152.0 731.0 L153.9 729.1 M157.4 745.0 L155.7 746.0 M169.0 734.7 L170.3 735.6 M157.6 728.4 L159.2 730.0 M159.3 743.2 L161.2 744.3 L159.1 742.1 M158.5 745.8 L158.1 747.6 L159.7 749.2 M160.4 740.9 L159.3 741.4 L160.5 741.1 L160.5 743.3 M160.3 750.7 L158.9 752.2 M158.5 743.4 L160.7 743.1 L160.0 745.5 L161.2 745.5 M157.2 732.5 L158.1 732.0 M178.4 742.7 L178.8 743.6 L180.8 741.6 L179.7 739.7 M170.7 739.8 L172.3 740.1 L171.5 739.4 L171.5 739.4 M158.4 749.7 L159.5 751.6 L158.0 749.7 M167.2 731.5 L168.5 732.8 L166.5 730.7 M161.5 750.8 L159.9 750.9 M166.6 745.9 L167.0 744.8 L169.2 745.6 L169.4 747.4 M159.5 727.9 L160.7 728.7 L158.7 726.5 M161.7 735.6 L163.8 738.0 M152.4 722.0 L153.1 722.3 M163.2 750.5 L160.9 751.2 L160.8 750.0 M165.8 739.0 L164.7 737.5 L165.7 735.5 L167.2 736.6 M156.2 723.8 L158.3 723.2 M164.9 748.0 L162.6 748.8 L164.9 750.6 M157.3 731.8 L159.0 731.3 L160.2 733.5 M162.8 748.4 L165.0 750.3 L164.8 749.5 M156.8 728.9 L155.4 726.9 L154.8 726.0 M162.4 729.8 L163.4 728.6 M172.5 739.6 L173.5 738.5 L172.0 738.1 L171.1 736.8" stroke="#000" stroke-width="1.3" fill="none"/>
<path d="M174.7 742.5 L175.2 741.6 L175.1 741.8 M165.1 749.7 L163.3 748.6 L165.0 750.4 M171.3 735.9 L169.3 736.3 L167.6 736.9 L167.2 737.0 M167.2 748.8 L165.9 748.4 L166.8 748.0 M163.0 747.2 L163.1 746.2 M175.3 736.2 L174.5 737.6 L175.9 735.8 L175.9 737.5 M155.0 723.3 L153.0 724.3 M164.7 748.1 L164.0 749.3 L165.7 748.0 M180.7 740.5 L179.4 740.6 L181.4 740.2 M162.7 735.2 L164.7 735.9 L165.1 736.5 M167.1 739.7 L167.6 740.9 L166.8 742.1 L166.8 740.6 M158.7 729.6 L158.8 729.8 L159.7 729.7 L161.5 727.7 M179.3 743.0 L180.8 743.8 L182.6 745.0 M176.6 740.6 L177.0 742.4 L175.0 742.4 M179.4 738.9 L178.5 739.7 L179.6 740.5 L179.4 739.7 M166.9 732.1 L167.8 732.6 L168.1 731.5 M167.5 734.1 L166.1 734.4 M164.4 739.1 L166.4 737.8 M164.9 741.0 L164.1 742.8 M165.5 734.7 L167.0 735.5 L166.5 736.4 L168.2 737.4 M169.2 744.6 L170.8 746.3 L171.2 748.1 L171.0 746.4 M157.6 730.5 L159.5 731.5 L158.0 730.1 M161.6 740.1 L160.2 739.0 L160.5 739.5 L161.5 738.0 M167.8 739.9 L167.7 741.3 L169.3 741.4 M154.8 722.4 L156.3 720.6 L155.2 722.4 M169.9 736.0 L171.2 736.4 L171.6 737.9 L171.6 736.0 M155.9 725.3 L155.1 723.4 L155.7 721.4 L157.8 722.7 M162.1 739.2 L160.5 739.9 L162.0 740.0 L163.5 738.9 M162.3 728.6 L161.4 728.3 L159.8 728.5 M173.1 740.7 L175.0 741.6 M159.9 745.8 L161.1 744.1 L160.0 744.0 M170.4 738.2 L172.4 739.3" stroke="#5c504a" stroke-width="1.2" fill="none"/>
<path d="M228.0 748.8 L229.1 749.0 M232.4 755.9 L233.5 755.3 M214.9 739.0 L215.9 739.5 M222.1 747.3 L223.2 747.4 M227.8 754.7 L228.8 754.7 L230.0 754.4 M212.9 740.7 L211.6 739.7 L209.8 740.3 L212.1 741.6 M216.3 743.2 L216.1 745.4 L215.9 746.0 L217.7 746.9 M222.3 750.9 L222.4 749.2 M227.5 748.0 L225.4 747.5 M212.3 738.8 L209.9 737.7 M216.3 746.1 L215.0 744.5 L214.0 745.7 L212.5 745.6 M234.4 754.7 L234.8 753.3 L235.9 752.1 M238.9 756.1 L238.4 757.8 L240.7 759.8 L240.5 757.4 M216.6 741.0 L216.2 743.2 L214.9 741.5 L212.8 739.7 M211.1 739.6 L212.4 740.7 L214.2 738.6 L212.7 740.8 M236.8 757.5 L237.1 757.3 L238.5 758.2 M213.9 738.1 L215.1 740.4 L212.8 740.4 L213.1 740.9 M237.6 755.8 L236.1 754.6 L238.1 756.0 L239.0 754.2 M230.9 755.5 L229.6 757.4 L227.8 756.6 M218.7 747.0 L219.8 747.5 L221.1 747.3 L219.7 749.5 M208.2 738.6 L208.3 740.9 L206.1 740.8 M222.1 746.2 L224.5 748.4 L225.1 747.2 M213.4 742.3 L214.3 744.3 L216.0 745.0 L215.0 742.9 M236.2 755.3 L235.2 755.4 L233.7 753.3 M220.8 749.8 L221.2 748.2 L220.7 749.7 L218.3 749.9 M217.2 743.4 L217.2 744.0 L218.3 742.5 M227.3 753.3 L229.4 752.8 M240.4 756.8 L239.4 757.6 L241.3 756.3 M219.6 744.8 L219.0 745.5 M233.7 756.7 L232.1 759.1 L234.0 760.3 M227.5 753.0 L229.0 755.1 M229.9 754.5 L231.9 753.0 L230.5 754.0 M236.8 757.6 L234.6 759.8 M222.4 749.2 L221.8 747.3 M232.5 757.1 L234.0 758.5 L231.7 760.6 M216.8 743.5 L218.2 742.0 M228.1 753.7 L228.5 754.2 L229.5 754.2 M215.4 742.3 L215.4 743.9 L216.3 745.4 L215.0 747.7 M208.2 738.5 L209.0 736.9 L208.7 735.4 M229.2 750.2 L231.6 749.0" stroke="#000" stroke-width="1.3" fill="none"/>
<path d="M227.8 755.3 L226.5 754.9 L226.4 754.5 L227.5 755.9 M239.8 756.9 L241.4 758.1 M211.5 739.0 L212.3 739.6 M217.3 743.6 L219.4 742.6 L218.8 740.7 M224.8 748.9 L224.4 747.8 L226.0 749.5 M211.0 740.5 L209.0 742.5 L211.0 742.0 M229.3 757.2 L229.5 757.9 M224.9 751.2 L223.6 751.1 M222.6 750.0 L220.8 748.8 M227.3 750.5 L227.6 750.4 L227.0 749.0" stroke="#5c504a" stroke-width="1.2" fill="none"/>
<path d="M99.8 752.2 L100.7 754.2 M100.2 750.9 L102.1 752.8 L100.3 750.7 M83.9 744.2 L84.8 744.7 M103.0 749.8 L102.6 751.2 L103.0 752.8 L101.7 752.1 M97.5 748.1 L98.5 750.1 L99.8 750.2 M101.7 747.9 L102.7 746.9 M92.9 744.6 L92.8 743.8 M102.5 751.0 L101.6 751.8 M94.2 750.4 L95.8 750.1 L97.0 748.0 M98.1 754.4 L96.8 753.1 L95.5 755.2 L93.8 753.2 M89.6 750.8 L89.8 753.2 M87.5 746.3 L85.2 746.9 L87.0 749.1 L87.9 748.3 M90.9 750.6 L92.6 751.2 M92.1 752.2 L91.7 751.2 L93.6 750.1 M99.9 752.4 L99.5 751.2 L97.2 752.7 M93.6 753.2 L91.9 753.0 L91.6 755.4 M96.3 751.0 L93.8 751.0 L91.5 750.2 L90.2 750.0 M98.8 754.2 L99.7 754.9 L100.2 755.8 M95.7 750.3 L97.9 750.5 M103.0 753.0 L101.8 751.7 L101.5 753.0 L102.9 754.3 M96.6 748.1 L96.1 750.2 M96.5 748.0 L98.9 750.2 L97.0 749.1 L97.5 750.0 M93.9 752.7 L94.6 752.6 M86.4 743.4 L86.9 742.6 M91.5 746.5 L89.6 744.4" stroke="#000" stroke-width="1.3" fill="none"/>
<path d="M97.1 744.0 L99.1 743.0 L97.9 741.0 L96.9 741.6 M103.8 749.6 L103.4 748.4 L104.4 747.5 L102.6 747.9 M89.2 743.4 L91.0 745.4 M95.1 746.5 L95.6 747.8 L94.7 747.6 L94.0 746.8 M88.2 744.8 L88.2 745.8 L86.4 747.5 M103.8 751.0 L101.8 751.0 L103.8 749.1 L103.1 747.5" stroke="#5c504a" stroke-width="1.2" fill="none"/>
<path d="M145.3 755.2 L146.6 754.6 L144.2 752.8 L145.7 754.8 M115.7 753.2 L116.5 755.0 L116.9 754.4 M124.0 751.0 L123.0 748.7 L122.7 747.5 L125.0 749.2 M118.7 750.0 L120.7 749.2 L123.1 747.8 M135.5 754.1 L135.4 752.3 L134.0 750.5 L135.8 749.0 M128.6 744.1 L126.6 742.4 L124.2 744.0 M133.9 752.6 L135.6 752.5 L134.0 752.1 L131.7 753.4 M114.0 755.3 L115.7 755.4 L115.8 756.6 L116.2 754.2 M129.4 748.2 L127.9 746.9 M116.1 755.5 L115.2 755.8 L117.4 756.4 L119.1 754.1 M121.5 753.9 L122.7 754.6 M126.1 752.4 L126.3 751.1 L124.8 751.0 L122.7 752.9 M132.0 747.2 L129.9 744.9 L127.7 746.3 L129.8 746.8 M132.5 743.2 L130.9 742.1 M130.8 748.2 L129.3 746.5 L130.7 745.6 L131.6 746.5 M117.2 754.0 L115.3 752.7 L116.2 754.4 M122.3 753.2 L122.2 755.1 L123.2 755.1 M125.6 742.4 L123.9 744.5 L122.9 746.4 M121.4 754.4 L122.6 754.7 L120.9 753.4 L118.6 755.5 M117.5 752.6 L119.3 753.4 M128.7 744.1 L130.6 743.1 L128.2 744.1 L130.6 744.3 M133.6 744.7 L132.9 743.4 L133.7 745.0 M140.3 756.8 L139.4 758.5 L138.3 759.4 L137.4 760.4 M134.6 753.5 L135.3 755.0 L133.1 754.1 L135.1 755.6 M139.4 747.1 L141.1 748.7 L141.3 749.4 M130.2 756.4 L128.4 758.2 L130.2 756.0 L128.3 753.9 M115.8 752.0 L115.4 750.3 L113.9 749.6 L111.6 751.5 M125.1 744.6 L123.0 742.8 M120.9 753.2 L123.3 750.9 L122.2 749.3 L122.7 747.9 M132.8 749.8 L133.6 751.2 L134.5 749.4 L136.7 747.4" stroke="#000" stroke-width="1.3" fill="none"/>
<path d="M126.5 742.0 L125.2 741.7 L126.8 740.0 L127.0 739.3 M127.0 747.9 L127.7 750.0 L129.2 751.3 M123.0 744.6 L124.9 744.3 M120.1 756.6 L121.5 755.1 L121.6 756.0 L119.6 757.9 M132.1 748.1 L131.6 750.1 L129.8 749.8 M124.0 754.2 L125.8 755.7 L127.0 757.1 M118.1 751.8 L119.2 753.0 L118.8 754.2 L120.3 755.1" stroke="#5c504a" stroke-width="1.2" fill="none"/>
<path d="M160.0 748.1 L159.0 749.9 L157.3 751.8 M169.6 750.6 L171.4 752.7 L170.1 755.0 M175.9 738.6 L173.8 737.7 L175.3 739.9 M161.4 746.5 L163.3 748.8 L165.6 750.0 L165.1 750.1 M166.0 747.8 L166.0 748.4 L165.4 747.4 L167.3 748.9 M166.6 753.5 L166.2 752.5 L165.1 750.6 L163.2 750.5 M180.7 740.8 L180.9 739.3 M155.4 719.1 L156.0 718.4 L158.4 717.2 L157.1 719.3 M157.9 719.5 L156.6 717.7 M161.6 745.5 L160.2 746.0 L159.1 747.8 L159.0 748.7 M176.6 738.9 L177.9 739.4 L180.1 737.7 M170.6 735.2 L171.8 736.0 L171.1 735.3 M160.8 749.8 L159.6 751.8 M171.5 735.4 L171.4 735.3 L169.0 736.8 L168.1 736.6 M171.7 746.3 L171.9 748.6 M166.2 748.8 L168.4 750.7 M169.1 740.5 L170.5 740.7 L171.2 742.7 M156.0 718.3 L156.2 718.6 L154.0 716.3 L154.0 716.3 M158.1 739.7 L156.1 739.8 L156.9 740.7 M156.7 732.0 L154.4 731.2 L156.6 730.0 M168.7 733.5 L168.8 735.3 L166.7 735.9 M158.0 729.7 L160.4 729.1 L162.2 730.6 L163.2 731.8 M169.9 748.0 L171.8 745.9 L171.7 747.2 L173.8 747.1 M158.0 725.0 L156.7 726.1 L157.0 727.3 M155.0 719.6 L152.8 719.4 M165.0 729.8 L167.2 728.2 L168.5 729.9 M164.5 735.3 L165.2 737.7 M163.8 731.5 L164.4 732.7 L166.0 732.0 M165.4 736.0 L165.8 734.5 L164.0 732.7 M160.0 721.8 L161.8 720.2 L161.3 719.2 L159.7 720.8 M168.7 738.1 L169.6 737.5 M160.3 741.6 L160.7 744.0 M180.9 741.1 L179.3 741.1 L179.9 743.5 L177.9 743.7 M156.2 725.6 L158.4 725.4 M160.6 742.1 L161.2 741.0 L158.8 741.2 M170.0 745.6 L169.9 743.4 M161.2 722.4 L162.8 724.3 L164.9 724.3 L165.8 725.2 M165.7 748.2 L164.7 749.4 M179.9 743.7 L179.0 743.1 L180.0 745.5 L178.5 745.0 M163.2 728.4 L161.7 727.7 L159.4 726.3 L159.1 726.4 M174.4 742.2 L172.1 743.8 M153.8 731.3 L155.3 733.0 L156.3 731.8 L157.5 732.0 M175.0 740.7 L173.7 742.1 L174.1 743.5 L174.8 742.1 M164.1 738.9 L163.6 739.4 L161.6 740.2 M162.5 725.2 L162.0 725.3 L162.5 725.0" stroke="#000" stroke-width="1.3" fill="none"/>
<path d="M163.8 746.4 L165.3 746.3 L166.1 748.3 L167.2 746.9 M180.3 740.9 L179.5 742.8 L177.5 741.9 L178.0 741.0 M160.7 721.9 L159.8 720.7 L157.8 722.8 L159.4 721.3 M159.6 741.4 L159.5 742.3 M159.7 721.6 L158.4 722.3 M161.4 734.6 L163.4 736.4 L165.4 736.6 L166.3 735.6 M161.4 754.4 L161.7 754.3 L163.6 754.2 L162.6 753.3 M161.9 733.9 L161.1 733.0 L161.4 733.9 M152.6 724.0 L153.3 724.9 L152.0 724.0 L152.1 723.5 M162.9 738.6 L164.0 740.2 M167.4 732.4 L167.3 732.3 L166.4 732.3 L166.8 730.7" stroke="#5c504a" stroke-width="1.2" fill="none"/>
<path d="M802.2 585.1 L804.2 582.2 L806.7 580.7 L806.7 650.2 L804.2 647.3 L803 636.9 L802.2 626.6 L801.5 616.2 L803 608.8 L801.5 601.4 L803.7 594Z" fill="#004264"/>
<path d="M794.8 577.8 L797.8 576.3 L799.3 580.7 L803 574.8 L804.8 579.2 L803.7 585.1 L801.5 589.6 L797.8 588.1 L795.6 583.7Z" fill="#000"/>
<path d="M786 594.8 L790.4 594.3 L798.5 595.2 L805.2 596.2 L803 599.2 L797.8 597.7 L792.6 596.7 L786.7 596.4Z" fill="#000"/>
<path d="M791.1 605.9 L793.4 605.1 L797.8 607.3 L802.2 609.6 L801.5 613.3 L797.8 611.8 L794.1 609.6 L791.4 608.1Z" fill="#000"/>
<path d="M786.7 618 L791.9 617 L795.6 618.4 L801.5 617 L802.2 623.6 L797.8 626.6 L796.3 622.1 L791.9 620.4 L787.4 619.5Z" fill="#000"/>
<path d="M791.9 632.5 L795.6 631.7 L799.3 629.5 L803 634 L802.2 642.8 L799.3 640.6 L797.8 636.9 L794.1 636.2Z" fill="#000"/>
<path d="M786 645.1 L789.7 644.3 L795.6 646.5 L800.8 644.3 L804.5 648.8 L804.8 656.2 L802.2 653.2 L797.8 651 L793.4 650.2 L789.7 653.2 L786.7 650.2Z" fill="#000"/>
<path d="M789.7 574.5 L794.8 574.8 L794.4 576.3 L790 576Z" fill="#000"/>
<path d="M800.8 560.7 L802.2 561.2 L800.3 565.2 L799.3 564.4Z" fill="#000"/>
<path d="M804.8 564.4 L806.7 564.4 L806.7 663.6 L805.2 657.6 L805.6 648.8Z" fill="#000"/>
<path d="M708 779 L711 781 L714 784 L713 787 L710 789 L712 792 L705 792 L706 788 L708 784Z" fill="#000"/>
<path d="M796.3 580.7 L797.8 580 L798.8 583.7 L797.4 584.4Z" fill="#004264"/>
<path d="M800.8 582.2 L802.7 579.2 L803 583.7 L801.5 586.6Z" fill="#004264"/>
<path d="M799.3 601.4 L802.2 599.2 L803 602.9 L800.3 604.4Z" fill="#004264"/>
<path d="M797.8 608.8 L800.8 610.3 L799.7 611.8Z" fill="#004264"/>
<path d="M796.3 620.7 L799.3 619.9 L800.3 623.6 L797.8 624.3Z" fill="#004264"/>
<path d="M797.8 634 L800.8 633.2 L801.2 638.4 L798.8 639.1Z" fill="#004264"/>
<path d="M790.4 647.3 L794.8 648 L793.4 649.5 L789.7 648.8Z" fill="#004264"/>
<path d="M799.3 647.3 L802.2 648.8 L801.5 651.7 L799.3 650.2Z" fill="#004264"/>
<path d="M784.4 655.8 L786.4 661.7 L785.8 669.6 L782.4 671.6 L785.4 677.5 L788.3 683.4 L791.7 687.3 L792.3 695.2 L795.2 703.1 L793.3 708 L788.3 710" stroke="#000" stroke-width="3.6" fill="none" stroke-linejoin="round" shape-rendering="auto"/>
<path d="M784.4 655.8 L786.4 661.7 L785.8 669.6 L782.4 671.6 L785.4 677.5 L788.3 683.4 L791.7 687.3 L792.3 695.2 L795.2 703.1 L793.3 708 L788.3 710" stroke="#004264" stroke-width="1.8" fill="none" stroke-linejoin="round" shape-rendering="auto"/>
<path d="M788.3 710 L789.3 716 L786.4 718.9 L784.4 722.8 L783.8 728.8 L784.4 733" stroke="#000" stroke-width="1.2" fill="none"/>
<path d="M299.6 60.2 L303.3 56.5 L307 55.3 L314.4 57.7 L316.8 67.6 L323 72.5 L320.5 79.9 L324.2 91 L322.3 95.9 L316.8 84.8 L314.4 77.4 L311.9 67.6 L307 61.4 L302.1 63.1Z" fill="#244163" stroke="#26425f" stroke-width="0.6"/>
<path d="M368.6 260.7 L373.5 258.2 L383.3 263.9 L390.7 267.6 L396.9 276.2 L388.3 272 L380.9 267.6 L373.5 263.9 L369.8 262.7Z" fill="#244163" stroke="#26425f" stroke-width="0.6"/>
<path d="M439.3 376 L442.9 369.8 L447.9 368.6 L450.3 363.6 L451.6 367.3 L446.6 373.5 L444.2 377.2 L440.5 377.9Z" fill="#244163" stroke="#26425f" stroke-width="0.6"/>
<path d="M424.5 413.4 L426.9 417.1 L426.2 423.2 L429.4 428.2 L431.9 429.4 L430.1 434.3 L427.7 430.6 L425.2 424.5 L424.5 418.3Z" fill="#244163" stroke="#26425f" stroke-width="0.6"/>
<path d="M526.2 502.1 L529.2 504.5 L534.1 503.3 L532.8 511.9 L529.2 519.3 L530.4 525.5 L536.5 525.5 L532.8 530.4 L534.1 537.8 L530.4 534.1 L526.2 531.6 L527.9 526.7 L525.5 519.3 L526.7 509.4Z" fill="#244163" stroke="#26425f" stroke-width="0.6"/>
<path d="M121.8 659 L126.7 654 L132.8 652.8 L136.5 657.7 L134.1 665.1 L127.9 668.8 L123 666.3Z" fill="#244163" stroke="#26425f" stroke-width="0.6"/>
<path d="M42.9 679.9 L47.9 682.4 L51.6 688.5 L46.6 688.5 L42.9 683.6Z" fill="#244163" stroke="#26425f" stroke-width="0.6"/>
<path d="M57.7 684.8 L61.4 691 L65.1 697.1 L70 702.1 L77.4 703.3 L83.6 705.8 L84.3 709.4 L77.4 709.4 L70 707 L63.9 704.5 L59 697.1 L56.5 691Z" fill="#244163" stroke="#26425f" stroke-width="0.6"/>
<path d="M145.2 695.9 L151.3 695.2 L153.8 700.8 L152.6 707 L147.6 709.4 L145.2 714.4 L141 712.4 L140.2 707 L146.4 704.5 L147.6 699.6Z" fill="#244163" stroke="#26425f" stroke-width="0.6"/>
<path d="M541.5 607.2 L543.9 606 L547.6 606 L546.4 613.4 L548.9 614.6 L553.8 610.9 L562.4 610.9 L563.6 613.4 L556.2 614.6 L551.3 618.3 L547.6 619.5 L542.7 617.1Z" fill="#244163" stroke="#26425f" stroke-width="0.6"/>
<path d="M784.4 732.7 L786.4 736.6 L788.3 740.6 L792.3 741.6 L796.2 746.5 L795.2 752.4 L792.3 755.4 L788.3 751.4 L786.4 746.5 L785 740.6Z" fill="#244163" stroke="#26425f" stroke-width="0.6"/>
<path d="M769.6 791.5 L773.5 790 L777.5 790.9 L778.5 792.9 L769.6 792.9Z" fill="#244163" stroke="#26425f" stroke-width="0.6"/>
<path d="M604.2 307 L606.4 305.5 L608.6 304.8 L610.8 305.5 L614.5 301.8 L612.3 298.9 L613.1 294.4 L616 290 L623.4 290 L625.6 293 L627.1 295.2 L623.4 297.4 L621.9 301.8 L619 304.8 L616 306.2 L614.5 309.9 L610.1 312.2 L607.1 313.6 L605.7 310.7Z" fill="#244163" stroke="#26425f" stroke-width="0.6"/>
<path d="M279.9 59.7 L287.3 60.2 L299.6 54 L309.4 54 L324.2 62.7 L334.3 70 M206 200.6 L220.8 190.7 L238 183.3 L255.3 176 L275 168.6 L292.2 164.9 L311.9 161.2 L329.9 160.2 M472.5 6 L471.3 23.2 L465.1 42.9 L455.3 54 L435.6 60.2 L430.4 70 M489.7 137.8 L516.8 136.5 L529.2 146.4 L543.9 156.2 L553.8 159.2 L573.5 157.5 L593.2 159.9 L606 159.2 M451.1 190 L455.3 195.7 L465.1 206 M588.3 6 L587 20.8 L592 33.1 L600.6 39.3 L603 47.9 L601.8 60.2 L606 67.6 M606 95.9 L600.6 100.8 L590.7 109.4 L595.7 121.8 L606 129.2 M593.2 159.9 L578.4 178.4 L568.6 190.7 L558.7 206 M806 71.3 L793.2 77.4 L778.4 79.9 L763.6 87.3 L743.9 95.9 L729.2 104.5 L714.4 111.9 L699.6 121.8 L679.9 129.2 L667.6 136.5 L657.7 143.9 L642.9 150.1 L623.2 147.6 L613.4 148.9 L608.5 139 L606 134.1 M657.7 143.9 L667.6 151.3 L672.5 158.7 L677.4 166.1 L684.8 173.5 L686 182.1 L692.2 188.3 L704.5 189.5 L716.8 187 L734.1 183.3 L753.8 180.9 L773.5 176 L795.7 173.5 L806 176 M714.4 189.5 L719.3 198.1 L721.8 206 M606 153.8 L613.4 148.9 M6 257.2 L25.7 255.3 L42.9 254 L67.6 247.9 L87.3 241.7 L109.4 234.3 L129.2 226.9 L143.9 224.5 L159.9 224.5 M159.9 224.5 L163.6 221.3 L173.5 222 L176 228.2 L171 231.9 L162.4 231.9 L159.9 226.9 M145.2 206 L148.9 215.9 L153.8 223.2 M176 223.2 L190.7 215.9 L206 209.7 M164.9 231.9 L166.1 242.9 L168.6 257.7 L171 270 L173.5 287.3 L172.3 304.5 L174.7 321.8 L177.2 339 L180.9 356.2 L183.3 373.5 L183.3 388.3 L178.4 400.6 L176 406 M181.7 6 L189.5 16.3 L197.2 31.9 L200.3 44.8 L200.3 70.6 L199.8 91.3 L194.6 101.7 L188.2 112 L185.6 127.5 L181.7 140.5 L175.3 149.5 L174 158.6 L166.2 171.5 L158.4 184.4 L150.7 197.4 L145.5 205.1 L148.1 212.9 L152 216 M241.2 6 L233.4 13.8 L228.8 24.1 L228.3 39.6 L225.7 52.5 L221.8 61.6 L210.2 66.8 L201.1 70.6 M241.2 6 L249 16.3 L256.7 29.3 L260.6 39.6 L264.5 52.5 L272.2 59 L280 60.3 M206 203.8 L194.6 207.2 L192.1 216 M397.6 206 L398.6 220.8 L395.7 235.6 L393.2 250.3 L395.7 270 L396.9 279.9 L395.7 299.6 L398.1 311.9 L400.6 329.2 L399.3 343.9 L401.8 355 M356 401.8 L348.9 403 L341.5 406 M465.1 206 L472.5 215.9 L479.9 225.7 L484.8 231.9 L499.6 238 L504.5 239.3 L514.4 235.6 L521.8 238 M504.5 239.3 L498.4 250.3 L495.9 262.7 L489.7 277.4 L479.9 292.2 L470 307 L460.2 321.8 L452.8 331.6 L442.9 339 L430.6 348.9 L423.7 355.8 M556.2 206 L548.9 218.3 L536.5 228.2 L521.8 238 M521.8 238 L526.7 245.4 L534.1 250.3 L536.5 262.7 L541.5 277.4 L543.9 289.7 M456 363.1 L465.1 363.6 L479.9 362.4 L497.1 358.7 L514.4 355 L520 354.8 M650.1 307.7 L655.3 300.8 L672.5 289.7 L689.7 281.1 L709.4 272.5 L721.8 265.1 L729.2 257.7 L739 254 L751.3 247.9 L763.6 240.5 L776 233.1 L788.3 229.4 L806 222 M726.7 206 L734.1 214.6 L746.4 215.9 L753.8 225.7 L758.7 238 L761.2 250.3 L766.1 265.1 L771 279.9 L776 289.7 M739 254 L741.5 262.7 L753.8 271.3 L768.6 279.9 L783.3 289.7 L793.2 299.6 L806 304.5 M650.1 365.4 L655.3 367.3 L672.5 368.6 L689.7 369.8 L709.4 371.5 L729.2 372.3 L748.9 373.5 L758.7 369.8 L773.5 361.2 L788.3 356.2 L800.6 346.4 L806 339 M6 460.7 L25.7 463.1 L45.4 464.6 L65.1 467.6 L79.9 473 L94.7 476.2 L109.4 473.7 L124.2 473 L139 473.7 L146.4 478.7 L153.8 471.3 L156.2 465.1 M176 406 L168.6 418.3 L163.6 430.6 L161.2 445.4 L157.5 462.7 L153.8 472.5 L151.3 481.1 L143.9 494.7 L136.5 509.4 L132.8 529.2 L130.4 548.9 L129.2 573.5 L127.9 593.2 L126.2 606 M151.3 481.1 L168.6 479.9 L185.8 478.7 L206 476.2 M206 476.2 L230.6 474.5 L255.3 473.7 L270 470 L284.8 463.9 L292.2 455.3 L299.6 447.9 L307 438 L316.8 428.2 L326.7 418.3 L334.1 410.9 L340.2 406 M259 474.5 L252.8 484.8 L247.9 499.6 L238 516.8 L233.1 529.2 L223.2 541.5 L217.1 551.3 L215.9 563.6 L214.6 576 L210.9 590.7 L206 600.6 M406 534.1 L398.1 546.4 L388.3 558.7 L378.4 566.1 L366.1 576 L353.8 583.3 L341.5 593.2 L329.2 598.1 L316.8 601.8 L309.4 606 M429.4 454 L435.6 465.1 L439.3 472 M439.3 472 L460.2 472 L479.9 465.1 L497.1 457.7 L511.9 447.9 L519.3 435.6 L529.2 423.2 L539 413.4 L545.2 406 M439.3 472 L433.1 484.8 L425.7 499.6 L418.3 514.4 L410.9 526.7 L406 534.1 M612.2 406 L618.3 413.4 L626.9 422 L633.1 428.2 L636.8 433.1 L633.1 438 M631.9 438 L630.6 455.3 L629.4 475 L629.4 497.1 L631.9 514.4 L638 529.2 L645.4 542.7 L649.1 558.7 L652.8 576 L657.7 593.2 L660.2 606 M626.9 422 L638 429.4 L645.4 438 L650.3 445.4 L667.6 454 L684.8 460.2 L704.5 465.1 L724.2 467.6 L741.5 471.3 L758.7 473.7 L776 481.1 L790.7 484.8 L800.6 488.5 L806 494.7 M806 534.1 L803 543.9 L800.6 558.7 L795.7 573.5 L788.3 588.3 L784.6 600.6 L783.8 606 M6 661.4 L15.9 660.2 L14.6 652.8 L25.7 651.6 L38 647.9 L50.3 645.4 L65.1 642.9 L79.9 644.2 L92.2 644.2 L104.5 641.7 L124.2 640.5 L139 641.7 L153.8 642.9 L166.1 647.9 L178.4 652.8 L190.7 655.3 L206 654 M6 615.9 L12.2 623.2 L13.4 633.1 L12.2 645.4 L14.6 654 M92.2 644.2 L91 652.8 L94.7 660.2 L104.5 667.6 L114.4 671.3 L126.7 672.5 L134.1 675 L143.9 679.9 L158.7 684.8 L166.1 679.9 L176 670 L183.3 662.7 L185.8 655.3 M126.2 606 L126.7 625.7 L129.2 635.6 L134.1 642.9 L135.3 652.8 L134.1 665.1 L132.8 673.7 M206 610.9 L198.1 620.8 L193.2 630.6 L189.5 642.9 L185.8 655.3 M206 652.8 L218.3 646.6 L238 642.9 L255.3 644.2 L272.5 642.9 L287.3 639.3 L299.6 635.6 L304.5 630.6 L307 624.5 L313.1 623.2 L324.2 624.5 L339 626.9 L348.9 630.6 L358.7 631.9 L368.6 636.8 L378.4 638 L388.3 633.1 L398.1 625.7 L406 622 M309.4 606 L307 615.9 L305.8 625.7 M406 620.8 L420.8 618.3 L442.9 616.3 L455.3 620.8 L477.4 615.4 L494.7 617.1 L514.4 616.3 L529.2 622 L543.9 626.9 L556.2 629.4 L568.6 635.6 L580.9 639.3 L593.2 638 L606 640.5 M606 640.5 L620.8 641.7 L635.6 644.2 L655.3 646.6 L672.5 651.6 L689.7 655.3 L704.5 659 L719.3 661.4 L739 662.7 L753.8 659 L768.6 656.5 L780.9 654 M660.2 606 L667.6 618.3 L677.4 629.4 L689.7 640.5 L700.8 652.8 L707 661.4 L711.9 672.5 L718.1 684.8 L721.8 699.6 L729.2 711.9 L736.5 724.2 L742.7 736.5 L746.4 748.9 L748.9 763.6 L752.6 778.4 L755 792 M783.8 606 L787 618.3 L788.3 633.1 L785.8 645.4 L789.5 655.3 L793.2 667.6 L800.6 679.9 L806 692.2 M395 99.5 L406.8 101 L417.1 102.5 L427.5 106.2 L434.9 112.1 L437.1 120.2 L437.1 129.1 L434.1 137.9 L431.2 148.3 L428.2 158.6 L418.6 161.6 L409.8 163.8 L400.9 164.5 L392 164.5 L383.2 162.3 L375.8 155.7 L369.9 146.8 L365.5 136.5 L366.9 127.6 L372.1 117.3 L378.7 109.9 L386.1 104 L395 99.5 M334.4 70 L340.3 75.9 L349.2 81.8 L359.5 88.5 L366.9 95.1 L374.3 103.2 L381.7 109.1 L389.1 114.3 L396.5 119.5 L403.9 123.9 L405.3 132 M430.4 70 L427.5 78.9 L423.1 87.7 L420.1 93.6 L416.4 101.8 L412 107.7 L409 112.8 L410.5 120.2 L408.3 126.1 L405.3 132 M330 160.1 L338.9 157.1 L347.7 152 L358.1 149 L368.4 146.8 L378.7 142.4 L387.6 141.6 L395 138.7 L400.9 135 L405.3 132 M405.3 132 L409.8 136.5 L418.6 135 L427.5 133.5 L436.4 132.8 L446.7 132 L457 133.5 L468.8 133.5 L477.7 135.7 L483.6 139.4 L490 137.2 M405.3 132 L406.8 140.9 L403.9 149.8 L401.6 158.6 L400.9 164.5 L398.7 173.4 L396.5 182.3 L395.7 189.9 L397.7 205.9 M405.3 132 L409.8 139.4 L415.7 146.8 L421.6 154.2 L428.2 158.6 L433.4 166 L439.3 173.4 L443.7 182.3 L446.7 188.2 L451.1 189.9 M579.1 334.3 L586.5 333.6 L593.1 335.8 L593.9 343.2 L594.6 352 L590.9 355.7 L586.5 357.9 L582 360.9 L577.6 361.6 L575.4 356.5 L574.7 349.1 L576.1 341.7 L579.1 334.3 M543.6 290 L547.3 295.9 L551.8 301.8 L556.2 306.2 L555.5 312.2 L558.4 318.1 L564.3 320.3 L568.7 321.8 L570.2 326.9 L573.2 332.1 L576.9 335.8 L579.1 340.2 L582 346.1 L582.8 352 M584.3 293.7 L582 298.9 L577.6 304.8 L573.9 310.7 L572.4 316.6 L571 324 L570.2 326.9 M650 307.7 L644.1 309.9 L636.7 315.1 L627.8 318.1 L619 321 L610.1 323.2 L604.2 329.9 L598.3 333.6 L593.1 335.8 L587.9 341 L583.5 345.4 L582.8 352 M520 355 L527.4 354.3 L534.8 352 L545.1 352 L555.5 350.6 L562.8 347.6 L570.2 346.9 L577.6 349.1 L582.8 352 M582.8 352 L589.4 353.5 L596.8 353.2 L604.2 353.5 L608.6 356.5 L614.5 359.4 L621.9 361.6 L629.3 361.6 L638.2 363.1 L650 365.3 M582.8 352 L580.6 357.9 L576.1 362.4 L570.2 366.8 L564.3 371.2 L559.9 375.7 L555.5 381.6 L551.8 390.4 L549.5 397.8 L545.1 405.2 L543.6 409.9 M582.8 352 L585 359.4 L589.4 365.3 L593.9 369.8 L596.8 375.7 L601.2 381.6 L604.2 389 L607.1 396.4 L610.1 403.7 L613.1 409.9 M586.5 356.5 L590.9 360.9 L592.4 366.8 M401.6 356 L402.8 360.9 L402.2 365.9 L403.4 372 L405.3 380.6 L403.4 388 L404 395.4 L407.1 402.8 L409 410.2 L412.7 418.8 L417.6 426.2 L420 432.4 L423.1 441 L426.2 449.6 L428.7 456 M415.1 364.6 L411.4 370.8 L405.3 380.6 L399.1 382.5 L392.9 385.6 L386.8 389.9 L380.6 393.6 L374.5 396.6 L367.1 399.1 L356 401.6 M405.3 380.6 L396.6 385.6 L388 386.8 M392.9 369.5 L396.6 372 L391.7 378.2 L386.8 385.6 L382.5 391.7 M423.7 356 L418.8 358.5 L415.7 362.2 L415.1 364.6 M415.1 364.6 L425 365.2 L434.8 362.8 L444.7 362.2 L456 363.4 M410.8 368.3 L409 375.7 L405.3 380.6" stroke="#846c0e" stroke-width="1" fill="none" stroke-linejoin="round"/>
<path d="M6 105.3 L130.4 105.3 M279.9 105 L311.9 105.3 L309.4 89.7 L325.5 91.7 L363.6 91 L406 90.2 M304.5 6 L308.2 13.4 L304.5 18.3 L287.3 22 L279.9 25.7 L277.4 33.1 L279.9 45.4 L282.4 50.3 L279.9 53.3 M406 90.2 L455.3 92.7 L504.5 94.2 L553.8 95.2 L606 96.6 M606 96.6 L635.6 96.6 L704.5 96.1 L766.1 95.2 L788.3 94.2 L806 98.4 M635.6 96.6 L642.9 91 L655.3 87.3 L675 82.4 L679.9 76.2 L694.7 70 L698.4 61.4 L707 55.3 L708.2 49.1 L721.8 41.7 L739 33.1 L751.3 23.2 L762.4 14.6 L764.9 13.4 M747.6 6 L753.8 10.9 L764.9 13.4 L766.1 19.5 L763.6 24.5 L768.6 30.6 L778.4 36.8 L783.3 41.7 L793.2 40.5 L803 35.6 L806 31.9 M788.3 94.2 L783.3 100.8 L782.1 111.9 L779.6 119.3 L768.6 121.8 L763.6 129.2 L753.8 131.6 L746.4 136.5 L739 137.8 L729.2 143.9 L724.2 151.3 L718.1 152.6 L714.4 146.4 L707 147.6 L699.6 153.8 L693.4 156.2 L692.2 163.6 L684.8 168.6 L675 169.8 L667.6 176 L655.3 183.3 L650.3 188.3 L630.6 188.3 L618.3 193.2 L610.9 200.6 L609.7 206 M142.7 238 L206 238 M157.5 206 L153.8 210.9 L158.7 217.1 L156.2 223.2 L159.9 226.9 L153.8 226.9 L150.1 233.1 L142.7 238 L147.6 242.9 L145.2 249.1 L139 251.6 L134.1 247.9 L130.4 250.3 L132.8 255.3 L126.7 256.5 L129.2 261.4 L125.5 265.1 L130.4 267.6 L124.2 270 L123 277.4 L124.2 287.3 L121.8 292.2 L114.4 293.4 L115.6 299.6 L110.7 297.1 L104.5 304.5 L98.4 307 L104.5 311.9 L99.6 316.8 L95.9 314.4 L100.8 321.8 L97.1 326.7 L91 326.7 L86 331.6 L91 334.1 L87.3 340.2 L92.2 346.4 L84.8 347.6 L81.1 351.3 L87.3 355 L79.9 356.2 L75 355 L78.7 361.2 L75 367.3 L79.9 373.5 L75 376 L79.9 380.9 L86 376 L82.4 383.3 L81.1 389.5 L87.3 393.2 L83.6 398.1 L84.8 404.3 L77.4 406 M201.1 6 L205 11.2 L207.6 21.5 L206.3 29.3 L201.1 31.9 L203.7 39.6 L210.2 47.4 L212.8 55.1 L219.2 60.8 L222.6 56.4 M280 53.8 L273.5 52.5 L267.1 47.4 L259.3 44.8 L251.5 40.9 L243.8 39.1 L238.6 40.9 L232.1 47.4 L227 55.1 L225.7 60.3 L230.9 65.5 L229.6 73.2 L227 81 L230.9 81 L227 86.2 L225.7 92.6 L221.8 97.8 L217.9 96.5 L214 92.6 L211.5 97.8 L207.6 105.6 L203.7 105.6 L205 100.4 L201.1 97 L197.8 100.4 L201.1 104.3 L202.4 109.4 L197.8 113.3 L199.8 118.5 L196.7 122.4 L192.1 126.2 L189 127.5 L193.4 132.7 L195.9 136.6 L192.1 141.8 L188.2 145.6 L186.9 149.5 L192.1 156 L188.2 158.6 L184.3 157.3 L186.9 163.7 L181.7 167.6 L175.3 168.9 L170.1 172.8 L171.4 179.3 L175.3 181.8 L172.7 187 L168.8 189.6 L163.6 190.9 L166.2 196.1 L161 198.7 L155.9 198.7 L159.7 203.8 L154.6 205.1 L157.2 210.3 L154.6 216 M207.6 105 L280 105 M130 105 L155.3 105 L155.9 110.7 L161 114.6 L159.7 122.4 L154.6 130.1 L146.8 136.6 L139.1 148.2 L186.4 149 M206 238 L299.6 238 L299.6 237.3 L335.3 237.3 L406 238 M299.6 238 L303.3 244.2 L307 246.6 L306.5 255.3 L304.5 279.9 L300.8 316.8 L297.1 353.8 L293.4 383.3 L291 406 M406 238 L445.4 238.8 L606 239.3 M492.2 239.3 L498.4 270 L504.5 304.5 L509.4 334.1 L514.4 366.1 L520.5 406 M588.3 238.8 L589.5 228.2 L590.7 217.1 L595.7 214.6 L606 215.9 M609.7 206 L608.5 209.7 L606 212.2 M606 239.3 L660.2 238.5 L678.7 237.5 M678.7 237.5 L689.7 233.1 L704.5 230.6 L711.9 226.9 L724.2 223.2 L734.1 220.8 L753.8 221.3 L778.4 222.3 L806 223.7 M678.7 237.5 L677.4 242.9 L667.6 249.1 L662.7 255.3 L660.2 263.9 L667.6 270 L677.4 278.7 L684.8 284.3 L694.7 284.3 L698.4 291 L703.3 298.4 L705.8 307 L711.9 316.8 L716.8 326.7 L724.2 334.1 L734.1 341.5 L741.5 348.9 L746.4 357.5 L753.8 362.4 L761.2 368.6 L767.3 376 L766.1 383.3 L771 388.3 L773.5 395.7 L778.4 401.8 L783.3 406 M6 415.4 L78.7 415.4 M77.4 406 L82.4 410.9 L78.7 415.9 L76.2 422 L81.1 425.7 L84.8 419.5 L86 428.2 L79.9 433.1 L78.7 440.5 L82.4 446.6 L87.3 452.8 L91 449.1 L92.2 455.3 L86 459 L84.8 463.9 L91 465.1 L95.9 462.7 L93.4 468.8 L99.6 472.5 L98.4 477.4 L92.2 478.7 L89.7 483.6 L82.4 484.8 L78.7 489.7 L82.4 493.4 L89.7 491 L91 494.7 L84.8 498.4 L83.6 503.3 L87.3 505.8 L79.9 509.4 L76.2 514.4 L71.3 518.1 L66.3 519.3 L65.1 525.5 L71.3 527.9 L68.8 523 L63.9 529.2 L61.4 536.5 L55.3 537.8 L54 542.7 L59 540.2 L61.4 546.4 L56.5 551.3 L52.8 556.2 L49.1 559.9 L51.6 563.6 L55.3 559.9 L51.6 568.6 L45.4 569.8 L46.6 578.4 L44.2 583.3 L47.9 587 L45.4 590.7 L49.1 592.5 L44.2 594.4 M44.2 594.4 L185.8 594.4 L184.6 600.6 L182.1 606 M291 406 L287.3 442.9 L283.6 475 L279.9 504.5 L279.9 529.2 L281.1 553.8 L282.4 578.4 L283.6 606 M406 595.2 L345.2 595.2 L343.9 600.6 L341.5 606 M520.5 406 L523 418.3 L526.7 433.1 L530.4 447.9 L536.5 457.7 L540.2 467.6 L537.8 476.2 L545.2 481.1 L542.7 486 L535.3 489.7 L532.8 497.1 L534.1 504.5 L531.6 514.4 L530.4 524.2 L532.8 539 L534.1 548.9 L531.6 563.6 L529.2 576 L532.8 583.3 L536.5 592 L540.2 600.6 L541.5 606 M406 595.2 L536.5 594.4 M783.3 406 L790.7 409.7 L796.9 415.9 L799.3 423.2 L803 433.1 L804.3 442.9 L806 447.9 M182.1 606 L178.4 615.9 L179.6 625.7 L183.3 633.1 L188.3 640.5 L189.5 647.9 L193.2 655.3 L194.4 662.7 L198.1 666.3 M283.6 606 L284.8 630.6 L285.3 649.1 M341.5 606 L346.4 612.2 L353.8 618.3 L358.7 624.5 L359.9 630.6 L356.2 635.6 L356.7 642.9 L361.2 644.2 M548.9 620.3 L578.4 622 L606 623.2 M540.2 606 L542.7 610.9 M606 623.2 L655.3 626.2 L704.5 629.4 L743.9 631.4 L745.2 638 L746.4 647.9 L751.3 650.8 L757.5 650.3 L759.9 640.5 L758.7 630.6 L757.5 620.8 L759.9 613.4 L766.1 609.7 L773.5 612.2 L780.9 615.9 L788.3 617.1" stroke="#000" stroke-width="1.3" fill="none" stroke-linejoin="round"/>
<path d="M336 660.4 L324.2 662.7 L314.4 664.1 L311.4 665.4 M229.4 663.1 L233.1 662.7 M242.9 663.1 L249.1 662.2 M256.5 661.7 L263.9 662.2 M267.6 663.1 L275 663.1 M278.7 664.1 L286 665.1 M291 662.7 L299.6 664.1 M248.9 678.4 L252.1 681.6 L254 688 L253.7 695.3 M253.4 698.5 L252.1 704.1 L248.9 708.9 M245.7 712.1 L242.5 715.3 M239.3 717.7 L238 716.9 M236.1 723.3 L233.7 725.7 M228.1 728.1 L224.1 731.3 M242.5 696.1 L245.7 693.7 L250.5 692.9 L248.1 696.1 L244.1 698.5 L242.5 701.7 M227.3 662.4 L234.5 661.6 L232.9 664.8 M240.9 664.8 L248.9 662.4 M258.5 660.8 L268.1 662.1 L276.1 664 L284.1 665.3 M507 694.7 L509.4 693.4 L513.1 698.4 L514.9 704.5 L513.6 711.4 M534.1 719.8 L543.9 716.3 L553.8 711.4 L563.6 705 L569.8 700.8" stroke="#000" stroke-width="1.3" fill="none"/>
<ellipse cx="785" cy="655" rx="7.5" ry="12" fill="none" stroke="#846c0e" stroke-width="1.1"/>
</svg>
<svg width="800" height="800" viewBox="6 6 800 800" style="position:absolute;left:6px;top:6px">
<circle cx="407" cy="407.5" r="159.4" fill="none" stroke="#ececec" stroke-width="0.95"/>
<circle cx="407" cy="407.5" r="279.3" fill="none" stroke="#ececec" stroke-width="0.95"/>
<circle cx="407" cy="407.5" r="399.2" fill="none" stroke="#ececec" stroke-width="0.95"/>
<circle cx="407" cy="407.5" r="519" fill="none" stroke="#ececec" stroke-width="0.95"/>
<circle cx="407" cy="407.5" r="39.8" fill="none" stroke="#ff0000" stroke-width="1.2"/>
<rect x="395.0" y="3.3000000000000007" width="21" height="9" fill="#5c504a"/>
<text x="405.9" y="11.3" text-anchor="middle" font-size="10.5" letter-spacing="0.9" fill="#ffff8c">313</text>
<rect x="395.0" y="123.30000000000001" width="21" height="9" fill="#5c504a"/>
<text x="405.9" y="131.3" text-anchor="middle" font-size="10.5" letter-spacing="0.9" fill="#ffff8c">219</text>
<rect x="395.0" y="243.3" width="21" height="9" fill="#5c504a"/>
<text x="405.9" y="251.3" text-anchor="middle" font-size="10.5" letter-spacing="0.9" fill="#ffff8c">125</text>
<rect x="398.5" y="363" width="14" height="9" fill="#5c504a"/>
<text x="405.9" y="371" text-anchor="middle" font-size="10.5" letter-spacing="0.9" fill="#ffff8c">31</text>
<rect x="700.0" y="28.6" width="7" height="1.3" fill="#ffa01e"/>
<circle cx="770.5" cy="37.5" r="4.2" fill="none" stroke="#ffa01e" stroke-width="1.1"/><path d="M768.0 37.5h5" stroke="#ffa01e" stroke-width="1.1"/>
<path d="M767.8 50.5h7M771.3 47.0v7" stroke="#ffc81e" stroke-width="1.2"/>
<rect x="744.9" y="54.7" width="7" height="1.3" fill="#e8641e"/>
<circle cx="754.5" cy="126.5" r="4.2" fill="none" stroke="#ffe61e" stroke-width="1.1"/><path d="M752.0 126.5h5" stroke="#ffe61e" stroke-width="1.1"/>
<rect x="761.5" y="124.6" width="7" height="1.3" fill="#ff8c1e"/>
<circle cx="773.1" cy="126.5" r="4.2" fill="none" stroke="#ffc81e" stroke-width="1.1"/><path d="M770.6 126.5h5M773.1 124.0v5" stroke="#ffc81e" stroke-width="1.1"/>
<path d="M774.4 126.5h6M777.4 123.5v6" stroke="#ffe61e" stroke-width="1.2"/>
<rect x="745.3" y="134.8" width="7" height="1.3" fill="#ffa01e"/>
<circle cx="756.3" cy="136.3" r="4.2" fill="none" stroke="#ffe61e" stroke-width="1.1"/><path d="M753.8 136.3h5M756.3 133.8v5" stroke="#ffe61e" stroke-width="1.1"/>
<circle cx="798.6" cy="121.2" r="4.2" fill="none" stroke="#e8641e" stroke-width="1.1"/><path d="M796.1 121.2h5" stroke="#e8641e" stroke-width="1.1"/>
<rect x="748.0" y="143.6" width="7" height="1.3" fill="#ffa01e"/>
<rect x="688.0" y="144.9" width="7" height="1.3" fill="#ffe61e"/>
<rect x="705.5" y="147.7" width="7" height="1.3" fill="#e8641e"/>
<rect x="765.0" y="148.6" width="7" height="1.3" fill="#ffe61e"/>
<rect x="765.0" y="158.8" width="7" height="1.3" fill="#e8641e"/>
<rect x="701.9" y="164.9" width="7" height="1.3" fill="#ffe61e"/>
<rect x="783.1" y="161.2" width="7" height="1.3" fill="#ffa01e"/>
<circle cx="787.2" cy="167.2" r="4.2" fill="none" stroke="#ffa01e" stroke-width="1.1"/><path d="M784.7 167.2h5M787.2 164.7v5" stroke="#ffa01e" stroke-width="1.1"/>
<rect x="773.9" y="172.7" width="7" height="1.3" fill="#ffe61e"/>
<rect x="717.0" y="181.0" width="7" height="1.3" fill="#ffe61e"/>
<circle cx="741.4" cy="182.2" r="4.2" fill="none" stroke="#e8641e" stroke-width="1.1"/><path d="M738.9 182.2h5M741.4 179.7v5" stroke="#e8641e" stroke-width="1.1"/>
<circle cx="778.3" cy="196.4" r="4.2" fill="none" stroke="#e8641e" stroke-width="1.1"/><path d="M775.8 196.4h5" stroke="#e8641e" stroke-width="1.1"/>
<rect x="718.9" y="203.0" width="7" height="1.3" fill="#ff8c1e"/>
<path d="M787.7 211.3h7M791.2 207.8v7" stroke="#ffa01e" stroke-width="1.2"/>
<path d="M797.8 210.0h6M800.8 207.0v6" stroke="#ffa01e" stroke-width="1.2"/>
<rect x="797.8" y="213.4" width="6" height="1.3" fill="#ffa01e"/>
<rect x="800.0" y="217.7" width="6" height="1.3" fill="#e8641e"/>
<circle cx="755.2" cy="220.4" r="4.2" fill="none" stroke="#e8641e" stroke-width="1.1"/><path d="M752.7 220.4h5M755.2 217.9v5" stroke="#e8641e" stroke-width="1.1"/>
<rect x="750.0" y="219.9" width="6" height="1.3" fill="#ffe61e"/>
<rect x="740.7" y="221.8" width="7" height="1.3" fill="#ffa01e"/>
<rect x="738.8" y="225.9" width="7" height="1.3" fill="#ffe61e"/>
<rect x="754.9" y="232.7" width="7" height="1.3" fill="#e8641e"/>
<rect x="761.9" y="235.4" width="7" height="1.3" fill="#ffa01e"/>
<circle cx="797.3" cy="238.5" r="4.2" fill="none" stroke="#ffe61e" stroke-width="1.1"/><path d="M794.8 238.5h5M797.3 236.0v5" stroke="#ffe61e" stroke-width="1.1"/>
<rect x="748.0" y="239.7" width="7" height="1.3" fill="#ffa01e"/>
<rect x="739.7" y="242.8" width="7" height="1.3" fill="#e8641e"/>
<rect x="743.8" y="244.7" width="7" height="1.3" fill="#ffa01e"/>
<rect x="796.0" y="247.8" width="7" height="1.3" fill="#e8641e"/>
<rect x="770.7" y="251.7" width="7" height="1.3" fill="#e8641e"/>
<rect x="759.7" y="256.7" width="7" height="1.3" fill="#ffa01e"/>
<circle cx="768.5" cy="263" r="4.2" fill="none" stroke="#ffa01e" stroke-width="1.1"/><path d="M766.0 263h5M768.5 260.5v5" stroke="#ffa01e" stroke-width="1.1"/>
<rect x="791.0" y="267.6" width="7" height="1.3" fill="#e8641e"/>
<circle cx="780.3" cy="273.3" r="4.2" fill="none" stroke="#ff8c1e" stroke-width="1.1"/><path d="M777.8 273.3h5M780.3 270.8v5" stroke="#ff8c1e" stroke-width="1.1"/>
<circle cx="775.3" cy="291.3" r="4.2" fill="none" stroke="#ffa01e" stroke-width="1.1"/><path d="M772.8 291.3h5M775.3 288.8v5" stroke="#ffa01e" stroke-width="1.1"/>
<rect x="758.7" y="301.7" width="7" height="1.3" fill="#ffa01e"/>
<rect x="744.9" y="620.6" width="7" height="1.3" fill="#ffe61e"/>
<rect x="9.5" y="759.5" width="243" height="43" fill="#000" stroke="#8a8a8a" stroke-width="1"/>
<g font-size="9.5" fill="#fff">
<text x="13" y="770.7">Symbols</text>
<text x="53" y="770.7">-CG</text>
<text x="78" y="770.7">-IC</text>
<text x="99" y="770.7">+CG</text>
<text x="124" y="770.7">+IC</text>
<text x="153" y="770.7" font-size="9.1">Strike age color codes</text>
<text x="13" y="784">Recent</text><text x="13" y="796.5">Old</text>
<text x="153" y="784" fill="#ffd21e">15+</text><text x="188" y="784" fill="#ffa01e">30+</text><text x="222" y="784" fill="#ff9a1e">45+</text>
<text x="153" y="796.5" fill="#ff8c1e">60+</text><text x="188" y="796.5" fill="#ff6e14">75+</text><text x="222" y="796.5" fill="#ff3c14">90+</text>
</g>
<circle cx="60.5" cy="780.5" r="4.2" fill="none" stroke="#00e6e6" stroke-width="1.1"/><path d="M58.0 780.5h5" stroke="#00e6e6" stroke-width="1.1"/><rect x="81.9" y="779.9" width="7" height="1.3" fill="#00e6e6"/><circle cx="110.4" cy="780.5" r="4.2" fill="none" stroke="#00e6e6" stroke-width="1.1"/><path d="M107.9 780.5h5M110.4 778.0v5" stroke="#00e6e6" stroke-width="1.1"/><path d="M132.0 780.5h7M135.5 777.0v7" stroke="#00e6e6" stroke-width="1.2"/>
<circle cx="60.5" cy="793.3" r="4.2" fill="none" stroke="#ffff00" stroke-width="1.1"/><path d="M58.0 793.3h5" stroke="#ffff00" stroke-width="1.1"/><rect x="81.9" y="792.7" width="7" height="1.3" fill="#ffff00"/><circle cx="110.4" cy="793.3" r="4.2" fill="none" stroke="#ffff00" stroke-width="1.1"/><path d="M107.9 793.3h5M110.4 790.8v5" stroke="#ffff00" stroke-width="1.1"/><path d="M132.0 793.3h7M135.5 789.8v7" stroke="#ffff00" stroke-width="1.2"/>
<rect x="685" y="792" width="121" height="14" fill="#000"/>
<text x="689" y="801.8" font-size="9.5" fill="#fff">©2005 Astrogenic Systems</text>
</svg>
<div class="box" style="top:8px;height:320px"></div>
<div class="box" style="top:333px;height:115px"></div>
<div class="box" style="top:453px;height:349px"></div>
<div class="btn" style="left:819px;top:16px;width:58px;background:#540000;color:#e6d8d8">STRIKE</div>
<div class="btn" style="left:883px;top:16px;width:58px;background:#363636;color:#b8b8b8">NOISE</div>
<div class="btn" style="left:994px;top:16px;width:128px;background:#2c2c2c;color:#fff;text-align:left;padding-left:4px">Bng 61°<span style="position:absolute;right:4px;color:#00e600">307mi</span></div>
<div class="lbl" style="left:821px;top:64px">Strikes/min</div>
<div class="lbl" style="left:931px;top:64px">Close/min</div>
<div class="lbl" style="left:1041px;top:64px">Noises/min</div>
<div class="big" style="right:235px;top:88.3px;color:#fff">0</div>
<div class="big" style="right:125px;top:88.3px;color:#fff">0</div>
<div class="big" style="right:15px;top:88.3px;color:#c0c0c0">0</div>
<div class="t " style="right:235px;top:131.1px;font-size:14px">Total Strikes</div>
<div class="t " style="right:125px;top:131.1px;font-size:14px">Total Close</div>
<div class="t g" style="right:15px;top:131.1px;font-size:14px">Total Noises</div>
<div class="t " style="right:235px;top:149.1px;font-size:14px">2503</div>
<div class="t " style="right:125px;top:149.1px;font-size:14px">0</div>
<div class="t " style="right:15px;top:149.1px;font-size:14px">167</div>
<div class="t g" style="left:821px;top:202.7px;font-size:14.5px;">Lightning type distribution</div>
<div class="hr" style="left:821px;top:217px;width:303px"></div>
<div class="t b" style="left:821px;top:226.2px;font-size:12.8px;">Cloud-ground</div>
<div class="t g" style="left:913px;top:225.1px;font-size:14px;">+</div>
<div class="bar" style="left:925px;top:227px"><i style="width:21px;background:#ff0000"></i></div>
<div class="t b" style="left:980px;top:224.9px;font-size:14.3px;">42%</div>
<div class="t b" style="left:1016px;top:225.1px;font-size:14px;">−</div>
<div class="bar" style="left:1028px;top:227px"><i style="width:5px;background:#99ccff"></i></div>
<div class="t b" style="left:1083px;top:224.9px;font-size:14.3px;">11%</div>
<div class="t g" style="left:821px;top:249.1px;font-size:14px;">Count</div>
<div class="t b" style="left:925.5px;top:248.9px;font-size:14.3px;">1046</div>
<div class="t b" style="left:1028.5px;top:248.9px;font-size:14.3px;">273</div>
<div class="t b" style="left:821px;top:279.8px;font-size:13.2px;">Intracloud</div>
<div class="t g" style="left:913px;top:279.1px;font-size:14px;">+</div>
<div class="bar" style="left:925px;top:281px"><i style="width:3px;background:#ff69b4"></i></div>
<div class="t b" style="left:980px;top:278.9px;font-size:14.3px;">6%</div>
<div class="t b" style="left:1016px;top:279.1px;font-size:14px;">−</div>
<div class="bar" style="left:1028px;top:281px"><i style="width:21px;background:#00ff00"></i></div>
<div class="t b" style="left:1083px;top:278.9px;font-size:14.3px;">41%</div>
<div class="t g" style="left:821px;top:303.1px;font-size:14px;">Count</div>
<div class="t b" style="left:925.5px;top:302.9px;font-size:14.3px;">158</div>
<div class="t b" style="left:1028.5px;top:302.9px;font-size:14.3px;">1026</div>
<div class="t b gr" style="left:821px;top:339.3px;font-size:16.2px;transform-origin:left center;transform:scaleX(1.257)">10/20/2025 4:09:16 PM</div>
<div class="hr" style="left:821px;top:358px;width:302px"></div>
<div class="t " style="left:821px;top:376.1px;font-size:14px;">Squelch</div>
<div class="t " style="left:909.5px;top:376.1px;font-size:14px;">0</div>
<div class="t " style="left:981.5px;top:376.1px;font-size:14px;">Upload</div>
<div class="t g" style="left:1061px;top:376.1px;font-size:14px;">Disabled</div>
<div class="t " style="left:821px;top:396.1px;font-size:14px;">Persistence</div>
<div class="t " style="left:909.5px;top:396.1px;font-size:14px;">90 min</div>
<div class="t " style="left:981.5px;top:396.1px;font-size:14px;">Capture</div>
<div class="t gr" style="left:1061px;top:396.1px;font-size:14px;">Active</div>
<div class="t " style="left:821px;top:416.1px;font-size:14px;">Range</div>
<div class="t " style="left:909.5px;top:416.1px;font-size:14px;">313 mi</div>
<div class="t " style="left:981.5px;top:416.1px;font-size:14px;">Receiver</div>
<div class="t gr" style="left:1061px;top:416.1px;font-size:14px;">Enabled</div>
<div class="t g" style="left:821px;top:463.1px;font-size:14px;">Uptime</div>
<div class="t " style="left:909.5px;top:463.1px;font-size:14px;">83:39</div>
<div class="t g" style="left:981.5px;top:463.1px;font-size:14px;">Peak time</div>
<div class="t g" style="left:1061px;top:463.1px;font-size:14px;">Plot</div>
<div class="t g" style="left:821px;top:486.1px;font-size:14px;">Peak rate</div>
<div class="t " style="left:909.5px;top:486.1px;font-size:14px;">17/min</div>
<div class="t " style="left:981.5px;top:486.1px;font-size:14px;">1:02 AM</div>
<div class="t " style="left:1061px;top:486.1px;font-size:14px;">Strike</div>
<div class="t g" style="left:822.5px;top:516.1px;font-size:14px;">Trend graph</div>
<div class="t " style="left:908.5px;top:516.1px;font-size:14px;">60 min</div>
<svg width="326" height="349" viewBox="812 453 326 349" style="position:absolute;left:812px;top:453px" shape-rendering="crispEdges">
<path d="M1088.5 542.5V777.5M822.5 777.5H1088.5" stroke="#c8c8c8" stroke-width="1" fill="none"/>
<path d="M1086 542.5h3 M1086 582.5h3 M1086 621.5h3 M1086 660.5h3 M1086 699.5h3 M1086 738.5h3 M1086 778.5h3 M822.5 776v3 M867.5 776v3 M911.5 776v3 M955.5 776v3 M1000.5 776v3 M1044.5 776v3 M1088.5 776v3" stroke="#c8c8c8" stroke-width="1"/>
<polyline points="822.6,769.7 823.7,776.5 825,774 828.9,761.4 834,777 835.5,769.5 838,769.5 840.2,777 843.2,777 845,769.5 847.2,769.5 849.4,777 866.5,777 871.5,753.5 874.4,753.5 878.8,777 880,777 882.3,769.5 891.1,769.5 892.9,777 896,777 897.3,769.5 899.9,769.5 902.5,777 904.7,777 906.5,769.5 909.1,769.5 911.4,777 913,777 914.3,769.5 918.7,769.5 920.5,777 935.9,777 938.5,769.5 941.1,769.5 942.5,761.7 944.7,761.7 945.4,753.5 947.7,761.7 949,769.5 950.4,777 951.7,767 953.9,761.4 957.8,777 963.1,777 965.3,769.5 968.4,769.5 969.7,777 975,777 977.2,769.5 980.7,769.5 981.7,777 992.1,777 993.4,769.5 995.2,769.5 996.5,761.4 998.3,769.5 1001.3,777 1004.8,777 1007,769.5 1010.5,769.5 1011.8,777 1019.3,777 1021.5,769.5 1024.3,761.4 1026.8,769.5 1028.7,777 1043,777 1045.2,769.5 1048.3,761.4 1051.4,753.5 1052.7,759 1054.2,753.5 1055.8,763.5 1057.5,771.5 1058.8,777 1063.2,777 1064.1,761.7 1066.3,761.7 1067.6,753.5 1069.4,761.7 1070.7,769.5 1072.5,777 1076.4,777 1078.6,769.5 1081.7,769.5 1083,777 1088.5,777" stroke="#fff" stroke-width="1" fill="none" shape-rendering="auto"/>
<polyline points="826,777 828,769.5" stroke="#ff0000" stroke-width="1" fill="none" shape-rendering="auto"/>
<polyline points="827.5,769.5 830,769.5 832,777" stroke="#00ff00" stroke-width="1" fill="none" shape-rendering="auto"/>
<polyline points="872.5,753.5 875.5,768 877.5,777" stroke="#00ff00" stroke-width="1" fill="none" shape-rendering="auto"/>
<polyline points="873.5,777 875,769.5" stroke="#ff0000" stroke-width="1" fill="none" shape-rendering="auto"/>
<polyline points="886.5,769.5 888.5,777" stroke="#00ff00" stroke-width="1" fill="none" shape-rendering="auto"/>
<polyline points="887,777 888.5,769.5" stroke="#ff0000" stroke-width="1" fill="none" shape-rendering="auto"/>
<polyline points="917,769.5 919,777" stroke="#00ff00" stroke-width="1" fill="none" shape-rendering="auto"/>
<polyline points="942,769.5 946,769.5" stroke="#00ff00" stroke-width="1" fill="none" shape-rendering="auto"/>
<polyline points="943,777 944,769.5 945.5,777 947,769.5" stroke="#00ff00" stroke-width="1" fill="none" shape-rendering="auto"/>
<polyline points="942,777 944.5,769.5" stroke="#ff0000" stroke-width="1" fill="none" shape-rendering="auto"/>
<polyline points="946.5,777 947.5,769.5" stroke="#ff1493" stroke-width="1" fill="none" shape-rendering="auto"/>
<polyline points="948.5,777 947.5,770" stroke="#ff0000" stroke-width="1" fill="none" shape-rendering="auto"/>
<polyline points="995.5,777 997,769.5" stroke="#ff0000" stroke-width="1" fill="none" shape-rendering="auto"/>
<polyline points="996.5,769.5 998.5,777" stroke="#ff69b4" stroke-width="1" fill="none" shape-rendering="auto"/>
<polyline points="1047,769.5 1049.5,769.5 1050,777" stroke="#00ff00" stroke-width="1" fill="none" shape-rendering="auto"/>
<polyline points="1050.5,771 1051.5,761.5" stroke="#00ff00" stroke-width="1" fill="none" shape-rendering="auto"/>
<polyline points="1046.5,777 1048,771" stroke="#6eb4ff" stroke-width="1" fill="none" shape-rendering="auto"/>
<polyline points="1051,771 1052.5,777" stroke="#6eb4ff" stroke-width="1" fill="none" shape-rendering="auto"/>
<polyline points="1064.5,773 1065,769.5 1069,769.5" stroke="#00ff00" stroke-width="1" fill="none" shape-rendering="auto"/>
<polyline points="1066.5,769.5 1067.5,761.5 1069,766" stroke="#00ff00" stroke-width="1" fill="none" shape-rendering="auto"/>
<polyline points="1069,769.5 1071,777" stroke="#ff69b4" stroke-width="1" fill="none" shape-rendering="auto"/>
<g font-size="13" fill="#e6e6e6">
<text x="821" y="792.5">60</text>
<text x="864" y="792.5">50</text>
<text x="908.3" y="792.5">40</text>
<text x="952.5" y="792.5">30</text>
<text x="996.4" y="792.5">20</text>
<text x="1042.4" y="792.5">10</text>
<text x="1088.4" y="792.5">0</text>
<text x="1100" y="792.5">min</text>
<text x="1092" y="547">30</text>
<text x="1092" y="625">20</text>
<text x="1092" y="703.5">10</text>
</g></svg>
</body></html>
